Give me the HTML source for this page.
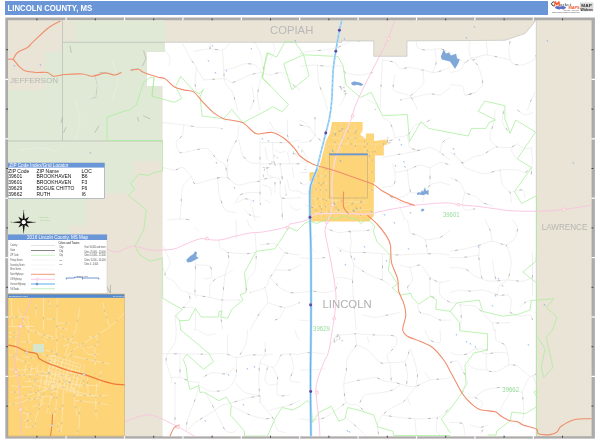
<!DOCTYPE html>
<html><head><meta charset="utf-8">
<style>
html,body{margin:0;padding:0;background:#fff;}
body{width:600px;height:440px;overflow:hidden;position:relative;font-family:"Liberation Sans",sans-serif;}
svg{position:absolute;left:0;top:0;will-change:transform;}
text{font-family:"Liberation Sans",sans-serif;}
.s{font-family:"Liberation Serif",serif;}
</style></head><body>
<svg width="600" height="440" viewBox="0 0 600 440">
<rect x="5" y="1" width="543" height="14" fill="#6a96d8"/>
<text x="7.5" y="11.1" font-size="8.3" font-weight="bold" fill="#fff" textLength="84.6" lengthAdjust="spacingAndGlyphs">LINCOLN COUNTY, MS</text>
<rect x="5.3" y="17.5" width="589.6" height="421.1" fill="#adaaaa"/>
<defs><clipPath id="mc"><rect x="8" y="20.3" width="583.6" height="415.9"/></clipPath></defs>
<g clip-path="url(#mc)">
<rect x="7" y="19" width="586" height="418" fill="#e9e4d6"/>
<path d="M62.5,20 L165,20 L165,52 L147,52 L147,86 L161,86 L161,161 L134,161 L134,193 L87,193 L87,225 L70,225 L70,236 L7,236 L7,110 L7,90 L45,90 L45,52 L62.5,52 Z" fill="#dfe9d5"/>
<rect x="62.5" y="20" width="14.5" height="21.8" fill="#e7e5d5"/>
<path d="M165,42.3 L341.5,42.3 L341.5,40.9 L373.8,40.9 L373.8,56.3 L407,56.3 L407,40.9 L470,40.7 L505,40.3 L512,38 L525,33.5 L531,27 L536.3,20 L536.3,437 L162.6,437 L162.6,86 L147,86 L147,52 L165,52 Z" fill="#fff"/>
<path d="M62.5,20 L62.5,141 M62.5,42.3 L165,42.3 M8,141 L162.6,141" fill="none" stroke="#b9bcb6" stroke-width="0.7"/>
<path d="M165,42.3 L341.5,42.3 L341.5,40.9 L373.8,40.9 L373.8,56.3 L407,56.3 L407,40.9 L505,40.3 L525,33.5 L536.3,20 M536.3,20 L536.3,437" fill="none" stroke="#c4c4c0" stroke-width="0.7"/>
<path d="M332,122 L362.6,122 L362.6,131 L360,134.5 L366,139 L366,133.5 L374,133.5 L374,141 L387.5,139.5 L387.5,144.5 L383.8,145 L383.8,155.5 L375,155.5 L375,182 L373.8,183 L373.8,216 L369,221.5 L311,221.5 L311,217 L310.2,190 L313.5,181 L309.4,181 L309.4,172.6 L317.6,171.5 L321,161 L326,141 L330,133 Z" fill="#fdd478" stroke="none" stroke-width="0" stroke-linejoin="round" stroke-linecap="round" />
<defs><clipPath id="cityc"><path d="M332,122 L362.6,122 L362.6,131 L360,134.5 L366,139 L366,133.5 L374,133.5 L374,141 L387.5,139.5 L387.5,144.5 L383.8,145 L383.8,155.5 L375,155.5 L375,182 L373.8,183 L373.8,216 L369,221.5 L311,221.5 L311,217 L310.2,190 L313.5,181 L309.4,181 L309.4,172.6 L317.6,171.5 L321,161 L326,141 L330,133 Z"/></clipPath></defs>
<g clip-path="url(#cityc)">
<path d="M341,122 L341,153" fill="none" stroke="#fae6b4" stroke-width="0.5" stroke-linejoin="round" stroke-linecap="round" />
<path d="M355,124 L355.5,153" fill="none" stroke="#fae6b4" stroke-width="0.5" stroke-linejoin="round" stroke-linecap="round" />
<path d="M364.6,134 L365,153" fill="none" stroke="#fae6b4" stroke-width="0.5" stroke-linejoin="round" stroke-linecap="round" />
<path d="M332,131 L362,131" fill="none" stroke="#fae6b4" stroke-width="0.5" stroke-linejoin="round" stroke-linecap="round" />
<path d="M333,138 L366,138" fill="none" stroke="#fae6b4" stroke-width="0.5" stroke-linejoin="round" stroke-linecap="round" />
<path d="M328,144 L383,144" fill="none" stroke="#fae6b4" stroke-width="0.5" stroke-linejoin="round" stroke-linecap="round" />
<path d="M348,122 L348,144" fill="none" stroke="#fae6b4" stroke-width="0.5" stroke-linejoin="round" stroke-linecap="round" />
<path d="M335,126 L335,150" fill="none" stroke="#fae6b4" stroke-width="0.5" stroke-linejoin="round" stroke-linecap="round" />
<path d="M375,144 L375.5,156" fill="none" stroke="#fae6b4" stroke-width="0.5" stroke-linejoin="round" stroke-linecap="round" />
<path d="M368,156 L375,150" fill="none" stroke="#fae6b4" stroke-width="0.5" stroke-linejoin="round" stroke-linecap="round" />
<path d="M312,176 L329,176" fill="none" stroke="#fae6b4" stroke-width="0.5" stroke-linejoin="round" stroke-linecap="round" />
<path d="M312,183 L329,183" fill="none" stroke="#fae6b4" stroke-width="0.5" stroke-linejoin="round" stroke-linecap="round" />
<path d="M314,190 L329.5,190" fill="none" stroke="#fae6b4" stroke-width="0.5" stroke-linejoin="round" stroke-linecap="round" />
<path d="M312,198 L329,200" fill="none" stroke="#fae6b4" stroke-width="0.5" stroke-linejoin="round" stroke-linecap="round" />
<path d="M312,206 L330,207" fill="none" stroke="#fae6b4" stroke-width="0.5" stroke-linejoin="round" stroke-linecap="round" />
<path d="M316,172 L316,220" fill="none" stroke="#fae6b4" stroke-width="0.5" stroke-linejoin="round" stroke-linecap="round" />
<path d="M321,165 L321.5,220" fill="none" stroke="#fae6b4" stroke-width="0.5" stroke-linejoin="round" stroke-linecap="round" />
<path d="M326,150 L326.5,215" fill="none" stroke="#fae6b4" stroke-width="0.5" stroke-linejoin="round" stroke-linecap="round" />
<path d="M329.5,200 L368,203" fill="none" stroke="#fae6b4" stroke-width="0.5" stroke-linejoin="round" stroke-linecap="round" />
<path d="M336,198 L336,221" fill="none" stroke="#fae6b4" stroke-width="0.5" stroke-linejoin="round" stroke-linecap="round" />
<path d="M352,198 L352,221" fill="none" stroke="#fae6b4" stroke-width="0.5" stroke-linejoin="round" stroke-linecap="round" />
<path d="M360,198 L361,221" fill="none" stroke="#fae6b4" stroke-width="0.5" stroke-linejoin="round" stroke-linecap="round" />
<path d="M368,160 L374,160" fill="none" stroke="#fae6b4" stroke-width="0.5" stroke-linejoin="round" stroke-linecap="round" />
<path d="M368,172 L375,172" fill="none" stroke="#fae6b4" stroke-width="0.5" stroke-linejoin="round" stroke-linecap="round" />
<path d="M368,190 L374,190" fill="none" stroke="#fae6b4" stroke-width="0.5" stroke-linejoin="round" stroke-linecap="round" />
<path d="M312,213 L372,209" fill="none" stroke="#fae6b4" stroke-width="0.5" stroke-linejoin="round" stroke-linecap="round" />
<path d="M345,205 L366,200" fill="none" stroke="#fae6b4" stroke-width="0.5" stroke-linejoin="round" stroke-linecap="round" />
<path d="M341.0,129.7 l0.0,2.2 M341.0,144.0 l0.0,2.2 M355.1,131.9 l0.0,2.2 M355.4,144.9 l0.0,2.2 M364.7,140.2 l0.0,2.2 M364.8,145.6 l0.0,2.2 M338.1,131.0 l2.2,0.0 M355.0,131.0 l2.2,0.0 M341.3,138.0 l2.2,0.0 M354.3,138.0 l2.2,0.0 M350.0,144.0 l2.2,0.0 M366.2,144.0 l2.2,0.0 M348.0,130.1 l0.0,2.2 M348.0,137.3 l0.0,2.2 M335.0,133.9 l0.0,2.2 M335.0,141.1 l0.0,2.2 M375.3,150.3 l0.1,2.2 M372.0,152.6 l1.7,-1.4 M317.2,176.0 l2.2,0.0 M324.7,176.0 l2.2,0.0 M317.7,183.0 l2.2,0.0 M322.4,183.0 l2.2,0.0 M319.5,190.0 l2.2,0.0 M325.1,190.0 l2.2,0.0 M316.4,198.5 l2.2,0.3 M322.3,199.2 l2.2,0.3 M318.7,206.4 l2.2,0.1 M324.5,206.7 l2.2,0.1 M316.0,188.5 l0.0,2.2 M316.0,209.2 l0.0,2.2 M321.2,183.9 l0.0,2.2 M321.4,208.1 l0.0,2.2 M326.1,168.1 l0.0,2.2 M326.4,199.4 l0.0,2.2 M340.6,200.9 l2.2,0.2 M359.8,202.4 l2.2,0.2 M336.0,206.6 l0.0,2.2 M336.0,212.2 l0.0,2.2 M352.0,203.2 l0.0,2.2 M352.0,212.8 l0.0,2.2 M360.4,207.0 l0.1,2.2 M360.7,213.8 l0.1,2.2 M371.2,160.0 l2.2,0.0 M371.2,172.0 l2.2,0.0 M371.0,190.0 l2.2,0.0 M328.6,211.9 l2.2,-0.1 M352.2,210.3 l2.2,-0.1 M351.7,203.4 l2.1,-0.5 M360.1,201.4 l2.1,-0.5" fill="none" stroke="#7a6e50" stroke-width="0.45" opacity="0.7"/>
<path d="M334,202.7 l1,1.8" stroke="#6aa0e0" stroke-width="0.8" fill="none"/>
<path d="M353.4,210 l1,1.8" stroke="#6aa0e0" stroke-width="0.8" fill="none"/>
<path d="M356,207.5 l1,1.8" stroke="#6aa0e0" stroke-width="0.8" fill="none"/>
<path d="M338,209 l1,1.8" stroke="#6aa0e0" stroke-width="0.8" fill="none"/>
<path d="M332,150 l1,1.8" stroke="#6aa0e0" stroke-width="0.8" fill="none"/>
<path d="M340,160 l1,1.8" stroke="#6aa0e0" stroke-width="0.8" fill="none"/>
<path d="M321,212 l1,1.8" stroke="#6aa0e0" stroke-width="0.8" fill="none"/>
</g>
<defs><clipPath id="cc"><path d="M165,42.3 L341.5,42.3 L341.5,40.9 L373.8,40.9 L373.8,56.3 L407,56.3 L407,40.9 L505,40.3 L525,33.5 L536.3,20 L536.3,437 L162.6,437 L162.6,86 L147,86 L147,52 L165,52 Z"/></clipPath></defs>
<g clip-path="url(#cc)">
<path d="M182.5,43.8 C183.1,44.9 186.4,50.5 187.5,52.5 C188.6,54.5 190.1,58.1 191.2,60.0 C192.3,61.9 195.7,64.7 196.2,67.5 C196.7,70.3 195.0,79.7 195.0,82.5 C195.0,85.3 196.0,89.1 196.2,90.0" fill="none" stroke="#e0e0e0" stroke-width="0.5" stroke-linejoin="round" stroke-linecap="round" />
<path d="M182.5,43.8 C183.1,44.9 186.4,50.5 187.5,52.5 C188.6,54.5 190.1,58.1 191.2,60.0 C192.3,61.9 195.7,64.7 196.2,67.5 C196.7,70.3 195.0,79.7 195.0,82.5 C195.0,85.3 196.0,89.1 196.2,90.0" fill="none" stroke="#555" stroke-width="0.5" stroke-linejoin="round" stroke-linecap="butt" stroke-dasharray="2.6 22" stroke-dashoffset="5" opacity="0.7"/>
<path d="M193.8,51.2 C195.8,50.9 206.4,48.9 210.0,48.8 C213.6,48.6 220.0,50.8 222.5,50.0 C225.0,49.2 229.1,43.4 230.0,42.5" fill="none" stroke="#e0e0e0" stroke-width="0.5" stroke-linejoin="round" stroke-linecap="round" />
<path d="M193.8,51.2 C195.8,50.9 206.4,48.9 210.0,48.8 C213.6,48.6 220.0,50.8 222.5,50.0 C225.0,49.2 229.1,43.4 230.0,42.5" fill="none" stroke="#555" stroke-width="0.5" stroke-linejoin="round" stroke-linecap="butt" stroke-dasharray="2.6 29" stroke-dashoffset="10" opacity="0.7"/>
<path d="M210.0,42.5 L210.0,48.8" fill="none" stroke="#e0e0e0" stroke-width="0.5" stroke-linejoin="round" stroke-linecap="round" />
<path d="M210.0,42.5 L210.0,48.8" fill="none" stroke="#555" stroke-width="0.5" stroke-linejoin="round" stroke-linecap="round" stroke-dasharray="2.6 17" stroke-dashoffset="15" opacity="0.7"/>
<path d="M222.5,50.0 C222.7,52.5 223.5,65.9 223.8,70.0 C224.1,74.1 223.9,79.7 225.0,82.5 C226.1,85.3 230.9,89.1 232.5,92.5 C234.1,95.9 236.9,107.8 237.5,110.0" fill="none" stroke="#e0e0e0" stroke-width="0.5" stroke-linejoin="round" stroke-linecap="round" />
<path d="M222.5,50.0 C222.7,52.5 223.5,65.9 223.8,70.0 C224.1,74.1 223.9,79.7 225.0,82.5 C226.1,85.3 230.9,89.1 232.5,92.5 C234.1,95.9 236.9,107.8 237.5,110.0" fill="none" stroke="#555" stroke-width="0.5" stroke-linejoin="round" stroke-linecap="butt" stroke-dasharray="2.6 24" stroke-dashoffset="3" opacity="0.7"/>
<path d="M223.8,70.0 C225.2,69.7 232.3,68.3 235.0,67.5 C237.7,66.7 242.5,64.1 245.0,63.8 C247.5,63.5 253.0,63.9 255.0,65.0 C257.0,66.1 260.6,70.3 261.2,72.5 C261.8,74.7 260.5,79.7 260.0,82.5 C259.5,85.3 257.5,91.6 257.5,95.0 C257.5,98.4 259.7,108.1 260.0,110.0" fill="none" stroke="#e0e0e0" stroke-width="0.5" stroke-linejoin="round" stroke-linecap="round" />
<path d="M223.8,70.0 C225.2,69.7 232.3,68.3 235.0,67.5 C237.7,66.7 242.5,64.1 245.0,63.8 C247.5,63.5 253.0,63.9 255.0,65.0 C257.0,66.1 260.6,70.3 261.2,72.5 C261.8,74.7 260.5,79.7 260.0,82.5 C259.5,85.3 257.5,91.6 257.5,95.0 C257.5,98.4 259.7,108.1 260.0,110.0" fill="none" stroke="#555" stroke-width="0.5" stroke-linejoin="round" stroke-linecap="butt" stroke-dasharray="2.6 31" stroke-dashoffset="8" opacity="0.7"/>
<path d="M203.8,80.0 C206.5,79.8 221.4,78.5 225.0,78.8 C228.6,79.1 229.4,83.0 232.5,82.5 C235.6,82.0 246.6,76.2 250.0,75.0 C253.4,73.8 258.8,72.8 260.0,72.5" fill="none" stroke="#e0e0e0" stroke-width="0.5" stroke-linejoin="round" stroke-linecap="round" />
<path d="M203.8,80.0 C206.5,79.8 221.4,78.5 225.0,78.8 C228.6,79.1 229.4,83.0 232.5,82.5 C235.6,82.0 246.6,76.2 250.0,75.0 C253.4,73.8 258.8,72.8 260.0,72.5" fill="none" stroke="#555" stroke-width="0.5" stroke-linejoin="round" stroke-linecap="butt" stroke-dasharray="2.6 19" stroke-dashoffset="13" opacity="0.7"/>
<path d="M253.8,41.2 C254.6,42.6 258.8,48.9 260.0,52.5 C261.2,56.1 263.3,67.8 263.8,70.0" fill="none" stroke="#e0e0e0" stroke-width="0.5" stroke-linejoin="round" stroke-linecap="round" />
<path d="M253.8,41.2 C254.6,42.6 258.8,48.9 260.0,52.5 C261.2,56.1 263.3,67.8 263.8,70.0" fill="none" stroke="#555" stroke-width="0.5" stroke-linejoin="round" stroke-linecap="butt" stroke-dasharray="2.6 26" stroke-dashoffset="1" opacity="0.7"/>
<path d="M272.5,42.5 C272.8,43.4 275.3,47.8 275.0,50.0 C274.7,52.2 270.6,58.8 270.0,60.0" fill="none" stroke="#e0e0e0" stroke-width="0.5" stroke-linejoin="round" stroke-linecap="round" />
<path d="M272.5,42.5 C272.8,43.4 275.3,47.8 275.0,50.0 C274.7,52.2 270.6,58.8 270.0,60.0" fill="none" stroke="#555" stroke-width="0.5" stroke-linejoin="round" stroke-linecap="butt" stroke-dasharray="2.6 33" stroke-dashoffset="6" opacity="0.7"/>
<path d="M252.5,87.5 C252.7,89.1 254.1,97.2 253.8,100.0 C253.5,102.8 250.5,108.8 250.0,110.0" fill="none" stroke="#e0e0e0" stroke-width="0.5" stroke-linejoin="round" stroke-linecap="round" />
<path d="M252.5,87.5 C252.7,89.1 254.1,97.2 253.8,100.0 C253.5,102.8 250.5,108.8 250.0,110.0" fill="none" stroke="#555" stroke-width="0.5" stroke-linejoin="round" stroke-linecap="butt" stroke-dasharray="2.6 21" stroke-dashoffset="11" opacity="0.7"/>
<path d="M282.5,75.0 C283.4,75.9 287.8,80.6 290.0,82.5 C292.2,84.4 298.8,89.1 300.0,90.0" fill="none" stroke="#e0e0e0" stroke-width="0.5" stroke-linejoin="round" stroke-linecap="round" />
<path d="M282.5,75.0 C283.4,75.9 287.8,80.6 290.0,82.5 C292.2,84.4 298.8,89.1 300.0,90.0" fill="none" stroke="#555" stroke-width="0.5" stroke-linejoin="round" stroke-linecap="butt" stroke-dasharray="2.6 28" stroke-dashoffset="16" opacity="0.7"/>
<path d="M261.2,72.5 C262.3,72.8 267.6,75.0 270.0,75.0 C272.4,75.0 277.5,72.5 280.0,72.5 C282.5,72.5 288.8,74.7 290.0,75.0" fill="none" stroke="#e0e0e0" stroke-width="0.5" stroke-linejoin="round" stroke-linecap="round" />
<path d="M261.2,72.5 C262.3,72.8 267.6,75.0 270.0,75.0 C272.4,75.0 277.5,72.5 280.0,72.5 C282.5,72.5 288.8,74.7 290.0,75.0" fill="none" stroke="#555" stroke-width="0.5" stroke-linejoin="round" stroke-linecap="butt" stroke-dasharray="2.6 16" stroke-dashoffset="4" opacity="0.7"/>
<path d="M196.2,67.5 L203.8,80.0" fill="none" stroke="#e0e0e0" stroke-width="0.5" stroke-linejoin="round" stroke-linecap="round" />
<path d="M196.2,67.5 L203.8,80.0" fill="none" stroke="#555" stroke-width="0.5" stroke-linejoin="round" stroke-linecap="round" stroke-dasharray="2.6 23" stroke-dashoffset="9" opacity="0.7"/>
<path d="M165.0,50.0 C165.6,50.9 169.5,55.6 170.0,57.5 C170.5,59.4 169.0,64.1 168.8,65.0" fill="none" stroke="#e0e0e0" stroke-width="0.5" stroke-linejoin="round" stroke-linecap="round" />
<path d="M165.0,50.0 C165.6,50.9 169.5,55.6 170.0,57.5 C170.5,59.4 169.0,64.1 168.8,65.0" fill="none" stroke="#555" stroke-width="0.5" stroke-linejoin="round" stroke-linecap="butt" stroke-dasharray="2.6 30" stroke-dashoffset="14" opacity="0.7"/>
<path d="M300.0,53.8 C301.2,53.5 306.9,51.7 310.0,51.2 C313.1,50.7 321.6,50.5 325.0,50.0 C328.4,49.5 334.1,48.6 337.5,47.5 C340.9,46.4 348.1,42.0 352.5,41.2 C356.9,40.4 370.0,41.2 372.5,41.2" fill="none" stroke="#e0e0e0" stroke-width="0.5" stroke-linejoin="round" stroke-linecap="round" />
<path d="M300.0,53.8 C301.2,53.5 306.9,51.7 310.0,51.2 C313.1,50.7 321.6,50.5 325.0,50.0 C328.4,49.5 334.1,48.6 337.5,47.5 C340.9,46.4 348.1,42.0 352.5,41.2 C356.9,40.4 370.0,41.2 372.5,41.2" fill="none" stroke="#555" stroke-width="0.5" stroke-linejoin="round" stroke-linecap="butt" stroke-dasharray="2.6 18" stroke-dashoffset="2" opacity="0.7"/>
<path d="M300.0,66.2 C301.9,66.0 311.9,65.0 315.0,65.0 C318.1,65.0 321.6,66.0 325.0,66.2 C328.4,66.4 340.0,65.4 342.5,66.2 C345.0,67.0 342.8,71.4 345.0,72.5 C347.2,73.6 356.6,75.0 360.0,75.0 C363.4,75.0 370.9,72.8 372.5,72.5" fill="none" stroke="#e0e0e0" stroke-width="0.5" stroke-linejoin="round" stroke-linecap="round" />
<path d="M300.0,66.2 C301.9,66.0 311.9,65.0 315.0,65.0 C318.1,65.0 321.6,66.0 325.0,66.2 C328.4,66.4 340.0,65.4 342.5,66.2 C345.0,67.0 342.8,71.4 345.0,72.5 C347.2,73.6 356.6,75.0 360.0,75.0 C363.4,75.0 370.9,72.8 372.5,72.5" fill="none" stroke="#555" stroke-width="0.5" stroke-linejoin="round" stroke-linecap="butt" stroke-dasharray="2.6 25" stroke-dashoffset="7" opacity="0.7"/>
<path d="M317.5,65.0 C317.7,67.2 317.9,78.1 318.8,82.5 C319.7,86.9 323.9,96.6 325.0,100.0 C326.1,103.4 327.2,108.8 327.5,110.0" fill="none" stroke="#e0e0e0" stroke-width="0.5" stroke-linejoin="round" stroke-linecap="round" />
<path d="M317.5,65.0 C317.7,67.2 317.9,78.1 318.8,82.5 C319.7,86.9 323.9,96.6 325.0,100.0 C326.1,103.4 327.2,108.8 327.5,110.0" fill="none" stroke="#555" stroke-width="0.5" stroke-linejoin="round" stroke-linecap="butt" stroke-dasharray="2.6 32" stroke-dashoffset="12" opacity="0.7"/>
<path d="M340.0,86.2 C340.6,87.3 345.0,92.7 345.0,95.0 C345.0,97.3 340.6,103.8 340.0,105.0" fill="none" stroke="#e0e0e0" stroke-width="0.5" stroke-linejoin="round" stroke-linecap="round" />
<path d="M340.0,86.2 C340.6,87.3 345.0,92.7 345.0,95.0 C345.0,97.3 340.6,103.8 340.0,105.0" fill="none" stroke="#555" stroke-width="0.5" stroke-linejoin="round" stroke-linecap="butt" stroke-dasharray="2.6 20" stroke-dashoffset="0" opacity="0.7"/>
<path d="M382.5,60.0 C382.3,62.8 381.5,76.2 381.2,82.5 C380.9,88.8 380.1,106.6 380.0,110.0" fill="none" stroke="#e0e0e0" stroke-width="0.5" stroke-linejoin="round" stroke-linecap="round" />
<path d="M382.5,60.0 C382.3,62.8 381.5,76.2 381.2,82.5 C380.9,88.8 380.1,106.6 380.0,110.0" fill="none" stroke="#555" stroke-width="0.5" stroke-linejoin="round" stroke-linecap="butt" stroke-dasharray="2.6 27" stroke-dashoffset="5" opacity="0.7"/>
<path d="M382.5,60.0 C384.1,60.3 392.8,61.4 395.0,62.5 C397.2,63.6 398.1,68.2 400.0,68.8 C401.9,69.4 407.2,67.3 410.0,67.5 C412.8,67.7 419.4,69.4 422.5,70.0 C425.6,70.6 431.6,72.8 435.0,72.5 C438.4,72.2 448.1,68.1 450.0,67.5" fill="none" stroke="#e0e0e0" stroke-width="0.5" stroke-linejoin="round" stroke-linecap="round" />
<path d="M382.5,60.0 C384.1,60.3 392.8,61.4 395.0,62.5 C397.2,63.6 398.1,68.2 400.0,68.8 C401.9,69.4 407.2,67.3 410.0,67.5 C412.8,67.7 419.4,69.4 422.5,70.0 C425.6,70.6 431.6,72.8 435.0,72.5 C438.4,72.2 448.1,68.1 450.0,67.5" fill="none" stroke="#555" stroke-width="0.5" stroke-linejoin="round" stroke-linecap="butt" stroke-dasharray="2.6 15" stroke-dashoffset="10" opacity="0.7"/>
<path d="M395.0,75.0 C394.9,76.9 391.9,87.3 393.8,90.0 C395.7,92.7 407.0,93.7 410.0,96.2 C413.0,98.7 416.6,108.3 417.5,110.0" fill="none" stroke="#e0e0e0" stroke-width="0.5" stroke-linejoin="round" stroke-linecap="round" />
<path d="M395.0,75.0 C394.9,76.9 391.9,87.3 393.8,90.0 C395.7,92.7 407.0,93.7 410.0,96.2 C413.0,98.7 416.6,108.3 417.5,110.0" fill="none" stroke="#555" stroke-width="0.5" stroke-linejoin="round" stroke-linecap="butt" stroke-dasharray="2.6 22" stroke-dashoffset="15" opacity="0.7"/>
<path d="M422.5,70.0 C422.7,71.6 424.4,80.0 423.8,82.5 C423.2,85.0 419.2,88.3 417.5,90.0 C415.8,91.7 410.9,95.4 410.0,96.2" fill="none" stroke="#e0e0e0" stroke-width="0.5" stroke-linejoin="round" stroke-linecap="round" />
<path d="M422.5,70.0 C422.7,71.6 424.4,80.0 423.8,82.5 C423.2,85.0 419.2,88.3 417.5,90.0 C415.8,91.7 410.9,95.4 410.0,96.2" fill="none" stroke="#555" stroke-width="0.5" stroke-linejoin="round" stroke-linecap="butt" stroke-dasharray="2.6 29" stroke-dashoffset="3" opacity="0.7"/>
<path d="M416.2,41.2 C416.4,42.0 416.4,46.4 417.5,47.5 C418.6,48.6 422.2,49.8 425.0,50.0 C427.8,50.2 436.9,48.5 440.0,48.8 C443.1,49.1 448.8,52.0 450.0,52.5" fill="none" stroke="#e0e0e0" stroke-width="0.5" stroke-linejoin="round" stroke-linecap="round" />
<path d="M416.2,41.2 C416.4,42.0 416.4,46.4 417.5,47.5 C418.6,48.6 422.2,49.8 425.0,50.0 C427.8,50.2 436.9,48.5 440.0,48.8 C443.1,49.1 448.8,52.0 450.0,52.5" fill="none" stroke="#555" stroke-width="0.5" stroke-linejoin="round" stroke-linecap="butt" stroke-dasharray="2.6 17" stroke-dashoffset="8" opacity="0.7"/>
<path d="M435.0,48.8 C435.1,50.5 436.5,59.5 436.2,62.5 C435.9,65.5 433.0,71.2 432.5,72.5" fill="none" stroke="#e0e0e0" stroke-width="0.5" stroke-linejoin="round" stroke-linecap="round" />
<path d="M435.0,48.8 C435.1,50.5 436.5,59.5 436.2,62.5 C435.9,65.5 433.0,71.2 432.5,72.5" fill="none" stroke="#555" stroke-width="0.5" stroke-linejoin="round" stroke-linecap="butt" stroke-dasharray="2.6 24" stroke-dashoffset="13" opacity="0.7"/>
<path d="M400.0,100.0 C401.6,99.7 408.8,98.3 412.5,97.5 C416.2,96.7 426.6,94.1 430.0,93.8 C433.4,93.5 437.5,95.8 440.0,95.0 C442.5,94.2 448.8,88.4 450.0,87.5" fill="none" stroke="#e0e0e0" stroke-width="0.5" stroke-linejoin="round" stroke-linecap="round" />
<path d="M400.0,100.0 C401.6,99.7 408.8,98.3 412.5,97.5 C416.2,96.7 426.6,94.1 430.0,93.8 C433.4,93.5 437.5,95.8 440.0,95.0 C442.5,94.2 448.8,88.4 450.0,87.5" fill="none" stroke="#555" stroke-width="0.5" stroke-linejoin="round" stroke-linecap="butt" stroke-dasharray="2.6 31" stroke-dashoffset="1" opacity="0.7"/>
<path d="M367.5,100.0 C368.8,100.6 376.6,103.8 377.5,105.0 C378.4,106.2 375.3,109.4 375.0,110.0" fill="none" stroke="#e0e0e0" stroke-width="0.5" stroke-linejoin="round" stroke-linecap="round" />
<path d="M367.5,100.0 C368.8,100.6 376.6,103.8 377.5,105.0 C378.4,106.2 375.3,109.4 375.0,110.0" fill="none" stroke="#555" stroke-width="0.5" stroke-linejoin="round" stroke-linecap="butt" stroke-dasharray="2.6 19" stroke-dashoffset="6" opacity="0.7"/>
<path d="M345.0,72.5 L343.8,87.5" fill="none" stroke="#e0e0e0" stroke-width="0.5" stroke-linejoin="round" stroke-linecap="round" />
<path d="M345.0,72.5 L343.8,87.5" fill="none" stroke="#555" stroke-width="0.5" stroke-linejoin="round" stroke-linecap="round" stroke-dasharray="2.6 26" stroke-dashoffset="11" opacity="0.7"/>
<path d="M450.0,52.5 C450.9,53.1 455.6,56.2 457.5,57.5 C459.4,58.8 463.4,62.3 465.0,62.5 C466.6,62.7 468.1,59.6 470.0,58.8 C471.9,58.0 478.8,56.5 480.0,56.2" fill="none" stroke="#e0e0e0" stroke-width="0.5" stroke-linejoin="round" stroke-linecap="round" />
<path d="M450.0,52.5 C450.9,53.1 455.6,56.2 457.5,57.5 C459.4,58.8 463.4,62.3 465.0,62.5 C466.6,62.7 468.1,59.6 470.0,58.8 C471.9,58.0 478.8,56.5 480.0,56.2" fill="none" stroke="#555" stroke-width="0.5" stroke-linejoin="round" stroke-linecap="butt" stroke-dasharray="2.6 33" stroke-dashoffset="16" opacity="0.7"/>
<path d="M470.0,41.2 C469.9,42.3 468.5,47.6 468.8,50.0 C469.1,52.4 471.1,59.2 472.5,60.0 C473.9,60.8 478.1,56.8 480.0,56.2 C481.9,55.6 483.8,54.5 487.5,55.0 C491.2,55.5 506.9,58.9 510.0,60.0 C513.1,61.1 510.9,63.2 512.5,63.8 C514.1,64.4 519.8,65.5 522.5,65.0 C525.2,64.5 532.1,61.2 533.8,60.0 C535.5,58.8 535.9,55.6 536.2,55.0" fill="none" stroke="#e0e0e0" stroke-width="0.5" stroke-linejoin="round" stroke-linecap="round" />
<path d="M470.0,41.2 C469.9,42.3 468.5,47.6 468.8,50.0 C469.1,52.4 471.1,59.2 472.5,60.0 C473.9,60.8 478.1,56.8 480.0,56.2 C481.9,55.6 483.8,54.5 487.5,55.0 C491.2,55.5 506.9,58.9 510.0,60.0 C513.1,61.1 510.9,63.2 512.5,63.8 C514.1,64.4 519.8,65.5 522.5,65.0 C525.2,64.5 532.1,61.2 533.8,60.0 C535.5,58.8 535.9,55.6 536.2,55.0" fill="none" stroke="#555" stroke-width="0.5" stroke-linejoin="round" stroke-linecap="butt" stroke-dasharray="2.6 21" stroke-dashoffset="4" opacity="0.7"/>
<path d="M486.2,41.2 L487.5,55.0" fill="none" stroke="#e0e0e0" stroke-width="0.5" stroke-linejoin="round" stroke-linecap="round" />
<path d="M486.2,41.2 L487.5,55.0" fill="none" stroke="#555" stroke-width="0.5" stroke-linejoin="round" stroke-linecap="round" stroke-dasharray="2.6 28" stroke-dashoffset="9" opacity="0.7"/>
<path d="M472.5,60.0 C473.1,60.6 476.4,63.1 477.5,65.0 C478.6,66.9 480.6,72.5 481.2,75.0 C481.8,77.5 483.3,82.8 482.5,85.0 C481.7,87.2 477.2,91.2 475.0,92.5 C472.8,93.8 466.2,94.7 465.0,95.0" fill="none" stroke="#e0e0e0" stroke-width="0.5" stroke-linejoin="round" stroke-linecap="round" />
<path d="M472.5,60.0 C473.1,60.6 476.4,63.1 477.5,65.0 C478.6,66.9 480.6,72.5 481.2,75.0 C481.8,77.5 483.3,82.8 482.5,85.0 C481.7,87.2 477.2,91.2 475.0,92.5 C472.8,93.8 466.2,94.7 465.0,95.0" fill="none" stroke="#555" stroke-width="0.5" stroke-linejoin="round" stroke-linecap="butt" stroke-dasharray="2.6 16" stroke-dashoffset="14" opacity="0.7"/>
<path d="M465.0,62.5 C464.4,63.4 461.9,68.8 460.0,70.0 C458.1,71.2 451.2,72.2 450.0,72.5" fill="none" stroke="#e0e0e0" stroke-width="0.5" stroke-linejoin="round" stroke-linecap="round" />
<path d="M465.0,62.5 C464.4,63.4 461.9,68.8 460.0,70.0 C458.1,71.2 451.2,72.2 450.0,72.5" fill="none" stroke="#555" stroke-width="0.5" stroke-linejoin="round" stroke-linecap="butt" stroke-dasharray="2.6 23" stroke-dashoffset="2" opacity="0.7"/>
<path d="M450.0,85.0 C451.6,85.2 460.6,85.0 462.5,86.2 C464.4,87.5 463.4,94.2 465.0,95.0 C466.6,95.8 473.8,92.8 475.0,92.5" fill="none" stroke="#e0e0e0" stroke-width="0.5" stroke-linejoin="round" stroke-linecap="round" />
<path d="M450.0,85.0 C451.6,85.2 460.6,85.0 462.5,86.2 C464.4,87.5 463.4,94.2 465.0,95.0 C466.6,95.8 473.8,92.8 475.0,92.5" fill="none" stroke="#555" stroke-width="0.5" stroke-linejoin="round" stroke-linecap="butt" stroke-dasharray="2.6 30" stroke-dashoffset="7" opacity="0.7"/>
<path d="M527.5,110.0 C528.0,108.8 530.3,102.2 531.2,100.0 C532.1,97.8 534.5,93.4 535.0,92.5" fill="none" stroke="#e0e0e0" stroke-width="0.5" stroke-linejoin="round" stroke-linecap="round" />
<path d="M527.5,110.0 C528.0,108.8 530.3,102.2 531.2,100.0 C532.1,97.8 534.5,93.4 535.0,92.5" fill="none" stroke="#555" stroke-width="0.5" stroke-linejoin="round" stroke-linecap="butt" stroke-dasharray="2.6 18" stroke-dashoffset="12" opacity="0.7"/>
<path d="M510.0,41.2 C509.9,42.3 508.8,47.6 508.8,50.0 C508.8,52.4 509.9,58.8 510.0,60.0" fill="none" stroke="#e0e0e0" stroke-width="0.5" stroke-linejoin="round" stroke-linecap="round" />
<path d="M510.0,41.2 C509.9,42.3 508.8,47.6 508.8,50.0 C508.8,52.4 509.9,58.8 510.0,60.0" fill="none" stroke="#555" stroke-width="0.5" stroke-linejoin="round" stroke-linecap="butt" stroke-dasharray="2.6 25" stroke-dashoffset="0" opacity="0.7"/>
<path d="M265.0,147.5 L267.5,160.0" fill="none" stroke="#e0e0e0" stroke-width="0.5" stroke-linejoin="round" stroke-linecap="round" />
<path d="M265.0,147.5 L267.5,160.0" fill="none" stroke="#555" stroke-width="0.5" stroke-linejoin="round" stroke-linecap="round" stroke-dasharray="2.6 32" stroke-dashoffset="5" opacity="0.7"/>
<path d="M275.0,150.0 C275.6,150.3 278.8,152.3 280.0,152.5 C281.2,152.7 284.4,151.4 285.0,151.2" fill="none" stroke="#e0e0e0" stroke-width="0.5" stroke-linejoin="round" stroke-linecap="round" />
<path d="M275.0,150.0 C275.6,150.3 278.8,152.3 280.0,152.5 C281.2,152.7 284.4,151.4 285.0,151.2" fill="none" stroke="#555" stroke-width="0.5" stroke-linejoin="round" stroke-linecap="butt" stroke-dasharray="2.6 20" stroke-dashoffset="10" opacity="0.7"/>
<path d="M287.5,152.5 L290.0,163.8" fill="none" stroke="#e0e0e0" stroke-width="0.5" stroke-linejoin="round" stroke-linecap="round" />
<path d="M287.5,152.5 L290.0,163.8" fill="none" stroke="#555" stroke-width="0.5" stroke-linejoin="round" stroke-linecap="round" stroke-dasharray="2.6 27" stroke-dashoffset="15" opacity="0.7"/>
<path d="M295.0,155.0 L300.0,153.8" fill="none" stroke="#e0e0e0" stroke-width="0.5" stroke-linejoin="round" stroke-linecap="round" />
<path d="M295.0,155.0 L300.0,153.8" fill="none" stroke="#555" stroke-width="0.5" stroke-linejoin="round" stroke-linecap="round" stroke-dasharray="2.6 15" stroke-dashoffset="3" opacity="0.7"/>
<path d="M267.5,167.5 C267.5,168.4 266.9,173.9 267.5,175.0 C268.1,176.1 271.9,176.0 272.5,176.2" fill="none" stroke="#e0e0e0" stroke-width="0.5" stroke-linejoin="round" stroke-linecap="round" />
<path d="M267.5,167.5 C267.5,168.4 266.9,173.9 267.5,175.0 C268.1,176.1 271.9,176.0 272.5,176.2" fill="none" stroke="#555" stroke-width="0.5" stroke-linejoin="round" stroke-linecap="butt" stroke-dasharray="2.6 22" stroke-dashoffset="8" opacity="0.7"/>
<path d="M262.5,185.0 C263.4,185.3 268.9,186.2 270.0,187.5 C271.1,188.8 271.1,194.1 271.2,195.0" fill="none" stroke="#e0e0e0" stroke-width="0.5" stroke-linejoin="round" stroke-linecap="round" />
<path d="M262.5,185.0 C263.4,185.3 268.9,186.2 270.0,187.5 C271.1,188.8 271.1,194.1 271.2,195.0" fill="none" stroke="#555" stroke-width="0.5" stroke-linejoin="round" stroke-linecap="butt" stroke-dasharray="2.6 29" stroke-dashoffset="13" opacity="0.7"/>
<path d="M275.0,182.5 L275.0,192.5" fill="none" stroke="#e0e0e0" stroke-width="0.5" stroke-linejoin="round" stroke-linecap="round" />
<path d="M275.0,182.5 L275.0,192.5" fill="none" stroke="#555" stroke-width="0.5" stroke-linejoin="round" stroke-linecap="round" stroke-dasharray="2.6 17" stroke-dashoffset="1" opacity="0.7"/>
<path d="M287.5,180.0 C287.8,181.2 288.4,188.6 290.0,190.0 C291.6,191.4 298.8,191.0 300.0,191.2" fill="none" stroke="#e0e0e0" stroke-width="0.5" stroke-linejoin="round" stroke-linecap="round" />
<path d="M287.5,180.0 C287.8,181.2 288.4,188.6 290.0,190.0 C291.6,191.4 298.8,191.0 300.0,191.2" fill="none" stroke="#555" stroke-width="0.5" stroke-linejoin="round" stroke-linecap="butt" stroke-dasharray="2.6 24" stroke-dashoffset="6" opacity="0.7"/>
<path d="M265.0,200.0 L270.0,202.5" fill="none" stroke="#e0e0e0" stroke-width="0.5" stroke-linejoin="round" stroke-linecap="round" />
<path d="M265.0,200.0 L270.0,202.5" fill="none" stroke="#555" stroke-width="0.5" stroke-linejoin="round" stroke-linecap="round" stroke-dasharray="2.6 31" stroke-dashoffset="11" opacity="0.7"/>
<path d="M245.0,210.0 C245.6,210.6 248.1,214.1 250.0,215.0 C251.9,215.9 258.8,217.2 260.0,217.5" fill="none" stroke="#e0e0e0" stroke-width="0.5" stroke-linejoin="round" stroke-linecap="round" />
<path d="M245.0,210.0 C245.6,210.6 248.1,214.1 250.0,215.0 C251.9,215.9 258.8,217.2 260.0,217.5" fill="none" stroke="#555" stroke-width="0.5" stroke-linejoin="round" stroke-linecap="butt" stroke-dasharray="2.6 19" stroke-dashoffset="16" opacity="0.7"/>
<path d="M290.0,205.0 C290.6,205.6 293.8,209.5 295.0,210.0 C296.2,210.5 299.4,209.0 300.0,208.8" fill="none" stroke="#e0e0e0" stroke-width="0.5" stroke-linejoin="round" stroke-linecap="round" />
<path d="M290.0,205.0 C290.6,205.6 293.8,209.5 295.0,210.0 C296.2,210.5 299.4,209.0 300.0,208.8" fill="none" stroke="#555" stroke-width="0.5" stroke-linejoin="round" stroke-linecap="butt" stroke-dasharray="2.6 26" stroke-dashoffset="4" opacity="0.7"/>
<path d="M292.5,167.5 L293.8,177.5" fill="none" stroke="#e0e0e0" stroke-width="0.5" stroke-linejoin="round" stroke-linecap="round" />
<path d="M292.5,167.5 L293.8,177.5" fill="none" stroke="#555" stroke-width="0.5" stroke-linejoin="round" stroke-linecap="round" stroke-dasharray="2.6 33" stroke-dashoffset="9" opacity="0.7"/>
<path d="M285.0,185.0 L286.2,195.0" fill="none" stroke="#e0e0e0" stroke-width="0.5" stroke-linejoin="round" stroke-linecap="round" />
<path d="M285.0,185.0 L286.2,195.0" fill="none" stroke="#555" stroke-width="0.5" stroke-linejoin="round" stroke-linecap="round" stroke-dasharray="2.6 21" stroke-dashoffset="14" opacity="0.7"/>
<path d="M162.5,122.5 C164.1,122.7 172.2,123.5 175.0,123.8 C177.8,124.1 181.9,124.5 185.0,125.0 C188.1,125.5 196.2,127.2 200.0,127.5 C203.8,127.8 212.2,127.3 215.0,127.5 C217.8,127.7 221.6,128.6 222.5,128.8" fill="none" stroke="#e0e0e0" stroke-width="0.5" stroke-linejoin="round" stroke-linecap="round" />
<path d="M162.5,122.5 C164.1,122.7 172.2,123.5 175.0,123.8 C177.8,124.1 181.9,124.5 185.0,125.0 C188.1,125.5 196.2,127.2 200.0,127.5 C203.8,127.8 212.2,127.3 215.0,127.5 C217.8,127.7 221.6,128.6 222.5,128.8" fill="none" stroke="#555" stroke-width="0.5" stroke-linejoin="round" stroke-linecap="butt" stroke-dasharray="2.6 28" stroke-dashoffset="2" opacity="0.7"/>
<path d="M183.8,125.0 C183.6,126.2 183.4,132.8 182.5,135.0 C181.6,137.2 176.5,140.3 176.2,142.5 C175.9,144.7 177.7,151.6 180.0,152.5 C182.3,153.4 191.6,150.5 195.0,150.0 C198.4,149.5 204.7,147.6 207.5,148.8 C210.3,150.1 215.3,158.0 217.5,160.0 C219.7,162.0 223.8,162.8 225.0,165.0 C226.2,167.2 227.2,175.9 227.5,177.5" fill="none" stroke="#e0e0e0" stroke-width="0.5" stroke-linejoin="round" stroke-linecap="round" />
<path d="M183.8,125.0 C183.6,126.2 183.4,132.8 182.5,135.0 C181.6,137.2 176.5,140.3 176.2,142.5 C175.9,144.7 177.7,151.6 180.0,152.5 C182.3,153.4 191.6,150.5 195.0,150.0 C198.4,149.5 204.7,147.6 207.5,148.8 C210.3,150.1 215.3,158.0 217.5,160.0 C219.7,162.0 223.8,162.8 225.0,165.0 C226.2,167.2 227.2,175.9 227.5,177.5" fill="none" stroke="#555" stroke-width="0.5" stroke-linejoin="round" stroke-linecap="butt" stroke-dasharray="2.6 16" stroke-dashoffset="7" opacity="0.7"/>
<path d="M162.5,167.5 C164.1,167.8 172.5,170.0 175.0,170.0 C177.5,170.0 180.5,166.7 182.5,167.5 C184.5,168.3 189.6,174.2 191.2,176.2 C192.8,178.2 192.7,183.3 195.0,183.8 C197.3,184.3 206.9,180.8 210.0,180.0 C213.1,179.2 217.8,177.8 220.0,177.5 C222.2,177.2 226.6,177.5 227.5,177.5" fill="none" stroke="#e0e0e0" stroke-width="0.5" stroke-linejoin="round" stroke-linecap="round" />
<path d="M162.5,167.5 C164.1,167.8 172.5,170.0 175.0,170.0 C177.5,170.0 180.5,166.7 182.5,167.5 C184.5,168.3 189.6,174.2 191.2,176.2 C192.8,178.2 192.7,183.3 195.0,183.8 C197.3,184.3 206.9,180.8 210.0,180.0 C213.1,179.2 217.8,177.8 220.0,177.5 C222.2,177.2 226.6,177.5 227.5,177.5" fill="none" stroke="#555" stroke-width="0.5" stroke-linejoin="round" stroke-linecap="butt" stroke-dasharray="2.6 23" stroke-dashoffset="12" opacity="0.7"/>
<path d="M227.5,177.5 C228.8,178.4 234.7,184.4 237.5,185.0 C240.3,185.6 247.2,183.0 250.0,182.5 C252.8,182.0 258.8,181.4 260.0,181.2" fill="none" stroke="#e0e0e0" stroke-width="0.5" stroke-linejoin="round" stroke-linecap="round" />
<path d="M227.5,177.5 C228.8,178.4 234.7,184.4 237.5,185.0 C240.3,185.6 247.2,183.0 250.0,182.5 C252.8,182.0 258.8,181.4 260.0,181.2" fill="none" stroke="#555" stroke-width="0.5" stroke-linejoin="round" stroke-linecap="butt" stroke-dasharray="2.6 30" stroke-dashoffset="0" opacity="0.7"/>
<path d="M238.8,125.0 C238.6,126.6 238.3,134.7 237.5,137.5 C236.7,140.3 233.8,144.7 232.5,147.5 C231.2,150.3 228.1,156.2 227.5,160.0 C226.9,163.8 227.5,175.3 227.5,177.5" fill="none" stroke="#e0e0e0" stroke-width="0.5" stroke-linejoin="round" stroke-linecap="round" />
<path d="M238.8,125.0 C238.6,126.6 238.3,134.7 237.5,137.5 C236.7,140.3 233.8,144.7 232.5,147.5 C231.2,150.3 228.1,156.2 227.5,160.0 C226.9,163.8 227.5,175.3 227.5,177.5" fill="none" stroke="#555" stroke-width="0.5" stroke-linejoin="round" stroke-linecap="butt" stroke-dasharray="2.6 18" stroke-dashoffset="5" opacity="0.7"/>
<path d="M238.8,140.0 C239.3,141.9 241.1,152.2 242.5,155.0 C243.9,157.8 247.8,161.4 250.0,162.5 C252.2,163.6 256.2,163.6 260.0,163.8 C263.8,164.0 275.0,163.8 280.0,163.8 C285.0,163.8 297.5,163.8 300.0,163.8" fill="none" stroke="#e0e0e0" stroke-width="0.5" stroke-linejoin="round" stroke-linecap="round" />
<path d="M238.8,140.0 C239.3,141.9 241.1,152.2 242.5,155.0 C243.9,157.8 247.8,161.4 250.0,162.5 C252.2,163.6 256.2,163.6 260.0,163.8 C263.8,164.0 275.0,163.8 280.0,163.8 C285.0,163.8 297.5,163.8 300.0,163.8" fill="none" stroke="#555" stroke-width="0.5" stroke-linejoin="round" stroke-linecap="butt" stroke-dasharray="2.6 25" stroke-dashoffset="10" opacity="0.7"/>
<path d="M260.0,137.5 C260.0,139.7 260.0,149.7 260.0,155.0 C260.0,160.3 260.0,173.8 260.0,180.0 C260.0,186.2 260.0,201.9 260.0,205.0" fill="none" stroke="#e0e0e0" stroke-width="0.5" stroke-linejoin="round" stroke-linecap="round" />
<path d="M260.0,137.5 C260.0,139.7 260.0,149.7 260.0,155.0 C260.0,160.3 260.0,173.8 260.0,180.0 C260.0,186.2 260.0,201.9 260.0,205.0" fill="none" stroke="#555" stroke-width="0.5" stroke-linejoin="round" stroke-linecap="butt" stroke-dasharray="2.6 32" stroke-dashoffset="15" opacity="0.7"/>
<path d="M260.0,142.5 C261.6,142.5 269.1,142.5 272.5,142.5 C275.9,142.5 284.1,142.8 287.5,142.5 C290.9,142.2 298.4,140.3 300.0,140.0" fill="none" stroke="#e0e0e0" stroke-width="0.5" stroke-linejoin="round" stroke-linecap="round" />
<path d="M260.0,142.5 C261.6,142.5 269.1,142.5 272.5,142.5 C275.9,142.5 284.1,142.8 287.5,142.5 C290.9,142.2 298.4,140.3 300.0,140.0" fill="none" stroke="#555" stroke-width="0.5" stroke-linejoin="round" stroke-linecap="butt" stroke-dasharray="2.6 20" stroke-dashoffset="3" opacity="0.7"/>
<path d="M272.5,142.5 L273.8,163.8" fill="none" stroke="#e0e0e0" stroke-width="0.5" stroke-linejoin="round" stroke-linecap="round" />
<path d="M272.5,142.5 L273.8,163.8" fill="none" stroke="#555" stroke-width="0.5" stroke-linejoin="round" stroke-linecap="round" stroke-dasharray="2.6 27" stroke-dashoffset="8" opacity="0.7"/>
<path d="M260.0,180.0 C261.6,179.7 270.0,177.5 272.5,177.5 C275.0,177.5 278.9,177.5 280.0,180.0 C281.1,182.5 278.7,195.3 281.2,197.5 C283.7,199.7 297.6,197.5 300.0,197.5" fill="none" stroke="#e0e0e0" stroke-width="0.5" stroke-linejoin="round" stroke-linecap="round" />
<path d="M260.0,180.0 C261.6,179.7 270.0,177.5 272.5,177.5 C275.0,177.5 278.9,177.5 280.0,180.0 C281.1,182.5 278.7,195.3 281.2,197.5 C283.7,199.7 297.6,197.5 300.0,197.5" fill="none" stroke="#555" stroke-width="0.5" stroke-linejoin="round" stroke-linecap="butt" stroke-dasharray="2.6 15" stroke-dashoffset="13" opacity="0.7"/>
<path d="M217.5,177.5 C217.7,179.4 218.5,190.0 218.8,192.5 C219.1,195.0 219.2,195.3 220.0,197.5 C220.8,199.7 223.1,208.1 225.0,210.0 C226.9,211.9 233.8,212.2 235.0,212.5" fill="none" stroke="#e0e0e0" stroke-width="0.5" stroke-linejoin="round" stroke-linecap="round" />
<path d="M217.5,177.5 C217.7,179.4 218.5,190.0 218.8,192.5 C219.1,195.0 219.2,195.3 220.0,197.5 C220.8,199.7 223.1,208.1 225.0,210.0 C226.9,211.9 233.8,212.2 235.0,212.5" fill="none" stroke="#555" stroke-width="0.5" stroke-linejoin="round" stroke-linecap="butt" stroke-dasharray="2.6 22" stroke-dashoffset="1" opacity="0.7"/>
<path d="M191.2,176.2 C190.1,177.6 183.8,183.9 182.5,187.5 C181.2,191.1 181.5,200.9 181.2,205.0 C180.9,209.1 180.2,218.1 180.0,220.0" fill="none" stroke="#e0e0e0" stroke-width="0.5" stroke-linejoin="round" stroke-linecap="round" />
<path d="M191.2,176.2 C190.1,177.6 183.8,183.9 182.5,187.5 C181.2,191.1 181.5,200.9 181.2,205.0 C180.9,209.1 180.2,218.1 180.0,220.0" fill="none" stroke="#555" stroke-width="0.5" stroke-linejoin="round" stroke-linecap="butt" stroke-dasharray="2.6 29" stroke-dashoffset="6" opacity="0.7"/>
<path d="M237.5,202.5 C238.4,202.0 243.1,199.0 245.0,198.8 C246.9,198.6 251.9,200.4 252.5,201.2 C253.1,202.0 250.3,204.5 250.0,205.0" fill="none" stroke="#e0e0e0" stroke-width="0.5" stroke-linejoin="round" stroke-linecap="round" />
<path d="M237.5,202.5 C238.4,202.0 243.1,199.0 245.0,198.8 C246.9,198.6 251.9,200.4 252.5,201.2 C253.1,202.0 250.3,204.5 250.0,205.0" fill="none" stroke="#555" stroke-width="0.5" stroke-linejoin="round" stroke-linecap="butt" stroke-dasharray="2.6 17" stroke-dashoffset="11" opacity="0.7"/>
<path d="M235.0,203.8 C235.6,202.7 238.1,196.4 240.0,195.0 C241.9,193.6 247.5,192.8 250.0,192.5 C252.5,192.2 258.8,192.5 260.0,192.5" fill="none" stroke="#e0e0e0" stroke-width="0.5" stroke-linejoin="round" stroke-linecap="round" />
<path d="M235.0,203.8 C235.6,202.7 238.1,196.4 240.0,195.0 C241.9,193.6 247.5,192.8 250.0,192.5 C252.5,192.2 258.8,192.5 260.0,192.5" fill="none" stroke="#555" stroke-width="0.5" stroke-linejoin="round" stroke-linecap="butt" stroke-dasharray="2.6 24" stroke-dashoffset="16" opacity="0.7"/>
<path d="M252.5,207.5 L255.0,220.0" fill="none" stroke="#e0e0e0" stroke-width="0.5" stroke-linejoin="round" stroke-linecap="round" />
<path d="M252.5,207.5 L255.0,220.0" fill="none" stroke="#555" stroke-width="0.5" stroke-linejoin="round" stroke-linecap="round" stroke-dasharray="2.6 31" stroke-dashoffset="4" opacity="0.7"/>
<path d="M280.0,163.8 L282.5,180.0" fill="none" stroke="#e0e0e0" stroke-width="0.5" stroke-linejoin="round" stroke-linecap="round" />
<path d="M280.0,163.8 L282.5,180.0" fill="none" stroke="#555" stroke-width="0.5" stroke-linejoin="round" stroke-linecap="round" stroke-dasharray="2.6 19" stroke-dashoffset="9" opacity="0.7"/>
<path d="M287.5,120.0 C287.5,121.9 287.2,132.2 287.5,135.0 C287.8,137.8 289.7,141.6 290.0,142.5" fill="none" stroke="#e0e0e0" stroke-width="0.5" stroke-linejoin="round" stroke-linecap="round" />
<path d="M287.5,120.0 C287.5,121.9 287.2,132.2 287.5,135.0 C287.8,137.8 289.7,141.6 290.0,142.5" fill="none" stroke="#555" stroke-width="0.5" stroke-linejoin="round" stroke-linecap="butt" stroke-dasharray="2.6 26" stroke-dashoffset="14" opacity="0.7"/>
<path d="M270.0,122.5 C270.6,123.4 273.1,128.4 275.0,130.0 C276.9,131.6 283.8,134.4 285.0,135.0" fill="none" stroke="#e0e0e0" stroke-width="0.5" stroke-linejoin="round" stroke-linecap="round" />
<path d="M270.0,122.5 C270.6,123.4 273.1,128.4 275.0,130.0 C276.9,131.6 283.8,134.4 285.0,135.0" fill="none" stroke="#555" stroke-width="0.5" stroke-linejoin="round" stroke-linecap="butt" stroke-dasharray="2.6 33" stroke-dashoffset="2" opacity="0.7"/>
<path d="M281.2,197.5 L282.5,220.0" fill="none" stroke="#e0e0e0" stroke-width="0.5" stroke-linejoin="round" stroke-linecap="round" />
<path d="M281.2,197.5 L282.5,220.0" fill="none" stroke="#555" stroke-width="0.5" stroke-linejoin="round" stroke-linecap="round" stroke-dasharray="2.6 21" stroke-dashoffset="7" opacity="0.7"/>
<path d="M167.5,220.0 C169.1,219.8 177.2,218.8 180.0,218.8 C182.8,218.8 188.8,219.8 190.0,220.0" fill="none" stroke="#e0e0e0" stroke-width="0.5" stroke-linejoin="round" stroke-linecap="round" />
<path d="M167.5,220.0 C169.1,219.8 177.2,218.8 180.0,218.8 C182.8,218.8 188.8,219.8 190.0,220.0" fill="none" stroke="#555" stroke-width="0.5" stroke-linejoin="round" stroke-linecap="butt" stroke-dasharray="2.6 28" stroke-dashoffset="12" opacity="0.7"/>
<path d="M300.0,125.0 L310.0,127.5" fill="none" stroke="#e0e0e0" stroke-width="0.5" stroke-linejoin="round" stroke-linecap="round" />
<path d="M300.0,125.0 L310.0,127.5" fill="none" stroke="#555" stroke-width="0.5" stroke-linejoin="round" stroke-linecap="round" stroke-dasharray="2.6 16" stroke-dashoffset="0" opacity="0.7"/>
<path d="M302.5,150.0 C303.1,151.2 307.2,157.5 307.5,160.0 C307.8,162.5 305.3,168.8 305.0,170.0" fill="none" stroke="#e0e0e0" stroke-width="0.5" stroke-linejoin="round" stroke-linecap="round" />
<path d="M302.5,150.0 C303.1,151.2 307.2,157.5 307.5,160.0 C307.8,162.5 305.3,168.8 305.0,170.0" fill="none" stroke="#555" stroke-width="0.5" stroke-linejoin="round" stroke-linecap="butt" stroke-dasharray="2.6 23" stroke-dashoffset="5" opacity="0.7"/>
<path d="M300.0,192.5 C300.9,192.7 306.2,194.7 307.5,193.8 C308.8,192.9 309.7,186.1 310.0,185.0" fill="none" stroke="#e0e0e0" stroke-width="0.5" stroke-linejoin="round" stroke-linecap="round" />
<path d="M300.0,192.5 C300.9,192.7 306.2,194.7 307.5,193.8 C308.8,192.9 309.7,186.1 310.0,185.0" fill="none" stroke="#555" stroke-width="0.5" stroke-linejoin="round" stroke-linecap="butt" stroke-dasharray="2.6 30" stroke-dashoffset="10" opacity="0.7"/>
<path d="M305.0,205.0 L312.5,207.5" fill="none" stroke="#e0e0e0" stroke-width="0.5" stroke-linejoin="round" stroke-linecap="round" />
<path d="M305.0,205.0 L312.5,207.5" fill="none" stroke="#555" stroke-width="0.5" stroke-linejoin="round" stroke-linecap="round" stroke-dasharray="2.6 18" stroke-dashoffset="15" opacity="0.7"/>
<path d="M300.0,160.0 L306.2,162.5" fill="none" stroke="#e0e0e0" stroke-width="0.5" stroke-linejoin="round" stroke-linecap="round" />
<path d="M300.0,160.0 L306.2,162.5" fill="none" stroke="#555" stroke-width="0.5" stroke-linejoin="round" stroke-linecap="round" stroke-dasharray="2.6 25" stroke-dashoffset="3" opacity="0.7"/>
<path d="M300.0,120.0 C300.9,120.6 305.6,123.1 307.5,125.0 C309.4,126.9 312.8,132.5 315.0,135.0 C317.2,137.5 322.8,142.8 325.0,145.0 C327.2,147.2 331.6,151.6 332.5,152.5" fill="none" stroke="#e0e0e0" stroke-width="0.5" stroke-linejoin="round" stroke-linecap="round" />
<path d="M300.0,120.0 C300.9,120.6 305.6,123.1 307.5,125.0 C309.4,126.9 312.8,132.5 315.0,135.0 C317.2,137.5 322.8,142.8 325.0,145.0 C327.2,147.2 331.6,151.6 332.5,152.5" fill="none" stroke="#555" stroke-width="0.5" stroke-linejoin="round" stroke-linecap="butt" stroke-dasharray="2.6 32" stroke-dashoffset="8" opacity="0.7"/>
<path d="M300.0,142.5 C301.2,142.3 308.1,142.1 310.0,141.2 C311.9,140.3 314.4,135.8 315.0,135.0" fill="none" stroke="#e0e0e0" stroke-width="0.5" stroke-linejoin="round" stroke-linecap="round" />
<path d="M300.0,142.5 C301.2,142.3 308.1,142.1 310.0,141.2 C311.9,140.3 314.4,135.8 315.0,135.0" fill="none" stroke="#555" stroke-width="0.5" stroke-linejoin="round" stroke-linecap="butt" stroke-dasharray="2.6 20" stroke-dashoffset="13" opacity="0.7"/>
<path d="M315.0,117.5 L315.0,135.0" fill="none" stroke="#e0e0e0" stroke-width="0.5" stroke-linejoin="round" stroke-linecap="round" />
<path d="M315.0,117.5 L315.0,135.0" fill="none" stroke="#555" stroke-width="0.5" stroke-linejoin="round" stroke-linecap="round" stroke-dasharray="2.6 27" stroke-dashoffset="1" opacity="0.7"/>
<path d="M382.5,117.5 C383.4,118.1 388.4,120.0 390.0,122.5 C391.6,125.0 394.7,135.3 395.0,137.5 C395.3,139.7 393.8,139.5 392.5,140.0 C391.2,140.5 385.9,141.0 385.0,141.2" fill="none" stroke="#e0e0e0" stroke-width="0.5" stroke-linejoin="round" stroke-linecap="round" />
<path d="M382.5,117.5 C383.4,118.1 388.4,120.0 390.0,122.5 C391.6,125.0 394.7,135.3 395.0,137.5 C395.3,139.7 393.8,139.5 392.5,140.0 C391.2,140.5 385.9,141.0 385.0,141.2" fill="none" stroke="#555" stroke-width="0.5" stroke-linejoin="round" stroke-linecap="butt" stroke-dasharray="2.6 15" stroke-dashoffset="6" opacity="0.7"/>
<path d="M395.0,137.5 C396.6,137.2 405.0,136.6 407.5,135.0 C410.0,133.4 412.8,126.6 415.0,125.0 C417.2,123.4 423.1,123.1 425.0,122.5 C426.9,121.9 429.4,120.3 430.0,120.0" fill="none" stroke="#e0e0e0" stroke-width="0.5" stroke-linejoin="round" stroke-linecap="round" />
<path d="M395.0,137.5 C396.6,137.2 405.0,136.6 407.5,135.0 C410.0,133.4 412.8,126.6 415.0,125.0 C417.2,123.4 423.1,123.1 425.0,122.5 C426.9,121.9 429.4,120.3 430.0,120.0" fill="none" stroke="#555" stroke-width="0.5" stroke-linejoin="round" stroke-linecap="butt" stroke-dasharray="2.6 22" stroke-dashoffset="11" opacity="0.7"/>
<path d="M407.5,135.0 C407.8,136.6 408.4,145.6 410.0,147.5 C411.6,149.4 417.5,150.0 420.0,150.0 C422.5,150.0 427.5,147.2 430.0,147.5 C432.5,147.8 437.5,150.9 440.0,152.5 C442.5,154.1 448.8,159.1 450.0,160.0" fill="none" stroke="#e0e0e0" stroke-width="0.5" stroke-linejoin="round" stroke-linecap="round" />
<path d="M407.5,135.0 C407.8,136.6 408.4,145.6 410.0,147.5 C411.6,149.4 417.5,150.0 420.0,150.0 C422.5,150.0 427.5,147.2 430.0,147.5 C432.5,147.8 437.5,150.9 440.0,152.5 C442.5,154.1 448.8,159.1 450.0,160.0" fill="none" stroke="#555" stroke-width="0.5" stroke-linejoin="round" stroke-linecap="butt" stroke-dasharray="2.6 29" stroke-dashoffset="16" opacity="0.7"/>
<path d="M382.5,157.5 C384.1,157.2 391.6,155.6 395.0,155.0 C398.4,154.4 406.9,153.1 410.0,152.5 C413.1,151.9 418.8,150.3 420.0,150.0" fill="none" stroke="#e0e0e0" stroke-width="0.5" stroke-linejoin="round" stroke-linecap="round" />
<path d="M382.5,157.5 C384.1,157.2 391.6,155.6 395.0,155.0 C398.4,154.4 406.9,153.1 410.0,152.5 C413.1,151.9 418.8,150.3 420.0,150.0" fill="none" stroke="#555" stroke-width="0.5" stroke-linejoin="round" stroke-linecap="butt" stroke-dasharray="2.6 17" stroke-dashoffset="4" opacity="0.7"/>
<path d="M392.5,163.8 C392.8,164.9 394.8,169.8 395.0,172.5 C395.2,175.2 395.4,183.1 393.8,185.0 C392.2,186.9 383.9,187.2 382.5,187.5" fill="none" stroke="#e0e0e0" stroke-width="0.5" stroke-linejoin="round" stroke-linecap="round" />
<path d="M392.5,163.8 C392.8,164.9 394.8,169.8 395.0,172.5 C395.2,175.2 395.4,183.1 393.8,185.0 C392.2,186.9 383.9,187.2 382.5,187.5" fill="none" stroke="#555" stroke-width="0.5" stroke-linejoin="round" stroke-linecap="butt" stroke-dasharray="2.6 24" stroke-dashoffset="9" opacity="0.7"/>
<path d="M395.0,172.5 C396.6,172.2 404.4,170.9 407.5,170.0 C410.6,169.1 417.2,165.3 420.0,165.0 C422.8,164.7 427.5,167.8 430.0,167.5 C432.5,167.2 437.5,162.8 440.0,162.5 C442.5,162.2 448.8,164.7 450.0,165.0" fill="none" stroke="#e0e0e0" stroke-width="0.5" stroke-linejoin="round" stroke-linecap="round" />
<path d="M395.0,172.5 C396.6,172.2 404.4,170.9 407.5,170.0 C410.6,169.1 417.2,165.3 420.0,165.0 C422.8,164.7 427.5,167.8 430.0,167.5 C432.5,167.2 437.5,162.8 440.0,162.5 C442.5,162.2 448.8,164.7 450.0,165.0" fill="none" stroke="#555" stroke-width="0.5" stroke-linejoin="round" stroke-linecap="butt" stroke-dasharray="2.6 31" stroke-dashoffset="14" opacity="0.7"/>
<path d="M407.5,170.0 C407.7,171.9 408.5,182.2 408.8,185.0 C409.1,187.8 411.1,190.9 410.0,192.5 C408.9,194.1 402.5,197.0 400.0,197.5 C397.5,198.0 391.2,196.4 390.0,196.2" fill="none" stroke="#e0e0e0" stroke-width="0.5" stroke-linejoin="round" stroke-linecap="round" />
<path d="M407.5,170.0 C407.7,171.9 408.5,182.2 408.8,185.0 C409.1,187.8 411.1,190.9 410.0,192.5 C408.9,194.1 402.5,197.0 400.0,197.5 C397.5,198.0 391.2,196.4 390.0,196.2" fill="none" stroke="#555" stroke-width="0.5" stroke-linejoin="round" stroke-linecap="butt" stroke-dasharray="2.6 19" stroke-dashoffset="2" opacity="0.7"/>
<path d="M410.0,192.5 C411.9,192.5 422.5,193.4 425.0,192.5 C427.5,191.6 428.1,186.2 430.0,185.0 C431.9,183.8 437.5,182.5 440.0,182.5 C442.5,182.5 448.8,184.7 450.0,185.0" fill="none" stroke="#e0e0e0" stroke-width="0.5" stroke-linejoin="round" stroke-linecap="round" />
<path d="M410.0,192.5 C411.9,192.5 422.5,193.4 425.0,192.5 C427.5,191.6 428.1,186.2 430.0,185.0 C431.9,183.8 437.5,182.5 440.0,182.5 C442.5,182.5 448.8,184.7 450.0,185.0" fill="none" stroke="#555" stroke-width="0.5" stroke-linejoin="round" stroke-linecap="butt" stroke-dasharray="2.6 26" stroke-dashoffset="7" opacity="0.7"/>
<path d="M422.5,202.5 L425.0,192.5" fill="none" stroke="#e0e0e0" stroke-width="0.5" stroke-linejoin="round" stroke-linecap="round" />
<path d="M422.5,202.5 L425.0,192.5" fill="none" stroke="#555" stroke-width="0.5" stroke-linejoin="round" stroke-linecap="round" stroke-dasharray="2.6 33" stroke-dashoffset="12" opacity="0.7"/>
<path d="M300.0,182.5 C300.6,182.8 303.8,185.2 305.0,185.0 C306.2,184.8 309.4,181.7 310.0,181.2" fill="none" stroke="#e0e0e0" stroke-width="0.5" stroke-linejoin="round" stroke-linecap="round" />
<path d="M300.0,182.5 C300.6,182.8 303.8,185.2 305.0,185.0 C306.2,184.8 309.4,181.7 310.0,181.2" fill="none" stroke="#555" stroke-width="0.5" stroke-linejoin="round" stroke-linecap="butt" stroke-dasharray="2.6 21" stroke-dashoffset="0" opacity="0.7"/>
<path d="M300.0,172.5 L307.5,172.5" fill="none" stroke="#e0e0e0" stroke-width="0.5" stroke-linejoin="round" stroke-linecap="round" />
<path d="M300.0,172.5 L307.5,172.5" fill="none" stroke="#555" stroke-width="0.5" stroke-linejoin="round" stroke-linecap="round" stroke-dasharray="2.6 28" stroke-dashoffset="5" opacity="0.7"/>
<path d="M430.0,167.5 L430.0,185.0" fill="none" stroke="#e0e0e0" stroke-width="0.5" stroke-linejoin="round" stroke-linecap="round" />
<path d="M430.0,167.5 L430.0,185.0" fill="none" stroke="#555" stroke-width="0.5" stroke-linejoin="round" stroke-linecap="round" stroke-dasharray="2.6 16" stroke-dashoffset="10" opacity="0.7"/>
<path d="M440.0,152.5 C440.3,151.2 441.2,144.4 442.5,142.5 C443.8,140.6 449.1,138.1 450.0,137.5" fill="none" stroke="#e0e0e0" stroke-width="0.5" stroke-linejoin="round" stroke-linecap="round" />
<path d="M440.0,152.5 C440.3,151.2 441.2,144.4 442.5,142.5 C443.8,140.6 449.1,138.1 450.0,137.5" fill="none" stroke="#555" stroke-width="0.5" stroke-linejoin="round" stroke-linecap="butt" stroke-dasharray="2.6 23" stroke-dashoffset="15" opacity="0.7"/>
<path d="M400.0,207.5 L405.0,220.0" fill="none" stroke="#e0e0e0" stroke-width="0.5" stroke-linejoin="round" stroke-linecap="round" />
<path d="M400.0,207.5 L405.0,220.0" fill="none" stroke="#555" stroke-width="0.5" stroke-linejoin="round" stroke-linecap="round" stroke-dasharray="2.6 30" stroke-dashoffset="3" opacity="0.7"/>
<path d="M380.0,190.0 C381.2,190.8 387.5,194.6 390.0,196.2 C392.5,197.8 397.2,201.4 400.0,202.5 C402.8,203.6 410.9,204.7 412.5,205.0" fill="none" stroke="#e0e0e0" stroke-width="0.5" stroke-linejoin="round" stroke-linecap="round" />
<path d="M380.0,190.0 C381.2,190.8 387.5,194.6 390.0,196.2 C392.5,197.8 397.2,201.4 400.0,202.5 C402.8,203.6 410.9,204.7 412.5,205.0" fill="none" stroke="#555" stroke-width="0.5" stroke-linejoin="round" stroke-linecap="butt" stroke-dasharray="2.6 18" stroke-dashoffset="8" opacity="0.7"/>
<path d="M450.0,152.5 C450.9,153.1 455.9,156.2 457.5,157.5 C459.1,158.8 460.3,162.7 462.5,162.5 C464.7,162.3 472.5,157.1 475.0,156.2 C477.5,155.3 480.0,156.1 482.5,155.0 C485.0,153.9 491.6,148.4 495.0,147.5 C498.4,146.6 507.2,148.0 510.0,147.5 C512.8,147.0 516.6,144.3 517.5,143.8" fill="none" stroke="#e0e0e0" stroke-width="0.5" stroke-linejoin="round" stroke-linecap="round" />
<path d="M450.0,152.5 C450.9,153.1 455.9,156.2 457.5,157.5 C459.1,158.8 460.3,162.7 462.5,162.5 C464.7,162.3 472.5,157.1 475.0,156.2 C477.5,155.3 480.0,156.1 482.5,155.0 C485.0,153.9 491.6,148.4 495.0,147.5 C498.4,146.6 507.2,148.0 510.0,147.5 C512.8,147.0 516.6,144.3 517.5,143.8" fill="none" stroke="#555" stroke-width="0.5" stroke-linejoin="round" stroke-linecap="butt" stroke-dasharray="2.6 25" stroke-dashoffset="13" opacity="0.7"/>
<path d="M462.5,162.5 C462.8,163.1 463.4,166.4 465.0,167.5 C466.6,168.6 472.5,170.4 475.0,171.2 C477.5,172.0 481.9,174.0 485.0,173.8 C488.1,173.7 495.9,170.5 500.0,170.0 C504.1,169.5 514.4,169.7 517.5,170.0 C520.6,170.3 523.3,172.8 525.0,172.5 C526.7,172.2 530.4,168.1 531.2,167.5" fill="none" stroke="#e0e0e0" stroke-width="0.5" stroke-linejoin="round" stroke-linecap="round" />
<path d="M462.5,162.5 C462.8,163.1 463.4,166.4 465.0,167.5 C466.6,168.6 472.5,170.4 475.0,171.2 C477.5,172.0 481.9,174.0 485.0,173.8 C488.1,173.7 495.9,170.5 500.0,170.0 C504.1,169.5 514.4,169.7 517.5,170.0 C520.6,170.3 523.3,172.8 525.0,172.5 C526.7,172.2 530.4,168.1 531.2,167.5" fill="none" stroke="#555" stroke-width="0.5" stroke-linejoin="round" stroke-linecap="butt" stroke-dasharray="2.6 32" stroke-dashoffset="1" opacity="0.7"/>
<path d="M495.0,110.0 C494.9,111.6 494.4,119.4 493.8,122.5 C493.2,125.6 490.3,132.7 490.0,135.0 C489.7,137.3 490.3,139.6 491.2,141.2 C492.1,142.8 496.7,146.7 497.5,147.5" fill="none" stroke="#e0e0e0" stroke-width="0.5" stroke-linejoin="round" stroke-linecap="round" />
<path d="M495.0,110.0 C494.9,111.6 494.4,119.4 493.8,122.5 C493.2,125.6 490.3,132.7 490.0,135.0 C489.7,137.3 490.3,139.6 491.2,141.2 C492.1,142.8 496.7,146.7 497.5,147.5" fill="none" stroke="#555" stroke-width="0.5" stroke-linejoin="round" stroke-linecap="butt" stroke-dasharray="2.6 20" stroke-dashoffset="6" opacity="0.7"/>
<path d="M510.0,147.5 C510.3,148.1 511.7,151.1 512.5,152.5 C513.3,153.9 515.7,158.0 516.2,158.8" fill="none" stroke="#e0e0e0" stroke-width="0.5" stroke-linejoin="round" stroke-linecap="round" />
<path d="M510.0,147.5 C510.3,148.1 511.7,151.1 512.5,152.5 C513.3,153.9 515.7,158.0 516.2,158.8" fill="none" stroke="#555" stroke-width="0.5" stroke-linejoin="round" stroke-linecap="butt" stroke-dasharray="2.6 27" stroke-dashoffset="11" opacity="0.7"/>
<path d="M503.8,110.0 C503.6,111.6 501.7,119.5 502.5,122.5 C503.3,125.5 509.1,132.4 510.0,133.8" fill="none" stroke="#e0e0e0" stroke-width="0.5" stroke-linejoin="round" stroke-linecap="round" />
<path d="M503.8,110.0 C503.6,111.6 501.7,119.5 502.5,122.5 C503.3,125.5 509.1,132.4 510.0,133.8" fill="none" stroke="#555" stroke-width="0.5" stroke-linejoin="round" stroke-linecap="butt" stroke-dasharray="2.6 15" stroke-dashoffset="16" opacity="0.7"/>
<path d="M517.5,143.8 C518.4,144.4 523.1,148.3 525.0,148.8 C526.9,149.3 531.6,147.7 532.5,147.5" fill="none" stroke="#e0e0e0" stroke-width="0.5" stroke-linejoin="round" stroke-linecap="round" />
<path d="M517.5,143.8 C518.4,144.4 523.1,148.3 525.0,148.8 C526.9,149.3 531.6,147.7 532.5,147.5" fill="none" stroke="#555" stroke-width="0.5" stroke-linejoin="round" stroke-linecap="butt" stroke-dasharray="2.6 22" stroke-dashoffset="4" opacity="0.7"/>
<path d="M531.2,148.8 C531.4,150.2 532.5,156.7 532.5,160.0 C532.5,163.3 531.4,173.1 531.2,175.0" fill="none" stroke="#e0e0e0" stroke-width="0.5" stroke-linejoin="round" stroke-linecap="round" />
<path d="M531.2,148.8 C531.4,150.2 532.5,156.7 532.5,160.0 C532.5,163.3 531.4,173.1 531.2,175.0" fill="none" stroke="#555" stroke-width="0.5" stroke-linejoin="round" stroke-linecap="butt" stroke-dasharray="2.6 29" stroke-dashoffset="9" opacity="0.7"/>
<path d="M450.0,177.5 C451.2,178.1 458.1,180.6 460.0,182.5 C461.9,184.4 463.1,190.8 465.0,192.5 C466.9,194.2 472.8,194.9 475.0,196.2 C477.2,197.4 480.3,201.2 482.5,202.5 C484.7,203.8 491.2,205.7 492.5,206.2" fill="none" stroke="#e0e0e0" stroke-width="0.5" stroke-linejoin="round" stroke-linecap="round" />
<path d="M450.0,177.5 C451.2,178.1 458.1,180.6 460.0,182.5 C461.9,184.4 463.1,190.8 465.0,192.5 C466.9,194.2 472.8,194.9 475.0,196.2 C477.2,197.4 480.3,201.2 482.5,202.5 C484.7,203.8 491.2,205.7 492.5,206.2" fill="none" stroke="#555" stroke-width="0.5" stroke-linejoin="round" stroke-linecap="butt" stroke-dasharray="2.6 17" stroke-dashoffset="14" opacity="0.7"/>
<path d="M500.0,170.0 C500.3,171.9 501.2,182.2 502.5,185.0 C503.8,187.8 508.9,190.3 510.0,192.5 C511.1,194.7 511.1,201.2 511.2,202.5" fill="none" stroke="#e0e0e0" stroke-width="0.5" stroke-linejoin="round" stroke-linecap="round" />
<path d="M500.0,170.0 C500.3,171.9 501.2,182.2 502.5,185.0 C503.8,187.8 508.9,190.3 510.0,192.5 C511.1,194.7 511.1,201.2 511.2,202.5" fill="none" stroke="#555" stroke-width="0.5" stroke-linejoin="round" stroke-linecap="butt" stroke-dasharray="2.6 24" stroke-dashoffset="2" opacity="0.7"/>
<path d="M465.0,192.5 C464.7,193.8 462.5,200.3 462.5,202.5 C462.5,204.7 463.4,209.2 465.0,210.0 C466.6,210.8 473.8,209.0 475.0,208.8" fill="none" stroke="#e0e0e0" stroke-width="0.5" stroke-linejoin="round" stroke-linecap="round" />
<path d="M465.0,192.5 C464.7,193.8 462.5,200.3 462.5,202.5 C462.5,204.7 463.4,209.2 465.0,210.0 C466.6,210.8 473.8,209.0 475.0,208.8" fill="none" stroke="#555" stroke-width="0.5" stroke-linejoin="round" stroke-linecap="butt" stroke-dasharray="2.6 31" stroke-dashoffset="7" opacity="0.7"/>
<path d="M510.0,192.5 C511.6,192.2 520.6,189.4 522.5,190.0 C524.4,190.6 524.7,196.6 525.0,197.5" fill="none" stroke="#e0e0e0" stroke-width="0.5" stroke-linejoin="round" stroke-linecap="round" />
<path d="M510.0,192.5 C511.6,192.2 520.6,189.4 522.5,190.0 C524.4,190.6 524.7,196.6 525.0,197.5" fill="none" stroke="#555" stroke-width="0.5" stroke-linejoin="round" stroke-linecap="butt" stroke-dasharray="2.6 19" stroke-dashoffset="12" opacity="0.7"/>
<path d="M517.5,110.0 C518.4,110.6 523.1,114.7 525.0,115.0 C526.9,115.3 531.6,112.8 532.5,112.5" fill="none" stroke="#e0e0e0" stroke-width="0.5" stroke-linejoin="round" stroke-linecap="round" />
<path d="M517.5,110.0 C518.4,110.6 523.1,114.7 525.0,115.0 C526.9,115.3 531.6,112.8 532.5,112.5" fill="none" stroke="#555" stroke-width="0.5" stroke-linejoin="round" stroke-linecap="butt" stroke-dasharray="2.6 26" stroke-dashoffset="0" opacity="0.7"/>
<path d="M162.5,245.0 C163.4,247.2 169.7,258.8 170.0,262.5 C170.3,266.2 164.4,272.5 165.0,275.0 C165.6,277.5 173.1,280.6 175.0,282.5 C176.9,284.4 178.4,288.8 180.0,290.0 C181.6,291.2 186.2,291.2 187.5,292.5 C188.8,293.8 190.6,298.1 190.0,300.0 C189.4,301.9 183.4,306.6 182.5,307.5" fill="none" stroke="#e0e0e0" stroke-width="0.5" stroke-linejoin="round" stroke-linecap="round" />
<path d="M162.5,245.0 C163.4,247.2 169.7,258.8 170.0,262.5 C170.3,266.2 164.4,272.5 165.0,275.0 C165.6,277.5 173.1,280.6 175.0,282.5 C176.9,284.4 178.4,288.8 180.0,290.0 C181.6,291.2 186.2,291.2 187.5,292.5 C188.8,293.8 190.6,298.1 190.0,300.0 C189.4,301.9 183.4,306.6 182.5,307.5" fill="none" stroke="#555" stroke-width="0.5" stroke-linejoin="round" stroke-linecap="butt" stroke-dasharray="2.6 33" stroke-dashoffset="5" opacity="0.7"/>
<path d="M195.0,252.5 C195.1,254.7 195.5,265.0 195.5,270.0 C195.5,275.0 194.9,289.1 195.0,292.5 C195.1,295.9 196.0,296.9 196.2,297.5" fill="none" stroke="#e0e0e0" stroke-width="0.5" stroke-linejoin="round" stroke-linecap="round" />
<path d="M195.0,252.5 C195.1,254.7 195.5,265.0 195.5,270.0 C195.5,275.0 194.9,289.1 195.0,292.5 C195.1,295.9 196.0,296.9 196.2,297.5" fill="none" stroke="#555" stroke-width="0.5" stroke-linejoin="round" stroke-linecap="butt" stroke-dasharray="2.6 21" stroke-dashoffset="10" opacity="0.7"/>
<path d="M195.5,265.0 C197.3,265.1 208.0,264.6 210.0,266.2 C212.0,267.8 212.0,275.9 211.2,277.5 C210.4,279.1 204.7,278.6 203.8,278.8" fill="none" stroke="#e0e0e0" stroke-width="0.5" stroke-linejoin="round" stroke-linecap="round" />
<path d="M195.5,265.0 C197.3,265.1 208.0,264.6 210.0,266.2 C212.0,267.8 212.0,275.9 211.2,277.5 C210.4,279.1 204.7,278.6 203.8,278.8" fill="none" stroke="#555" stroke-width="0.5" stroke-linejoin="round" stroke-linecap="butt" stroke-dasharray="2.6 28" stroke-dashoffset="15" opacity="0.7"/>
<path d="M187.5,292.5 C188.6,292.8 193.4,294.4 196.2,295.0 C199.0,295.6 206.7,296.9 210.0,297.5 C213.3,298.1 218.8,299.7 222.5,300.0 C226.2,300.3 237.8,300.0 240.0,300.0" fill="none" stroke="#e0e0e0" stroke-width="0.5" stroke-linejoin="round" stroke-linecap="round" />
<path d="M187.5,292.5 C188.6,292.8 193.4,294.4 196.2,295.0 C199.0,295.6 206.7,296.9 210.0,297.5 C213.3,298.1 218.8,299.7 222.5,300.0 C226.2,300.3 237.8,300.0 240.0,300.0" fill="none" stroke="#555" stroke-width="0.5" stroke-linejoin="round" stroke-linecap="butt" stroke-dasharray="2.6 16" stroke-dashoffset="3" opacity="0.7"/>
<path d="M210.0,297.5 C210.0,295.9 209.1,287.5 210.0,285.0 C210.9,282.5 215.6,278.8 217.5,277.5 C219.4,276.2 223.1,275.9 225.0,275.0 C226.9,274.1 231.6,270.6 232.5,270.0" fill="none" stroke="#e0e0e0" stroke-width="0.5" stroke-linejoin="round" stroke-linecap="round" />
<path d="M210.0,297.5 C210.0,295.9 209.1,287.5 210.0,285.0 C210.9,282.5 215.6,278.8 217.5,277.5 C219.4,276.2 223.1,275.9 225.0,275.0 C226.9,274.1 231.6,270.6 232.5,270.0" fill="none" stroke="#555" stroke-width="0.5" stroke-linejoin="round" stroke-linecap="butt" stroke-dasharray="2.6 23" stroke-dashoffset="8" opacity="0.7"/>
<path d="M218.8,240.0 C219.0,240.9 218.9,245.9 220.0,247.5 C221.1,249.1 226.4,250.6 227.5,252.5 C228.6,254.4 229.1,259.7 228.8,262.5 C228.5,265.3 225.8,270.3 225.0,275.0 C224.2,279.7 223.0,294.7 222.5,300.0 C222.0,305.3 221.2,313.8 221.2,317.5 C221.2,321.2 222.3,328.4 222.5,330.0" fill="none" stroke="#e0e0e0" stroke-width="0.5" stroke-linejoin="round" stroke-linecap="round" />
<path d="M218.8,240.0 C219.0,240.9 218.9,245.9 220.0,247.5 C221.1,249.1 226.4,250.6 227.5,252.5 C228.6,254.4 229.1,259.7 228.8,262.5 C228.5,265.3 225.8,270.3 225.0,275.0 C224.2,279.7 223.0,294.7 222.5,300.0 C222.0,305.3 221.2,313.8 221.2,317.5 C221.2,321.2 222.3,328.4 222.5,330.0" fill="none" stroke="#555" stroke-width="0.5" stroke-linejoin="round" stroke-linecap="butt" stroke-dasharray="2.6 30" stroke-dashoffset="13" opacity="0.7"/>
<path d="M227.5,252.5 C229.7,252.7 241.6,253.8 245.0,253.8 C248.4,253.8 253.8,252.7 255.0,252.5" fill="none" stroke="#e0e0e0" stroke-width="0.5" stroke-linejoin="round" stroke-linecap="round" />
<path d="M227.5,252.5 C229.7,252.7 241.6,253.8 245.0,253.8 C248.4,253.8 253.8,252.7 255.0,252.5" fill="none" stroke="#555" stroke-width="0.5" stroke-linejoin="round" stroke-linecap="butt" stroke-dasharray="2.6 18" stroke-dashoffset="1" opacity="0.7"/>
<path d="M236.2,220.0 L236.2,238.8" fill="none" stroke="#e0e0e0" stroke-width="0.5" stroke-linejoin="round" stroke-linecap="round" />
<path d="M236.2,220.0 L236.2,238.8" fill="none" stroke="#555" stroke-width="0.5" stroke-linejoin="round" stroke-linecap="round" stroke-dasharray="2.6 25" stroke-dashoffset="6" opacity="0.7"/>
<path d="M255.0,232.5 C255.2,235.0 256.2,247.8 256.2,252.5 C256.2,257.2 256.1,266.6 255.0,270.0 C253.9,273.4 248.6,277.2 247.5,280.0 C246.4,282.8 246.4,290.9 246.2,292.5" fill="none" stroke="#e0e0e0" stroke-width="0.5" stroke-linejoin="round" stroke-linecap="round" />
<path d="M255.0,232.5 C255.2,235.0 256.2,247.8 256.2,252.5 C256.2,257.2 256.1,266.6 255.0,270.0 C253.9,273.4 248.6,277.2 247.5,280.0 C246.4,282.8 246.4,290.9 246.2,292.5" fill="none" stroke="#555" stroke-width="0.5" stroke-linejoin="round" stroke-linecap="butt" stroke-dasharray="2.6 32" stroke-dashoffset="11" opacity="0.7"/>
<path d="M260.0,245.0 C261.9,244.8 271.9,242.9 275.0,243.8 C278.1,244.7 281.9,251.1 285.0,252.5 C288.1,253.9 298.1,254.7 300.0,255.0" fill="none" stroke="#e0e0e0" stroke-width="0.5" stroke-linejoin="round" stroke-linecap="round" />
<path d="M260.0,245.0 C261.9,244.8 271.9,242.9 275.0,243.8 C278.1,244.7 281.9,251.1 285.0,252.5 C288.1,253.9 298.1,254.7 300.0,255.0" fill="none" stroke="#555" stroke-width="0.5" stroke-linejoin="round" stroke-linecap="butt" stroke-dasharray="2.6 20" stroke-dashoffset="16" opacity="0.7"/>
<path d="M285.0,252.5 C283.8,254.7 276.9,266.9 275.0,270.0 C273.1,273.1 271.2,275.3 270.0,277.5 C268.8,279.7 267.5,285.6 265.0,287.5 C262.5,289.4 251.9,291.9 250.0,292.5" fill="none" stroke="#e0e0e0" stroke-width="0.5" stroke-linejoin="round" stroke-linecap="round" />
<path d="M285.0,252.5 C283.8,254.7 276.9,266.9 275.0,270.0 C273.1,273.1 271.2,275.3 270.0,277.5 C268.8,279.7 267.5,285.6 265.0,287.5 C262.5,289.4 251.9,291.9 250.0,292.5" fill="none" stroke="#555" stroke-width="0.5" stroke-linejoin="round" stroke-linecap="butt" stroke-dasharray="2.6 27" stroke-dashoffset="4" opacity="0.7"/>
<path d="M270.0,277.5 C271.2,278.8 277.5,285.6 280.0,287.5 C282.5,289.4 287.5,291.9 290.0,292.5 C292.5,293.1 298.8,292.5 300.0,292.5" fill="none" stroke="#e0e0e0" stroke-width="0.5" stroke-linejoin="round" stroke-linecap="round" />
<path d="M270.0,277.5 C271.2,278.8 277.5,285.6 280.0,287.5 C282.5,289.4 287.5,291.9 290.0,292.5 C292.5,293.1 298.8,292.5 300.0,292.5" fill="none" stroke="#555" stroke-width="0.5" stroke-linejoin="round" stroke-linecap="butt" stroke-dasharray="2.6 15" stroke-dashoffset="9" opacity="0.7"/>
<path d="M300.0,265.0 C298.8,265.6 293.1,269.4 290.0,270.0 C286.9,270.6 276.9,270.0 275.0,270.0" fill="none" stroke="#e0e0e0" stroke-width="0.5" stroke-linejoin="round" stroke-linecap="round" />
<path d="M300.0,265.0 C298.8,265.6 293.1,269.4 290.0,270.0 C286.9,270.6 276.9,270.0 275.0,270.0" fill="none" stroke="#555" stroke-width="0.5" stroke-linejoin="round" stroke-linecap="butt" stroke-dasharray="2.6 22" stroke-dashoffset="14" opacity="0.7"/>
<path d="M265.0,287.5 C265.3,289.4 268.1,299.4 267.5,302.5 C266.9,305.6 262.2,309.1 260.0,312.5 C257.8,315.9 251.2,327.8 250.0,330.0" fill="none" stroke="#e0e0e0" stroke-width="0.5" stroke-linejoin="round" stroke-linecap="round" />
<path d="M265.0,287.5 C265.3,289.4 268.1,299.4 267.5,302.5 C266.9,305.6 262.2,309.1 260.0,312.5 C257.8,315.9 251.2,327.8 250.0,330.0" fill="none" stroke="#555" stroke-width="0.5" stroke-linejoin="round" stroke-linecap="butt" stroke-dasharray="2.6 29" stroke-dashoffset="2" opacity="0.7"/>
<path d="M267.5,302.5 C269.7,303.1 280.9,307.5 285.0,307.5 C289.1,307.5 298.1,303.1 300.0,302.5" fill="none" stroke="#e0e0e0" stroke-width="0.5" stroke-linejoin="round" stroke-linecap="round" />
<path d="M267.5,302.5 C269.7,303.1 280.9,307.5 285.0,307.5 C289.1,307.5 298.1,303.1 300.0,302.5" fill="none" stroke="#555" stroke-width="0.5" stroke-linejoin="round" stroke-linecap="butt" stroke-dasharray="2.6 17" stroke-dashoffset="7" opacity="0.7"/>
<path d="M285.0,307.5 C284.4,308.8 281.2,315.9 280.0,317.5 C278.8,319.1 275.6,319.7 275.0,320.0" fill="none" stroke="#e0e0e0" stroke-width="0.5" stroke-linejoin="round" stroke-linecap="round" />
<path d="M285.0,307.5 C284.4,308.8 281.2,315.9 280.0,317.5 C278.8,319.1 275.6,319.7 275.0,320.0" fill="none" stroke="#555" stroke-width="0.5" stroke-linejoin="round" stroke-linecap="butt" stroke-dasharray="2.6 24" stroke-dashoffset="12" opacity="0.7"/>
<path d="M182.5,307.5 C184.1,307.7 193.4,306.0 195.0,308.8 C196.6,311.6 195.0,327.4 195.0,330.0" fill="none" stroke="#e0e0e0" stroke-width="0.5" stroke-linejoin="round" stroke-linecap="round" />
<path d="M182.5,307.5 C184.1,307.7 193.4,306.0 195.0,308.8 C196.6,311.6 195.0,327.4 195.0,330.0" fill="none" stroke="#555" stroke-width="0.5" stroke-linejoin="round" stroke-linecap="butt" stroke-dasharray="2.6 31" stroke-dashoffset="0" opacity="0.7"/>
<path d="M175.0,315.0 L176.2,330.0" fill="none" stroke="#e0e0e0" stroke-width="0.5" stroke-linejoin="round" stroke-linecap="round" />
<path d="M175.0,315.0 L176.2,330.0" fill="none" stroke="#555" stroke-width="0.5" stroke-linejoin="round" stroke-linecap="round" stroke-dasharray="2.6 19" stroke-dashoffset="5" opacity="0.7"/>
<path d="M162.5,265.0 L165.0,275.0" fill="none" stroke="#e0e0e0" stroke-width="0.5" stroke-linejoin="round" stroke-linecap="round" />
<path d="M162.5,265.0 L165.0,275.0" fill="none" stroke="#555" stroke-width="0.5" stroke-linejoin="round" stroke-linecap="round" stroke-dasharray="2.6 26" stroke-dashoffset="10" opacity="0.7"/>
<path d="M195.0,227.5 L198.8,231.2" fill="none" stroke="#e0e0e0" stroke-width="0.5" stroke-linejoin="round" stroke-linecap="round" />
<path d="M195.0,227.5 L198.8,231.2" fill="none" stroke="#555" stroke-width="0.5" stroke-linejoin="round" stroke-linecap="round" stroke-dasharray="2.6 33" stroke-dashoffset="15" opacity="0.7"/>
<path d="M247.5,220.0 C247.7,220.6 248.2,223.9 248.8,225.0 C249.4,226.1 252.0,228.3 252.5,228.8" fill="none" stroke="#e0e0e0" stroke-width="0.5" stroke-linejoin="round" stroke-linecap="round" />
<path d="M247.5,220.0 C247.7,220.6 248.2,223.9 248.8,225.0 C249.4,226.1 252.0,228.3 252.5,228.8" fill="none" stroke="#555" stroke-width="0.5" stroke-linejoin="round" stroke-linecap="butt" stroke-dasharray="2.6 21" stroke-dashoffset="3" opacity="0.7"/>
<path d="M300.0,257.5 C301.6,257.7 309.4,258.8 312.5,258.8 C315.6,258.8 323.4,257.7 325.0,257.5" fill="none" stroke="#e0e0e0" stroke-width="0.5" stroke-linejoin="round" stroke-linecap="round" />
<path d="M300.0,257.5 C301.6,257.7 309.4,258.8 312.5,258.8 C315.6,258.8 323.4,257.7 325.0,257.5" fill="none" stroke="#555" stroke-width="0.5" stroke-linejoin="round" stroke-linecap="butt" stroke-dasharray="2.6 28" stroke-dashoffset="8" opacity="0.7"/>
<path d="M325.0,227.5 C326.6,228.1 334.4,232.0 337.5,232.5 C340.6,233.0 345.9,231.5 350.0,231.2 C354.1,230.9 367.2,230.8 370.0,230.0 C372.8,229.2 372.2,225.6 372.5,225.0" fill="none" stroke="#e0e0e0" stroke-width="0.5" stroke-linejoin="round" stroke-linecap="round" />
<path d="M325.0,227.5 C326.6,228.1 334.4,232.0 337.5,232.5 C340.6,233.0 345.9,231.5 350.0,231.2 C354.1,230.9 367.2,230.8 370.0,230.0 C372.8,229.2 372.2,225.6 372.5,225.0" fill="none" stroke="#555" stroke-width="0.5" stroke-linejoin="round" stroke-linecap="butt" stroke-dasharray="2.6 16" stroke-dashoffset="13" opacity="0.7"/>
<path d="M350.0,231.2 C350.1,232.6 351.2,239.8 351.2,242.5 C351.2,245.2 349.7,249.7 350.0,252.5 C350.3,255.3 353.5,261.6 353.8,265.0 C354.1,268.4 352.5,275.3 352.5,280.0 C352.5,284.7 353.3,296.2 353.8,302.5 C354.3,308.8 355.9,326.6 356.2,330.0" fill="none" stroke="#e0e0e0" stroke-width="0.5" stroke-linejoin="round" stroke-linecap="round" />
<path d="M350.0,231.2 C350.1,232.6 351.2,239.8 351.2,242.5 C351.2,245.2 349.7,249.7 350.0,252.5 C350.3,255.3 353.5,261.6 353.8,265.0 C354.1,268.4 352.5,275.3 352.5,280.0 C352.5,284.7 353.3,296.2 353.8,302.5 C354.3,308.8 355.9,326.6 356.2,330.0" fill="none" stroke="#555" stroke-width="0.5" stroke-linejoin="round" stroke-linecap="butt" stroke-dasharray="2.6 23" stroke-dashoffset="1" opacity="0.7"/>
<path d="M337.5,247.5 C339.1,248.1 346.6,251.9 350.0,252.5 C353.4,253.1 360.9,252.3 365.0,252.5 C369.1,252.7 378.1,253.5 382.5,253.8 C386.9,254.1 395.6,255.0 400.0,255.0 C404.4,255.0 412.5,254.0 417.5,253.8 C422.5,253.7 435.9,253.7 440.0,253.8 C444.1,254.0 448.8,254.8 450.0,255.0" fill="none" stroke="#e0e0e0" stroke-width="0.5" stroke-linejoin="round" stroke-linecap="round" />
<path d="M337.5,247.5 C339.1,248.1 346.6,251.9 350.0,252.5 C353.4,253.1 360.9,252.3 365.0,252.5 C369.1,252.7 378.1,253.5 382.5,253.8 C386.9,254.1 395.6,255.0 400.0,255.0 C404.4,255.0 412.5,254.0 417.5,253.8 C422.5,253.7 435.9,253.7 440.0,253.8 C444.1,254.0 448.8,254.8 450.0,255.0" fill="none" stroke="#555" stroke-width="0.5" stroke-linejoin="round" stroke-linecap="butt" stroke-dasharray="2.6 30" stroke-dashoffset="6" opacity="0.7"/>
<path d="M353.8,265.0 C355.2,265.9 362.4,270.9 365.0,272.5 C367.6,274.1 372.8,276.6 375.0,277.5 C377.2,278.4 380.6,279.1 382.5,280.0 C384.4,280.9 389.1,284.4 390.0,285.0" fill="none" stroke="#e0e0e0" stroke-width="0.5" stroke-linejoin="round" stroke-linecap="round" />
<path d="M353.8,265.0 C355.2,265.9 362.4,270.9 365.0,272.5 C367.6,274.1 372.8,276.6 375.0,277.5 C377.2,278.4 380.6,279.1 382.5,280.0 C384.4,280.9 389.1,284.4 390.0,285.0" fill="none" stroke="#555" stroke-width="0.5" stroke-linejoin="round" stroke-linecap="butt" stroke-dasharray="2.6 18" stroke-dashoffset="11" opacity="0.7"/>
<path d="M382.5,253.8 C382.5,255.8 382.5,266.7 382.5,270.0 C382.5,273.3 382.5,278.8 382.5,280.0" fill="none" stroke="#e0e0e0" stroke-width="0.5" stroke-linejoin="round" stroke-linecap="round" />
<path d="M382.5,253.8 C382.5,255.8 382.5,266.7 382.5,270.0 C382.5,273.3 382.5,278.8 382.5,280.0" fill="none" stroke="#555" stroke-width="0.5" stroke-linejoin="round" stroke-linecap="butt" stroke-dasharray="2.6 25" stroke-dashoffset="16" opacity="0.7"/>
<path d="M333.8,278.8 C334.7,278.6 338.7,277.4 341.2,277.5 C343.7,277.6 352.2,279.7 353.8,280.0" fill="none" stroke="#e0e0e0" stroke-width="0.5" stroke-linejoin="round" stroke-linecap="round" />
<path d="M333.8,278.8 C334.7,278.6 338.7,277.4 341.2,277.5 C343.7,277.6 352.2,279.7 353.8,280.0" fill="none" stroke="#555" stroke-width="0.5" stroke-linejoin="round" stroke-linecap="butt" stroke-dasharray="2.6 32" stroke-dashoffset="4" opacity="0.7"/>
<path d="M300.0,292.5 C301.6,292.3 309.4,291.2 312.5,291.2 C315.6,291.2 322.2,292.6 325.0,292.5 C327.8,292.4 333.4,291.2 335.0,290.0 C336.6,288.8 337.2,283.4 337.5,282.5" fill="none" stroke="#e0e0e0" stroke-width="0.5" stroke-linejoin="round" stroke-linecap="round" />
<path d="M300.0,292.5 C301.6,292.3 309.4,291.2 312.5,291.2 C315.6,291.2 322.2,292.6 325.0,292.5 C327.8,292.4 333.4,291.2 335.0,290.0 C336.6,288.8 337.2,283.4 337.5,282.5" fill="none" stroke="#555" stroke-width="0.5" stroke-linejoin="round" stroke-linecap="butt" stroke-dasharray="2.6 20" stroke-dashoffset="9" opacity="0.7"/>
<path d="M407.5,220.0 C407.8,221.6 408.8,230.6 410.0,232.5 C411.2,234.4 415.6,234.1 417.5,235.0 C419.4,235.9 423.8,237.8 425.0,240.0 C426.2,242.2 427.2,250.9 427.5,252.5" fill="none" stroke="#e0e0e0" stroke-width="0.5" stroke-linejoin="round" stroke-linecap="round" />
<path d="M407.5,220.0 C407.8,221.6 408.8,230.6 410.0,232.5 C411.2,234.4 415.6,234.1 417.5,235.0 C419.4,235.9 423.8,237.8 425.0,240.0 C426.2,242.2 427.2,250.9 427.5,252.5" fill="none" stroke="#555" stroke-width="0.5" stroke-linejoin="round" stroke-linecap="butt" stroke-dasharray="2.6 27" stroke-dashoffset="14" opacity="0.7"/>
<path d="M425.0,240.0 C426.9,239.7 436.9,238.8 440.0,237.5 C443.1,236.2 448.8,230.9 450.0,230.0" fill="none" stroke="#e0e0e0" stroke-width="0.5" stroke-linejoin="round" stroke-linecap="round" />
<path d="M425.0,240.0 C426.9,239.7 436.9,238.8 440.0,237.5 C443.1,236.2 448.8,230.9 450.0,230.0" fill="none" stroke="#555" stroke-width="0.5" stroke-linejoin="round" stroke-linecap="butt" stroke-dasharray="2.6 15" stroke-dashoffset="2" opacity="0.7"/>
<path d="M400.0,265.0 C401.2,265.3 407.5,267.5 410.0,267.5 C412.5,267.5 418.1,264.7 420.0,265.0 C421.9,265.3 423.8,268.4 425.0,270.0 C426.2,271.6 428.1,275.9 430.0,277.5 C431.9,279.1 437.5,282.2 440.0,282.5 C442.5,282.8 448.8,280.3 450.0,280.0" fill="none" stroke="#e0e0e0" stroke-width="0.5" stroke-linejoin="round" stroke-linecap="round" />
<path d="M400.0,265.0 C401.2,265.3 407.5,267.5 410.0,267.5 C412.5,267.5 418.1,264.7 420.0,265.0 C421.9,265.3 423.8,268.4 425.0,270.0 C426.2,271.6 428.1,275.9 430.0,277.5 C431.9,279.1 437.5,282.2 440.0,282.5 C442.5,282.8 448.8,280.3 450.0,280.0" fill="none" stroke="#555" stroke-width="0.5" stroke-linejoin="round" stroke-linecap="butt" stroke-dasharray="2.6 22" stroke-dashoffset="7" opacity="0.7"/>
<path d="M410.0,267.5 C410.3,269.1 412.8,277.5 412.5,280.0 C412.2,282.5 407.8,285.8 407.5,287.5 C407.2,289.2 409.7,293.0 410.0,293.8" fill="none" stroke="#e0e0e0" stroke-width="0.5" stroke-linejoin="round" stroke-linecap="round" />
<path d="M410.0,267.5 C410.3,269.1 412.8,277.5 412.5,280.0 C412.2,282.5 407.8,285.8 407.5,287.5 C407.2,289.2 409.7,293.0 410.0,293.8" fill="none" stroke="#555" stroke-width="0.5" stroke-linejoin="round" stroke-linecap="butt" stroke-dasharray="2.6 29" stroke-dashoffset="12" opacity="0.7"/>
<path d="M430.0,277.5 C430.0,279.7 429.4,292.5 430.0,295.0 C430.6,297.5 434.4,297.2 435.0,297.5" fill="none" stroke="#e0e0e0" stroke-width="0.5" stroke-linejoin="round" stroke-linecap="round" />
<path d="M430.0,277.5 C430.0,279.7 429.4,292.5 430.0,295.0 C430.6,297.5 434.4,297.2 435.0,297.5" fill="none" stroke="#555" stroke-width="0.5" stroke-linejoin="round" stroke-linecap="butt" stroke-dasharray="2.6 17" stroke-dashoffset="0" opacity="0.7"/>
<path d="M440.0,282.5 C440.0,284.1 438.8,292.5 440.0,295.0 C441.2,297.5 448.8,301.6 450.0,302.5" fill="none" stroke="#e0e0e0" stroke-width="0.5" stroke-linejoin="round" stroke-linecap="round" />
<path d="M440.0,282.5 C440.0,284.1 438.8,292.5 440.0,295.0 C441.2,297.5 448.8,301.6 450.0,302.5" fill="none" stroke="#555" stroke-width="0.5" stroke-linejoin="round" stroke-linecap="butt" stroke-dasharray="2.6 24" stroke-dashoffset="5" opacity="0.7"/>
<path d="M362.5,315.0 C364.1,315.3 371.9,317.5 375.0,317.5 C378.1,317.5 384.4,315.6 387.5,315.0 C390.6,314.4 398.4,312.8 400.0,312.5" fill="none" stroke="#e0e0e0" stroke-width="0.5" stroke-linejoin="round" stroke-linecap="round" />
<path d="M362.5,315.0 C364.1,315.3 371.9,317.5 375.0,317.5 C378.1,317.5 384.4,315.6 387.5,315.0 C390.6,314.4 398.4,312.8 400.0,312.5" fill="none" stroke="#555" stroke-width="0.5" stroke-linejoin="round" stroke-linecap="butt" stroke-dasharray="2.6 31" stroke-dashoffset="10" opacity="0.7"/>
<path d="M417.5,305.0 C417.8,305.9 418.4,311.2 420.0,312.5 C421.6,313.8 427.5,314.1 430.0,315.0 C432.5,315.9 437.5,319.4 440.0,320.0 C442.5,320.6 448.8,320.0 450.0,320.0" fill="none" stroke="#e0e0e0" stroke-width="0.5" stroke-linejoin="round" stroke-linecap="round" />
<path d="M417.5,305.0 C417.8,305.9 418.4,311.2 420.0,312.5 C421.6,313.8 427.5,314.1 430.0,315.0 C432.5,315.9 437.5,319.4 440.0,320.0 C442.5,320.6 448.8,320.0 450.0,320.0" fill="none" stroke="#555" stroke-width="0.5" stroke-linejoin="round" stroke-linecap="butt" stroke-dasharray="2.6 19" stroke-dashoffset="15" opacity="0.7"/>
<path d="M300.0,320.0 L310.0,321.2" fill="none" stroke="#e0e0e0" stroke-width="0.5" stroke-linejoin="round" stroke-linecap="round" />
<path d="M300.0,320.0 L310.0,321.2" fill="none" stroke="#555" stroke-width="0.5" stroke-linejoin="round" stroke-linecap="round" stroke-dasharray="2.6 26" stroke-dashoffset="3" opacity="0.7"/>
<path d="M315.0,235.0 C314.4,236.2 310.0,242.8 310.0,245.0 C310.0,247.2 314.4,251.6 315.0,252.5" fill="none" stroke="#e0e0e0" stroke-width="0.5" stroke-linejoin="round" stroke-linecap="round" />
<path d="M315.0,235.0 C314.4,236.2 310.0,242.8 310.0,245.0 C310.0,247.2 314.4,251.6 315.0,252.5" fill="none" stroke="#555" stroke-width="0.5" stroke-linejoin="round" stroke-linecap="butt" stroke-dasharray="2.6 33" stroke-dashoffset="8" opacity="0.7"/>
<path d="M512.5,220.0 C513.1,220.9 517.2,225.3 517.5,227.5 C517.8,229.7 516.4,235.3 515.0,237.5 C513.6,239.7 509.0,244.5 506.2,245.0 C503.4,245.5 495.8,241.2 492.5,241.2 C489.2,241.2 483.4,244.1 480.0,245.0 C476.6,245.9 468.8,248.0 465.0,248.8 C461.2,249.6 451.9,250.9 450.0,251.2" fill="none" stroke="#e0e0e0" stroke-width="0.5" stroke-linejoin="round" stroke-linecap="round" />
<path d="M512.5,220.0 C513.1,220.9 517.2,225.3 517.5,227.5 C517.8,229.7 516.4,235.3 515.0,237.5 C513.6,239.7 509.0,244.5 506.2,245.0 C503.4,245.5 495.8,241.2 492.5,241.2 C489.2,241.2 483.4,244.1 480.0,245.0 C476.6,245.9 468.8,248.0 465.0,248.8 C461.2,249.6 451.9,250.9 450.0,251.2" fill="none" stroke="#555" stroke-width="0.5" stroke-linejoin="round" stroke-linecap="butt" stroke-dasharray="2.6 21" stroke-dashoffset="13" opacity="0.7"/>
<path d="M506.2,245.0 C506.7,246.2 509.4,252.5 510.0,255.0 C510.6,257.5 511.5,261.9 511.2,265.0 C510.9,268.1 508.9,277.5 507.5,280.0 C506.1,282.5 501.2,283.1 500.0,285.0 C498.8,286.9 496.6,293.8 497.5,295.0 C498.4,296.2 505.8,294.4 507.5,295.0 C509.2,295.6 510.9,297.8 511.2,300.0 C511.5,302.2 510.1,310.9 510.0,312.5" fill="none" stroke="#e0e0e0" stroke-width="0.5" stroke-linejoin="round" stroke-linecap="round" />
<path d="M506.2,245.0 C506.7,246.2 509.4,252.5 510.0,255.0 C510.6,257.5 511.5,261.9 511.2,265.0 C510.9,268.1 508.9,277.5 507.5,280.0 C506.1,282.5 501.2,283.1 500.0,285.0 C498.8,286.9 496.6,293.8 497.5,295.0 C498.4,296.2 505.8,294.4 507.5,295.0 C509.2,295.6 510.9,297.8 511.2,300.0 C511.5,302.2 510.1,310.9 510.0,312.5" fill="none" stroke="#555" stroke-width="0.5" stroke-linejoin="round" stroke-linecap="butt" stroke-dasharray="2.6 28" stroke-dashoffset="1" opacity="0.7"/>
<path d="M480.0,245.0 C479.9,246.2 478.8,252.2 478.8,255.0 C478.8,257.8 479.5,264.5 480.0,267.5 C480.5,270.5 480.9,277.1 482.5,278.8 C484.1,280.5 489.4,281.1 492.5,281.2 C495.6,281.3 503.8,280.0 507.5,280.0 C511.2,280.0 519.4,281.5 522.5,281.2 C525.6,280.9 531.2,278.0 532.5,277.5" fill="none" stroke="#e0e0e0" stroke-width="0.5" stroke-linejoin="round" stroke-linecap="round" />
<path d="M480.0,245.0 C479.9,246.2 478.8,252.2 478.8,255.0 C478.8,257.8 479.5,264.5 480.0,267.5 C480.5,270.5 480.9,277.1 482.5,278.8 C484.1,280.5 489.4,281.1 492.5,281.2 C495.6,281.3 503.8,280.0 507.5,280.0 C511.2,280.0 519.4,281.5 522.5,281.2 C525.6,280.9 531.2,278.0 532.5,277.5" fill="none" stroke="#555" stroke-width="0.5" stroke-linejoin="round" stroke-linecap="butt" stroke-dasharray="2.6 16" stroke-dashoffset="6" opacity="0.7"/>
<path d="M450.0,257.5 C451.6,257.5 458.9,257.8 462.5,257.5 C466.1,257.2 476.8,255.3 478.8,255.0" fill="none" stroke="#e0e0e0" stroke-width="0.5" stroke-linejoin="round" stroke-linecap="round" />
<path d="M450.0,257.5 C451.6,257.5 458.9,257.8 462.5,257.5 C466.1,257.2 476.8,255.3 478.8,255.0" fill="none" stroke="#555" stroke-width="0.5" stroke-linejoin="round" stroke-linecap="butt" stroke-dasharray="2.6 23" stroke-dashoffset="11" opacity="0.7"/>
<path d="M450.0,267.5 C451.9,267.7 461.9,267.7 465.0,268.8 C468.1,269.9 472.8,274.9 475.0,276.2 C477.2,277.4 481.6,278.5 482.5,278.8" fill="none" stroke="#e0e0e0" stroke-width="0.5" stroke-linejoin="round" stroke-linecap="round" />
<path d="M450.0,267.5 C451.9,267.7 461.9,267.7 465.0,268.8 C468.1,269.9 472.8,274.9 475.0,276.2 C477.2,277.4 481.6,278.5 482.5,278.8" fill="none" stroke="#555" stroke-width="0.5" stroke-linejoin="round" stroke-linecap="butt" stroke-dasharray="2.6 30" stroke-dashoffset="16" opacity="0.7"/>
<path d="M492.5,260.0 C492.7,261.2 493.3,267.4 493.8,270.0 C494.3,272.6 495.9,279.8 496.2,281.2" fill="none" stroke="#e0e0e0" stroke-width="0.5" stroke-linejoin="round" stroke-linecap="round" />
<path d="M492.5,260.0 C492.7,261.2 493.3,267.4 493.8,270.0 C494.3,272.6 495.9,279.8 496.2,281.2" fill="none" stroke="#555" stroke-width="0.5" stroke-linejoin="round" stroke-linecap="butt" stroke-dasharray="2.6 18" stroke-dashoffset="4" opacity="0.7"/>
<path d="M450.0,292.5 C451.2,292.2 457.5,290.2 460.0,290.0 C462.5,289.8 467.2,291.2 470.0,291.2 C472.8,291.2 479.9,289.8 482.5,290.0 C485.1,290.2 489.3,291.9 491.2,292.5 C493.1,293.1 496.7,294.7 497.5,295.0" fill="none" stroke="#e0e0e0" stroke-width="0.5" stroke-linejoin="round" stroke-linecap="round" />
<path d="M450.0,292.5 C451.2,292.2 457.5,290.2 460.0,290.0 C462.5,289.8 467.2,291.2 470.0,291.2 C472.8,291.2 479.9,289.8 482.5,290.0 C485.1,290.2 489.3,291.9 491.2,292.5 C493.1,293.1 496.7,294.7 497.5,295.0" fill="none" stroke="#555" stroke-width="0.5" stroke-linejoin="round" stroke-linecap="butt" stroke-dasharray="2.6 25" stroke-dashoffset="9" opacity="0.7"/>
<path d="M450.0,302.5 C451.2,302.8 458.6,302.8 460.0,305.0 C461.4,307.2 461.2,316.9 461.2,320.0 C461.2,323.1 460.1,328.8 460.0,330.0" fill="none" stroke="#e0e0e0" stroke-width="0.5" stroke-linejoin="round" stroke-linecap="round" />
<path d="M450.0,302.5 C451.2,302.8 458.6,302.8 460.0,305.0 C461.4,307.2 461.2,316.9 461.2,320.0 C461.2,323.1 460.1,328.8 460.0,330.0" fill="none" stroke="#555" stroke-width="0.5" stroke-linejoin="round" stroke-linecap="butt" stroke-dasharray="2.6 32" stroke-dashoffset="14" opacity="0.7"/>
<path d="M460.0,305.0 C461.9,305.1 472.2,305.3 475.0,306.2 C477.8,307.1 480.3,310.5 482.5,312.5 C484.7,314.5 489.1,321.2 492.5,322.5 C495.9,323.8 507.8,322.5 510.0,322.5" fill="none" stroke="#e0e0e0" stroke-width="0.5" stroke-linejoin="round" stroke-linecap="round" />
<path d="M460.0,305.0 C461.9,305.1 472.2,305.3 475.0,306.2 C477.8,307.1 480.3,310.5 482.5,312.5 C484.7,314.5 489.1,321.2 492.5,322.5 C495.9,323.8 507.8,322.5 510.0,322.5" fill="none" stroke="#555" stroke-width="0.5" stroke-linejoin="round" stroke-linecap="butt" stroke-dasharray="2.6 20" stroke-dashoffset="2" opacity="0.7"/>
<path d="M532.5,252.5 C532.5,255.6 532.5,272.2 532.5,277.5 C532.5,282.8 532.5,292.8 532.5,295.0" fill="none" stroke="#e0e0e0" stroke-width="0.5" stroke-linejoin="round" stroke-linecap="round" />
<path d="M532.5,252.5 C532.5,255.6 532.5,272.2 532.5,277.5 C532.5,282.8 532.5,292.8 532.5,295.0" fill="none" stroke="#555" stroke-width="0.5" stroke-linejoin="round" stroke-linecap="butt" stroke-dasharray="2.6 27" stroke-dashoffset="7" opacity="0.7"/>
<path d="M520.0,307.5 C520.6,306.9 523.4,303.4 525.0,302.5 C526.6,301.6 531.6,300.3 532.5,300.0" fill="none" stroke="#e0e0e0" stroke-width="0.5" stroke-linejoin="round" stroke-linecap="round" />
<path d="M520.0,307.5 C520.6,306.9 523.4,303.4 525.0,302.5 C526.6,301.6 531.6,300.3 532.5,300.0" fill="none" stroke="#555" stroke-width="0.5" stroke-linejoin="round" stroke-linecap="butt" stroke-dasharray="2.6 15" stroke-dashoffset="12" opacity="0.7"/>
<path d="M510.0,312.5 C511.2,313.0 517.5,315.9 520.0,316.2 C522.5,316.5 528.4,314.5 530.0,315.0 C531.6,315.5 532.2,319.4 532.5,320.0" fill="none" stroke="#e0e0e0" stroke-width="0.5" stroke-linejoin="round" stroke-linecap="round" />
<path d="M510.0,312.5 C511.2,313.0 517.5,315.9 520.0,316.2 C522.5,316.5 528.4,314.5 530.0,315.0 C531.6,315.5 532.2,319.4 532.5,320.0" fill="none" stroke="#555" stroke-width="0.5" stroke-linejoin="round" stroke-linecap="butt" stroke-dasharray="2.6 22" stroke-dashoffset="0" opacity="0.7"/>
<path d="M492.5,322.5 L493.8,330.0" fill="none" stroke="#e0e0e0" stroke-width="0.5" stroke-linejoin="round" stroke-linecap="round" />
<path d="M492.5,322.5 L493.8,330.0" fill="none" stroke="#555" stroke-width="0.5" stroke-linejoin="round" stroke-linecap="round" stroke-dasharray="2.6 29" stroke-dashoffset="5" opacity="0.7"/>
<path d="M485.0,220.0 C485.6,221.2 489.1,227.3 490.0,230.0 C490.9,232.7 492.2,239.8 492.5,241.2" fill="none" stroke="#e0e0e0" stroke-width="0.5" stroke-linejoin="round" stroke-linecap="round" />
<path d="M485.0,220.0 C485.6,221.2 489.1,227.3 490.0,230.0 C490.9,232.7 492.2,239.8 492.5,241.2" fill="none" stroke="#555" stroke-width="0.5" stroke-linejoin="round" stroke-linecap="butt" stroke-dasharray="2.6 17" stroke-dashoffset="10" opacity="0.7"/>
<path d="M162.5,353.8 C164.7,353.8 175.3,353.8 180.0,353.8 C184.7,353.9 194.4,354.2 200.0,354.2 C205.6,354.2 220.5,353.4 225.0,353.8 C229.5,354.2 233.1,357.4 236.2,357.5 C239.3,357.6 246.4,355.3 250.0,355.0 C253.6,354.7 262.2,355.1 265.0,355.0 C267.8,354.9 271.6,353.9 272.5,353.8" fill="none" stroke="#e0e0e0" stroke-width="0.5" stroke-linejoin="round" stroke-linecap="round" />
<path d="M162.5,353.8 C164.7,353.8 175.3,353.8 180.0,353.8 C184.7,353.9 194.4,354.2 200.0,354.2 C205.6,354.2 220.5,353.4 225.0,353.8 C229.5,354.2 233.1,357.4 236.2,357.5 C239.3,357.6 246.4,355.3 250.0,355.0 C253.6,354.7 262.2,355.1 265.0,355.0 C267.8,354.9 271.6,353.9 272.5,353.8" fill="none" stroke="#555" stroke-width="0.5" stroke-linejoin="round" stroke-linecap="butt" stroke-dasharray="2.6 24" stroke-dashoffset="15" opacity="0.7"/>
<path d="M176.2,330.0 C176.0,331.6 176.1,339.5 175.0,342.5 C173.9,345.5 168.6,351.3 167.5,353.8 C166.4,356.3 165.7,359.5 166.2,362.5 C166.7,365.5 170.6,375.0 171.2,377.5 C171.8,380.0 171.2,381.9 171.2,382.5" fill="none" stroke="#e0e0e0" stroke-width="0.5" stroke-linejoin="round" stroke-linecap="round" />
<path d="M176.2,330.0 C176.0,331.6 176.1,339.5 175.0,342.5 C173.9,345.5 168.6,351.3 167.5,353.8 C166.4,356.3 165.7,359.5 166.2,362.5 C166.7,365.5 170.6,375.0 171.2,377.5 C171.8,380.0 171.2,381.9 171.2,382.5" fill="none" stroke="#555" stroke-width="0.5" stroke-linejoin="round" stroke-linecap="butt" stroke-dasharray="2.6 31" stroke-dashoffset="3" opacity="0.7"/>
<path d="M171.2,377.5 C172.3,377.5 177.7,377.0 180.0,377.5 C182.3,378.0 187.7,380.6 190.0,381.2 C192.3,381.8 197.7,382.3 198.8,382.5" fill="none" stroke="#e0e0e0" stroke-width="0.5" stroke-linejoin="round" stroke-linecap="round" />
<path d="M171.2,377.5 C172.3,377.5 177.7,377.0 180.0,377.5 C182.3,378.0 187.7,380.6 190.0,381.2 C192.3,381.8 197.7,382.3 198.8,382.5" fill="none" stroke="#555" stroke-width="0.5" stroke-linejoin="round" stroke-linecap="butt" stroke-dasharray="2.6 19" stroke-dashoffset="8" opacity="0.7"/>
<path d="M180.0,353.8 L180.0,377.5" fill="none" stroke="#e0e0e0" stroke-width="0.5" stroke-linejoin="round" stroke-linecap="round" />
<path d="M180.0,353.8 L180.0,377.5" fill="none" stroke="#555" stroke-width="0.5" stroke-linejoin="round" stroke-linecap="round" stroke-dasharray="2.6 26" stroke-dashoffset="13" opacity="0.7"/>
<path d="M175.0,382.5 C175.0,385.3 175.0,399.5 175.0,405.0 C175.0,410.5 175.0,423.6 175.0,426.2" fill="none" stroke="#e0e0e0" stroke-width="0.5" stroke-linejoin="round" stroke-linecap="round" />
<path d="M175.0,382.5 C175.0,385.3 175.0,399.5 175.0,405.0 C175.0,410.5 175.0,423.6 175.0,426.2" fill="none" stroke="#555" stroke-width="0.5" stroke-linejoin="round" stroke-linecap="butt" stroke-dasharray="2.6 33" stroke-dashoffset="1" opacity="0.7"/>
<path d="M198.8,382.5 C198.6,383.8 198.9,387.8 197.5,392.5 C196.1,397.2 188.9,415.3 187.5,420.0 C186.1,424.7 186.4,428.8 186.2,430.0" fill="none" stroke="#e0e0e0" stroke-width="0.5" stroke-linejoin="round" stroke-linecap="round" />
<path d="M198.8,382.5 C198.6,383.8 198.9,387.8 197.5,392.5 C196.1,397.2 188.9,415.3 187.5,420.0 C186.1,424.7 186.4,428.8 186.2,430.0" fill="none" stroke="#555" stroke-width="0.5" stroke-linejoin="round" stroke-linecap="butt" stroke-dasharray="2.6 21" stroke-dashoffset="6" opacity="0.7"/>
<path d="M198.8,385.5 C200.2,386.2 206.7,390.6 210.0,391.2 C213.3,391.8 222.2,390.9 225.0,390.0 C227.8,389.1 231.1,385.7 232.5,383.8 C233.9,381.9 235.7,378.3 236.2,375.0 C236.7,371.7 236.2,359.7 236.2,357.5" fill="none" stroke="#e0e0e0" stroke-width="0.5" stroke-linejoin="round" stroke-linecap="round" />
<path d="M198.8,385.5 C200.2,386.2 206.7,390.6 210.0,391.2 C213.3,391.8 222.2,390.9 225.0,390.0 C227.8,389.1 231.1,385.7 232.5,383.8 C233.9,381.9 235.7,378.3 236.2,375.0 C236.7,371.7 236.2,359.7 236.2,357.5" fill="none" stroke="#555" stroke-width="0.5" stroke-linejoin="round" stroke-linecap="butt" stroke-dasharray="2.6 28" stroke-dashoffset="11" opacity="0.7"/>
<path d="M202.5,377.5 C203.8,376.9 209.7,373.0 212.5,372.5 C215.3,372.0 222.2,374.4 225.0,373.8 C227.8,373.2 233.8,368.3 235.0,367.5" fill="none" stroke="#e0e0e0" stroke-width="0.5" stroke-linejoin="round" stroke-linecap="round" />
<path d="M202.5,377.5 C203.8,376.9 209.7,373.0 212.5,372.5 C215.3,372.0 222.2,374.4 225.0,373.8 C227.8,373.2 233.8,368.3 235.0,367.5" fill="none" stroke="#555" stroke-width="0.5" stroke-linejoin="round" stroke-linecap="butt" stroke-dasharray="2.6 16" stroke-dashoffset="16" opacity="0.7"/>
<path d="M227.5,335.0 L227.5,353.8" fill="none" stroke="#e0e0e0" stroke-width="0.5" stroke-linejoin="round" stroke-linecap="round" />
<path d="M227.5,335.0 L227.5,353.8" fill="none" stroke="#555" stroke-width="0.5" stroke-linejoin="round" stroke-linecap="round" stroke-dasharray="2.6 23" stroke-dashoffset="4" opacity="0.7"/>
<path d="M247.5,330.0 C247.3,331.6 247.1,339.4 246.2,342.5 C245.3,345.6 240.8,353.4 240.0,355.0" fill="none" stroke="#e0e0e0" stroke-width="0.5" stroke-linejoin="round" stroke-linecap="round" />
<path d="M247.5,330.0 C247.3,331.6 247.1,339.4 246.2,342.5 C245.3,345.6 240.8,353.4 240.0,355.0" fill="none" stroke="#555" stroke-width="0.5" stroke-linejoin="round" stroke-linecap="butt" stroke-dasharray="2.6 30" stroke-dashoffset="9" opacity="0.7"/>
<path d="M265.0,342.5 C265.0,344.1 265.6,352.5 265.0,355.0 C264.4,357.5 260.8,359.4 260.0,362.5 C259.2,365.6 258.8,375.0 258.8,380.0 C258.8,385.0 259.9,399.7 260.0,402.5" fill="none" stroke="#e0e0e0" stroke-width="0.5" stroke-linejoin="round" stroke-linecap="round" />
<path d="M265.0,342.5 C265.0,344.1 265.6,352.5 265.0,355.0 C264.4,357.5 260.8,359.4 260.0,362.5 C259.2,365.6 258.8,375.0 258.8,380.0 C258.8,385.0 259.9,399.7 260.0,402.5" fill="none" stroke="#555" stroke-width="0.5" stroke-linejoin="round" stroke-linecap="butt" stroke-dasharray="2.6 18" stroke-dashoffset="14" opacity="0.7"/>
<path d="M236.2,383.8 C237.3,384.9 242.0,390.9 245.0,392.5 C248.0,394.1 258.1,394.9 260.0,396.2 C261.9,397.4 260.0,401.7 260.0,402.5" fill="none" stroke="#e0e0e0" stroke-width="0.5" stroke-linejoin="round" stroke-linecap="round" />
<path d="M236.2,383.8 C237.3,384.9 242.0,390.9 245.0,392.5 C248.0,394.1 258.1,394.9 260.0,396.2 C261.9,397.4 260.0,401.7 260.0,402.5" fill="none" stroke="#555" stroke-width="0.5" stroke-linejoin="round" stroke-linecap="butt" stroke-dasharray="2.6 25" stroke-dashoffset="2" opacity="0.7"/>
<path d="M260.0,362.5 C261.6,363.1 270.3,367.5 272.5,367.5 C274.7,367.5 276.4,364.1 277.5,362.5 C278.6,360.9 279.6,356.1 281.2,355.0 C282.8,353.9 287.6,353.8 290.0,353.8 C292.4,353.8 298.8,354.9 300.0,355.0" fill="none" stroke="#e0e0e0" stroke-width="0.5" stroke-linejoin="round" stroke-linecap="round" />
<path d="M260.0,362.5 C261.6,363.1 270.3,367.5 272.5,367.5 C274.7,367.5 276.4,364.1 277.5,362.5 C278.6,360.9 279.6,356.1 281.2,355.0 C282.8,353.9 287.6,353.8 290.0,353.8 C292.4,353.8 298.8,354.9 300.0,355.0" fill="none" stroke="#555" stroke-width="0.5" stroke-linejoin="round" stroke-linecap="butt" stroke-dasharray="2.6 32" stroke-dashoffset="7" opacity="0.7"/>
<path d="M272.5,367.5 C273.1,368.8 276.9,374.1 277.5,377.5 C278.1,380.9 275.9,392.8 277.5,395.0 C279.1,397.2 288.4,395.0 290.0,395.0" fill="none" stroke="#e0e0e0" stroke-width="0.5" stroke-linejoin="round" stroke-linecap="round" />
<path d="M272.5,367.5 C273.1,368.8 276.9,374.1 277.5,377.5 C278.1,380.9 275.9,392.8 277.5,395.0 C279.1,397.2 288.4,395.0 290.0,395.0" fill="none" stroke="#555" stroke-width="0.5" stroke-linejoin="round" stroke-linecap="butt" stroke-dasharray="2.6 20" stroke-dashoffset="12" opacity="0.7"/>
<path d="M267.5,367.5 C267.2,369.1 264.7,377.8 265.0,380.0 C265.3,382.2 268.4,384.5 270.0,385.0 C271.6,385.5 276.6,383.9 277.5,383.8" fill="none" stroke="#e0e0e0" stroke-width="0.5" stroke-linejoin="round" stroke-linecap="round" />
<path d="M267.5,367.5 C267.2,369.1 264.7,377.8 265.0,380.0 C265.3,382.2 268.4,384.5 270.0,385.0 C271.6,385.5 276.6,383.9 277.5,383.8" fill="none" stroke="#555" stroke-width="0.5" stroke-linejoin="round" stroke-linecap="butt" stroke-dasharray="2.6 27" stroke-dashoffset="0" opacity="0.7"/>
<path d="M222.5,405.0 C223.8,404.7 229.1,403.4 232.5,402.5 C235.9,401.6 246.6,398.3 250.0,397.5 C253.4,396.7 258.8,396.4 260.0,396.2" fill="none" stroke="#e0e0e0" stroke-width="0.5" stroke-linejoin="round" stroke-linecap="round" />
<path d="M222.5,405.0 C223.8,404.7 229.1,403.4 232.5,402.5 C235.9,401.6 246.6,398.3 250.0,397.5 C253.4,396.7 258.8,396.4 260.0,396.2" fill="none" stroke="#555" stroke-width="0.5" stroke-linejoin="round" stroke-linecap="butt" stroke-dasharray="2.6 15" stroke-dashoffset="5" opacity="0.7"/>
<path d="M205.0,392.5 C206.2,394.7 212.5,405.3 215.0,410.0 C217.5,414.7 222.8,427.2 225.0,430.0 C227.2,432.8 231.1,432.5 232.5,432.5 C233.9,432.5 235.7,430.3 236.2,430.0" fill="none" stroke="#e0e0e0" stroke-width="0.5" stroke-linejoin="round" stroke-linecap="round" />
<path d="M205.0,392.5 C206.2,394.7 212.5,405.3 215.0,410.0 C217.5,414.7 222.8,427.2 225.0,430.0 C227.2,432.8 231.1,432.5 232.5,432.5 C233.9,432.5 235.7,430.3 236.2,430.0" fill="none" stroke="#555" stroke-width="0.5" stroke-linejoin="round" stroke-linecap="butt" stroke-dasharray="2.6 22" stroke-dashoffset="10" opacity="0.7"/>
<path d="M187.5,430.0 C188.4,429.1 192.5,424.4 195.0,422.5 C197.5,420.6 204.1,417.2 207.5,415.0 C210.9,412.8 220.6,406.2 222.5,405.0" fill="none" stroke="#e0e0e0" stroke-width="0.5" stroke-linejoin="round" stroke-linecap="round" />
<path d="M187.5,430.0 C188.4,429.1 192.5,424.4 195.0,422.5 C197.5,420.6 204.1,417.2 207.5,415.0 C210.9,412.8 220.6,406.2 222.5,405.0" fill="none" stroke="#555" stroke-width="0.5" stroke-linejoin="round" stroke-linecap="butt" stroke-dasharray="2.6 29" stroke-dashoffset="15" opacity="0.7"/>
<path d="M232.5,406.2 C234.7,407.3 245.9,413.4 250.0,415.0 C254.1,416.6 262.2,418.5 265.0,418.8 C267.8,419.1 271.6,417.7 272.5,417.5" fill="none" stroke="#e0e0e0" stroke-width="0.5" stroke-linejoin="round" stroke-linecap="round" />
<path d="M232.5,406.2 C234.7,407.3 245.9,413.4 250.0,415.0 C254.1,416.6 262.2,418.5 265.0,418.8 C267.8,419.1 271.6,417.7 272.5,417.5" fill="none" stroke="#555" stroke-width="0.5" stroke-linejoin="round" stroke-linecap="butt" stroke-dasharray="2.6 17" stroke-dashoffset="3" opacity="0.7"/>
<path d="M260.0,402.5 C261.6,404.4 270.3,414.1 272.5,417.5 C274.7,420.9 275.9,428.1 277.5,430.0 C279.1,431.9 284.1,432.2 285.0,432.5" fill="none" stroke="#e0e0e0" stroke-width="0.5" stroke-linejoin="round" stroke-linecap="round" />
<path d="M260.0,402.5 C261.6,404.4 270.3,414.1 272.5,417.5 C274.7,420.9 275.9,428.1 277.5,430.0 C279.1,431.9 284.1,432.2 285.0,432.5" fill="none" stroke="#555" stroke-width="0.5" stroke-linejoin="round" stroke-linecap="butt" stroke-dasharray="2.6 24" stroke-dashoffset="8" opacity="0.7"/>
<path d="M270.0,410.0 C271.2,409.7 277.5,408.1 280.0,407.5 C282.5,406.9 287.5,405.9 290.0,405.0 C292.5,404.1 298.8,400.6 300.0,400.0" fill="none" stroke="#e0e0e0" stroke-width="0.5" stroke-linejoin="round" stroke-linecap="round" />
<path d="M270.0,410.0 C271.2,409.7 277.5,408.1 280.0,407.5 C282.5,406.9 287.5,405.9 290.0,405.0 C292.5,404.1 298.8,400.6 300.0,400.0" fill="none" stroke="#555" stroke-width="0.5" stroke-linejoin="round" stroke-linecap="butt" stroke-dasharray="2.6 31" stroke-dashoffset="13" opacity="0.7"/>
<path d="M290.0,353.8 C290.5,355.5 293.8,364.2 293.8,367.5 C293.8,370.8 289.2,378.1 290.0,380.0 C290.8,381.9 298.8,382.2 300.0,382.5" fill="none" stroke="#e0e0e0" stroke-width="0.5" stroke-linejoin="round" stroke-linecap="round" />
<path d="M290.0,353.8 C290.5,355.5 293.8,364.2 293.8,367.5 C293.8,370.8 289.2,378.1 290.0,380.0 C290.8,381.9 298.8,382.2 300.0,382.5" fill="none" stroke="#555" stroke-width="0.5" stroke-linejoin="round" stroke-linecap="butt" stroke-dasharray="2.6 19" stroke-dashoffset="1" opacity="0.7"/>
<path d="M295.0,330.0 C295.3,330.9 296.9,336.2 297.5,337.5 C298.1,338.8 299.7,339.7 300.0,340.0" fill="none" stroke="#e0e0e0" stroke-width="0.5" stroke-linejoin="round" stroke-linecap="round" />
<path d="M295.0,330.0 C295.3,330.9 296.9,336.2 297.5,337.5 C298.1,338.8 299.7,339.7 300.0,340.0" fill="none" stroke="#555" stroke-width="0.5" stroke-linejoin="round" stroke-linecap="butt" stroke-dasharray="2.6 26" stroke-dashoffset="6" opacity="0.7"/>
<path d="M197.5,330.0 C198.8,330.6 205.3,334.5 207.5,335.0 C209.7,335.5 214.1,333.9 215.0,333.8" fill="none" stroke="#e0e0e0" stroke-width="0.5" stroke-linejoin="round" stroke-linecap="round" />
<path d="M197.5,330.0 C198.8,330.6 205.3,334.5 207.5,335.0 C209.7,335.5 214.1,333.9 215.0,333.8" fill="none" stroke="#555" stroke-width="0.5" stroke-linejoin="round" stroke-linecap="butt" stroke-dasharray="2.6 33" stroke-dashoffset="11" opacity="0.7"/>
<path d="M300.0,353.8 C301.2,353.6 306.9,352.5 310.0,352.5 C313.1,352.5 323.1,353.6 325.0,353.8" fill="none" stroke="#e0e0e0" stroke-width="0.5" stroke-linejoin="round" stroke-linecap="round" />
<path d="M300.0,353.8 C301.2,353.6 306.9,352.5 310.0,352.5 C313.1,352.5 323.1,353.6 325.0,353.8" fill="none" stroke="#555" stroke-width="0.5" stroke-linejoin="round" stroke-linecap="butt" stroke-dasharray="2.6 21" stroke-dashoffset="16" opacity="0.7"/>
<path d="M300.0,370.0 C301.6,370.0 309.4,370.1 312.5,370.0 C315.6,369.9 323.4,368.9 325.0,368.8" fill="none" stroke="#e0e0e0" stroke-width="0.5" stroke-linejoin="round" stroke-linecap="round" />
<path d="M300.0,370.0 C301.6,370.0 309.4,370.1 312.5,370.0 C315.6,369.9 323.4,368.9 325.0,368.8" fill="none" stroke="#555" stroke-width="0.5" stroke-linejoin="round" stroke-linecap="butt" stroke-dasharray="2.6 28" stroke-dashoffset="4" opacity="0.7"/>
<path d="M330.0,345.0 C330.9,343.9 335.9,337.4 337.5,336.2 C339.1,334.9 340.3,335.3 342.5,335.0 C344.7,334.7 350.9,333.8 355.0,333.8 C359.1,333.8 370.0,334.7 375.0,335.0 C380.0,335.3 392.4,334.9 395.0,336.2 C397.6,337.4 397.1,342.6 396.2,345.0 C395.3,347.4 388.4,352.8 387.5,355.0 C386.6,357.2 388.6,361.6 388.8,362.5" fill="none" stroke="#e0e0e0" stroke-width="0.5" stroke-linejoin="round" stroke-linecap="round" />
<path d="M330.0,345.0 C330.9,343.9 335.9,337.4 337.5,336.2 C339.1,334.9 340.3,335.3 342.5,335.0 C344.7,334.7 350.9,333.8 355.0,333.8 C359.1,333.8 370.0,334.7 375.0,335.0 C380.0,335.3 392.4,334.9 395.0,336.2 C397.6,337.4 397.1,342.6 396.2,345.0 C395.3,347.4 388.4,352.8 387.5,355.0 C386.6,357.2 388.6,361.6 388.8,362.5" fill="none" stroke="#555" stroke-width="0.5" stroke-linejoin="round" stroke-linecap="butt" stroke-dasharray="2.6 16" stroke-dashoffset="9" opacity="0.7"/>
<path d="M355.0,333.8 C355.1,335.2 357.1,342.0 356.2,345.0 C355.3,348.0 348.8,354.1 347.5,357.5 C346.2,360.9 346.7,369.2 346.2,372.5 C345.7,375.8 343.8,380.1 343.8,383.8 C343.8,387.6 344.5,399.9 346.2,402.5 C347.9,405.1 355.1,403.8 357.5,405.0 C359.9,406.2 364.1,411.6 365.0,412.5" fill="none" stroke="#e0e0e0" stroke-width="0.5" stroke-linejoin="round" stroke-linecap="round" />
<path d="M355.0,333.8 C355.1,335.2 357.1,342.0 356.2,345.0 C355.3,348.0 348.8,354.1 347.5,357.5 C346.2,360.9 346.7,369.2 346.2,372.5 C345.7,375.8 343.8,380.1 343.8,383.8 C343.8,387.6 344.5,399.9 346.2,402.5 C347.9,405.1 355.1,403.8 357.5,405.0 C359.9,406.2 364.1,411.6 365.0,412.5" fill="none" stroke="#555" stroke-width="0.5" stroke-linejoin="round" stroke-linecap="butt" stroke-dasharray="2.6 23" stroke-dashoffset="14" opacity="0.7"/>
<path d="M356.2,345.0 C357.6,345.6 364.5,347.8 367.5,350.0 C370.5,352.2 377.3,360.9 380.0,362.5 C382.7,364.1 385.7,362.7 388.8,362.5 C391.9,362.3 402.4,362.9 405.0,361.2 C407.6,359.5 409.1,349.6 410.0,348.8 C410.9,348.0 411.9,353.3 412.5,355.0 C413.1,356.7 414.4,360.0 415.0,362.5 C415.6,365.0 417.4,372.0 417.5,375.0 C417.6,378.0 416.4,384.8 416.2,386.2" fill="none" stroke="#e0e0e0" stroke-width="0.5" stroke-linejoin="round" stroke-linecap="round" />
<path d="M356.2,345.0 C357.6,345.6 364.5,347.8 367.5,350.0 C370.5,352.2 377.3,360.9 380.0,362.5 C382.7,364.1 385.7,362.7 388.8,362.5 C391.9,362.3 402.4,362.9 405.0,361.2 C407.6,359.5 409.1,349.6 410.0,348.8 C410.9,348.0 411.9,353.3 412.5,355.0 C413.1,356.7 414.4,360.0 415.0,362.5 C415.6,365.0 417.4,372.0 417.5,375.0 C417.6,378.0 416.4,384.8 416.2,386.2" fill="none" stroke="#555" stroke-width="0.5" stroke-linejoin="round" stroke-linecap="butt" stroke-dasharray="2.6 30" stroke-dashoffset="2" opacity="0.7"/>
<path d="M343.8,383.8 C345.8,383.3 356.1,380.8 360.0,380.0 C363.9,379.2 371.9,377.4 375.0,377.5 C378.1,377.6 382.5,380.6 385.0,381.2 C387.5,381.8 392.2,381.9 395.0,382.5 C397.8,383.1 404.9,385.7 407.5,386.2 C410.1,386.7 413.4,387.0 416.2,386.2 C419.0,385.4 426.4,380.9 430.0,380.0 C433.6,379.1 442.5,379.1 445.0,378.8 C447.5,378.5 449.4,377.7 450.0,377.5" fill="none" stroke="#e0e0e0" stroke-width="0.5" stroke-linejoin="round" stroke-linecap="round" />
<path d="M343.8,383.8 C345.8,383.3 356.1,380.8 360.0,380.0 C363.9,379.2 371.9,377.4 375.0,377.5 C378.1,377.6 382.5,380.6 385.0,381.2 C387.5,381.8 392.2,381.9 395.0,382.5 C397.8,383.1 404.9,385.7 407.5,386.2 C410.1,386.7 413.4,387.0 416.2,386.2 C419.0,385.4 426.4,380.9 430.0,380.0 C433.6,379.1 442.5,379.1 445.0,378.8 C447.5,378.5 449.4,377.7 450.0,377.5" fill="none" stroke="#555" stroke-width="0.5" stroke-linejoin="round" stroke-linecap="butt" stroke-dasharray="2.6 18" stroke-dashoffset="7" opacity="0.7"/>
<path d="M390.0,362.5 L391.2,380.0" fill="none" stroke="#e0e0e0" stroke-width="0.5" stroke-linejoin="round" stroke-linecap="round" />
<path d="M390.0,362.5 L391.2,380.0" fill="none" stroke="#555" stroke-width="0.5" stroke-linejoin="round" stroke-linecap="round" stroke-dasharray="2.6 25" stroke-dashoffset="12" opacity="0.7"/>
<path d="M360.0,402.5 C360.6,401.6 362.2,396.2 365.0,395.0 C367.8,393.8 379.1,393.1 382.5,392.5 C385.9,391.9 390.3,390.9 392.5,390.0 C394.7,389.1 399.1,385.6 400.0,385.0" fill="none" stroke="#e0e0e0" stroke-width="0.5" stroke-linejoin="round" stroke-linecap="round" />
<path d="M360.0,402.5 C360.6,401.6 362.2,396.2 365.0,395.0 C367.8,393.8 379.1,393.1 382.5,392.5 C385.9,391.9 390.3,390.9 392.5,390.0 C394.7,389.1 399.1,385.6 400.0,385.0" fill="none" stroke="#555" stroke-width="0.5" stroke-linejoin="round" stroke-linecap="butt" stroke-dasharray="2.6 32" stroke-dashoffset="0" opacity="0.7"/>
<path d="M416.2,386.2 C415.1,387.6 409.2,395.5 407.5,397.5 C405.8,399.5 404.4,401.2 402.5,402.5 C400.6,403.8 395.0,405.9 392.5,407.5 C390.0,409.1 384.4,412.8 382.5,415.0 C380.6,417.2 378.0,422.5 377.5,425.0 C377.0,427.5 378.6,433.8 378.8,435.0" fill="none" stroke="#e0e0e0" stroke-width="0.5" stroke-linejoin="round" stroke-linecap="round" />
<path d="M416.2,386.2 C415.1,387.6 409.2,395.5 407.5,397.5 C405.8,399.5 404.4,401.2 402.5,402.5 C400.6,403.8 395.0,405.9 392.5,407.5 C390.0,409.1 384.4,412.8 382.5,415.0 C380.6,417.2 378.0,422.5 377.5,425.0 C377.0,427.5 378.6,433.8 378.8,435.0" fill="none" stroke="#555" stroke-width="0.5" stroke-linejoin="round" stroke-linecap="butt" stroke-dasharray="2.6 20" stroke-dashoffset="5" opacity="0.7"/>
<path d="M407.5,397.5 L410.0,405.0" fill="none" stroke="#e0e0e0" stroke-width="0.5" stroke-linejoin="round" stroke-linecap="round" />
<path d="M407.5,397.5 L410.0,405.0" fill="none" stroke="#555" stroke-width="0.5" stroke-linejoin="round" stroke-linecap="round" stroke-dasharray="2.6 27" stroke-dashoffset="10" opacity="0.7"/>
<path d="M405.0,361.2 C405.3,362.9 407.4,371.9 407.5,375.0 C407.6,378.1 406.4,384.8 406.2,386.2" fill="none" stroke="#e0e0e0" stroke-width="0.5" stroke-linejoin="round" stroke-linecap="round" />
<path d="M405.0,361.2 C405.3,362.9 407.4,371.9 407.5,375.0 C407.6,378.1 406.4,384.8 406.2,386.2" fill="none" stroke="#555" stroke-width="0.5" stroke-linejoin="round" stroke-linecap="butt" stroke-dasharray="2.6 15" stroke-dashoffset="15" opacity="0.7"/>
<path d="M300.0,418.8 C301.2,418.9 306.9,420.2 310.0,420.0 C313.1,419.8 320.5,419.7 325.0,417.5 C329.5,415.3 343.6,404.4 346.2,402.5" fill="none" stroke="#e0e0e0" stroke-width="0.5" stroke-linejoin="round" stroke-linecap="round" />
<path d="M300.0,418.8 C301.2,418.9 306.9,420.2 310.0,420.0 C313.1,419.8 320.5,419.7 325.0,417.5 C329.5,415.3 343.6,404.4 346.2,402.5" fill="none" stroke="#555" stroke-width="0.5" stroke-linejoin="round" stroke-linecap="butt" stroke-dasharray="2.6 22" stroke-dashoffset="3" opacity="0.7"/>
<path d="M425.0,372.5 L430.0,380.0" fill="none" stroke="#e0e0e0" stroke-width="0.5" stroke-linejoin="round" stroke-linecap="round" />
<path d="M425.0,372.5 L430.0,380.0" fill="none" stroke="#555" stroke-width="0.5" stroke-linejoin="round" stroke-linecap="round" stroke-dasharray="2.6 29" stroke-dashoffset="8" opacity="0.7"/>
<path d="M382.5,415.0 C384.7,415.3 395.3,417.0 400.0,417.5 C404.7,418.0 415.3,418.8 420.0,418.8 C424.7,418.8 434.4,418.3 437.5,417.5 C440.6,416.7 443.4,413.8 445.0,412.5 C446.6,411.2 449.4,408.1 450.0,407.5" fill="none" stroke="#e0e0e0" stroke-width="0.5" stroke-linejoin="round" stroke-linecap="round" />
<path d="M382.5,415.0 C384.7,415.3 395.3,417.0 400.0,417.5 C404.7,418.0 415.3,418.8 420.0,418.8 C424.7,418.8 434.4,418.3 437.5,417.5 C440.6,416.7 443.4,413.8 445.0,412.5 C446.6,411.2 449.4,408.1 450.0,407.5" fill="none" stroke="#555" stroke-width="0.5" stroke-linejoin="round" stroke-linecap="butt" stroke-dasharray="2.6 17" stroke-dashoffset="13" opacity="0.7"/>
<path d="M437.5,417.5 C437.3,419.1 435.9,427.8 436.2,430.0 C436.5,432.2 439.5,434.4 440.0,435.0" fill="none" stroke="#e0e0e0" stroke-width="0.5" stroke-linejoin="round" stroke-linecap="round" />
<path d="M437.5,417.5 C437.3,419.1 435.9,427.8 436.2,430.0 C436.5,432.2 439.5,434.4 440.0,435.0" fill="none" stroke="#555" stroke-width="0.5" stroke-linejoin="round" stroke-linecap="butt" stroke-dasharray="2.6 24" stroke-dashoffset="1" opacity="0.7"/>
<path d="M415.0,418.8 L416.2,435.0" fill="none" stroke="#e0e0e0" stroke-width="0.5" stroke-linejoin="round" stroke-linecap="round" />
<path d="M415.0,418.8 L416.2,435.0" fill="none" stroke="#555" stroke-width="0.5" stroke-linejoin="round" stroke-linecap="round" stroke-dasharray="2.6 31" stroke-dashoffset="6" opacity="0.7"/>
<path d="M346.2,417.5 C347.9,419.1 357.6,427.8 360.0,430.0 C362.4,432.2 364.4,434.4 365.0,435.0" fill="none" stroke="#e0e0e0" stroke-width="0.5" stroke-linejoin="round" stroke-linecap="round" />
<path d="M346.2,417.5 C347.9,419.1 357.6,427.8 360.0,430.0 C362.4,432.2 364.4,434.4 365.0,435.0" fill="none" stroke="#555" stroke-width="0.5" stroke-linejoin="round" stroke-linecap="butt" stroke-dasharray="2.6 19" stroke-dashoffset="11" opacity="0.7"/>
<path d="M425.0,330.0 C425.6,331.2 428.1,338.4 430.0,340.0 C431.9,341.6 438.8,343.8 440.0,342.5 C441.2,341.2 440.0,331.6 440.0,330.0" fill="none" stroke="#e0e0e0" stroke-width="0.5" stroke-linejoin="round" stroke-linecap="round" />
<path d="M425.0,330.0 C425.6,331.2 428.1,338.4 430.0,340.0 C431.9,341.6 438.8,343.8 440.0,342.5 C441.2,341.2 440.0,331.6 440.0,330.0" fill="none" stroke="#555" stroke-width="0.5" stroke-linejoin="round" stroke-linecap="butt" stroke-dasharray="2.6 26" stroke-dashoffset="16" opacity="0.7"/>
<path d="M367.5,337.5 L368.8,342.5" fill="none" stroke="#e0e0e0" stroke-width="0.5" stroke-linejoin="round" stroke-linecap="round" />
<path d="M367.5,337.5 L368.8,342.5" fill="none" stroke="#555" stroke-width="0.5" stroke-linejoin="round" stroke-linecap="round" stroke-dasharray="2.6 33" stroke-dashoffset="4" opacity="0.7"/>
<path d="M450.0,352.5 C450.9,352.8 455.3,354.8 457.5,355.0 C459.7,355.2 465.3,354.6 467.5,353.8 C469.7,353.0 472.5,349.3 475.0,348.8 C477.5,348.3 485.9,349.9 487.5,350.0" fill="none" stroke="#e0e0e0" stroke-width="0.5" stroke-linejoin="round" stroke-linecap="round" />
<path d="M450.0,352.5 C450.9,352.8 455.3,354.8 457.5,355.0 C459.7,355.2 465.3,354.6 467.5,353.8 C469.7,353.0 472.5,349.3 475.0,348.8 C477.5,348.3 485.9,349.9 487.5,350.0" fill="none" stroke="#555" stroke-width="0.5" stroke-linejoin="round" stroke-linecap="butt" stroke-dasharray="2.6 21" stroke-dashoffset="9" opacity="0.7"/>
<path d="M475.0,348.8 C476.4,349.4 483.6,353.3 486.2,353.8 C488.8,354.3 493.5,352.5 496.2,352.5 C498.9,352.5 505.9,352.2 507.5,353.8 C509.1,355.4 508.6,363.6 508.8,365.0" fill="none" stroke="#e0e0e0" stroke-width="0.5" stroke-linejoin="round" stroke-linecap="round" />
<path d="M475.0,348.8 C476.4,349.4 483.6,353.3 486.2,353.8 C488.8,354.3 493.5,352.5 496.2,352.5 C498.9,352.5 505.9,352.2 507.5,353.8 C509.1,355.4 508.6,363.6 508.8,365.0" fill="none" stroke="#555" stroke-width="0.5" stroke-linejoin="round" stroke-linecap="butt" stroke-dasharray="2.6 28" stroke-dashoffset="14" opacity="0.7"/>
<path d="M495.0,330.0 C495.1,331.2 494.9,338.1 496.2,340.0 C497.4,341.9 503.6,343.3 505.0,345.0 C506.4,346.7 507.2,352.7 507.5,353.8" fill="none" stroke="#e0e0e0" stroke-width="0.5" stroke-linejoin="round" stroke-linecap="round" />
<path d="M495.0,330.0 C495.1,331.2 494.9,338.1 496.2,340.0 C497.4,341.9 503.6,343.3 505.0,345.0 C506.4,346.7 507.2,352.7 507.5,353.8" fill="none" stroke="#555" stroke-width="0.5" stroke-linejoin="round" stroke-linecap="butt" stroke-dasharray="2.6 16" stroke-dashoffset="2" opacity="0.7"/>
<path d="M486.2,353.8 C486.3,355.8 485.6,367.8 487.0,370.0 C488.4,372.2 494.8,371.8 497.5,371.2 C500.2,370.6 506.3,365.6 508.8,365.0 C511.3,364.4 514.9,364.8 517.5,366.2 C520.1,367.6 527.7,375.2 530.0,376.2 C532.3,377.1 535.4,374.1 536.2,373.8" fill="none" stroke="#e0e0e0" stroke-width="0.5" stroke-linejoin="round" stroke-linecap="round" />
<path d="M486.2,353.8 C486.3,355.8 485.6,367.8 487.0,370.0 C488.4,372.2 494.8,371.8 497.5,371.2 C500.2,370.6 506.3,365.6 508.8,365.0 C511.3,364.4 514.9,364.8 517.5,366.2 C520.1,367.6 527.7,375.2 530.0,376.2 C532.3,377.1 535.4,374.1 536.2,373.8" fill="none" stroke="#555" stroke-width="0.5" stroke-linejoin="round" stroke-linecap="butt" stroke-dasharray="2.6 23" stroke-dashoffset="7" opacity="0.7"/>
<path d="M467.5,365.0 C468.4,365.5 472.6,368.2 475.0,368.8 C477.4,369.4 485.5,369.9 487.0,370.0" fill="none" stroke="#e0e0e0" stroke-width="0.5" stroke-linejoin="round" stroke-linecap="round" />
<path d="M467.5,365.0 C468.4,365.5 472.6,368.2 475.0,368.8 C477.4,369.4 485.5,369.9 487.0,370.0" fill="none" stroke="#555" stroke-width="0.5" stroke-linejoin="round" stroke-linecap="butt" stroke-dasharray="2.6 30" stroke-dashoffset="12" opacity="0.7"/>
<path d="M450.0,362.5 C450.9,362.3 455.9,360.3 457.5,361.2 C459.1,362.1 461.2,367.3 462.5,370.0 C463.8,372.7 467.5,379.7 467.5,382.5 C467.5,385.3 463.1,391.2 462.5,392.5" fill="none" stroke="#e0e0e0" stroke-width="0.5" stroke-linejoin="round" stroke-linecap="round" />
<path d="M450.0,362.5 C450.9,362.3 455.9,360.3 457.5,361.2 C459.1,362.1 461.2,367.3 462.5,370.0 C463.8,372.7 467.5,379.7 467.5,382.5 C467.5,385.3 463.1,391.2 462.5,392.5" fill="none" stroke="#555" stroke-width="0.5" stroke-linejoin="round" stroke-linecap="butt" stroke-dasharray="2.6 18" stroke-dashoffset="0" opacity="0.7"/>
<path d="M530.0,376.2 C529.4,377.3 525.9,383.0 525.0,385.0 C524.1,387.0 522.6,389.4 522.5,392.5 C522.4,395.6 523.8,406.2 523.8,410.0 C523.8,413.8 522.7,420.9 522.5,422.5" fill="none" stroke="#e0e0e0" stroke-width="0.5" stroke-linejoin="round" stroke-linecap="round" />
<path d="M530.0,376.2 C529.4,377.3 525.9,383.0 525.0,385.0 C524.1,387.0 522.6,389.4 522.5,392.5 C522.4,395.6 523.8,406.2 523.8,410.0 C523.8,413.8 522.7,420.9 522.5,422.5" fill="none" stroke="#555" stroke-width="0.5" stroke-linejoin="round" stroke-linecap="butt" stroke-dasharray="2.6 25" stroke-dashoffset="5" opacity="0.7"/>
<path d="M475.0,397.5 C476.2,396.6 481.6,391.2 485.0,390.0 C488.4,388.8 497.8,387.2 502.5,387.5 C507.2,387.8 520.0,391.9 522.5,392.5" fill="none" stroke="#e0e0e0" stroke-width="0.5" stroke-linejoin="round" stroke-linecap="round" />
<path d="M475.0,397.5 C476.2,396.6 481.6,391.2 485.0,390.0 C488.4,388.8 497.8,387.2 502.5,387.5 C507.2,387.8 520.0,391.9 522.5,392.5" fill="none" stroke="#555" stroke-width="0.5" stroke-linejoin="round" stroke-linecap="butt" stroke-dasharray="2.6 32" stroke-dashoffset="10" opacity="0.7"/>
<path d="M467.5,397.5 C468.4,397.5 473.1,396.9 475.0,397.5 C476.9,398.1 481.7,401.2 482.5,402.5 C483.3,403.8 481.4,406.9 481.2,407.5" fill="none" stroke="#e0e0e0" stroke-width="0.5" stroke-linejoin="round" stroke-linecap="round" />
<path d="M467.5,397.5 C468.4,397.5 473.1,396.9 475.0,397.5 C476.9,398.1 481.7,401.2 482.5,402.5 C483.3,403.8 481.4,406.9 481.2,407.5" fill="none" stroke="#555" stroke-width="0.5" stroke-linejoin="round" stroke-linecap="butt" stroke-dasharray="2.6 20" stroke-dashoffset="15" opacity="0.7"/>
<path d="M510.0,392.5 C509.1,394.1 503.8,402.8 502.5,405.0 C501.2,407.2 500.3,409.4 500.0,410.0" fill="none" stroke="#e0e0e0" stroke-width="0.5" stroke-linejoin="round" stroke-linecap="round" />
<path d="M510.0,392.5 C509.1,394.1 503.8,402.8 502.5,405.0 C501.2,407.2 500.3,409.4 500.0,410.0" fill="none" stroke="#555" stroke-width="0.5" stroke-linejoin="round" stroke-linecap="butt" stroke-dasharray="2.6 27" stroke-dashoffset="3" opacity="0.7"/>
<path d="M450.0,422.5 C451.6,422.7 460.6,422.2 462.5,423.8 C464.4,425.4 464.7,433.6 465.0,435.0" fill="none" stroke="#e0e0e0" stroke-width="0.5" stroke-linejoin="round" stroke-linecap="round" />
<path d="M450.0,422.5 C451.6,422.7 460.6,422.2 462.5,423.8 C464.4,425.4 464.7,433.6 465.0,435.0" fill="none" stroke="#555" stroke-width="0.5" stroke-linejoin="round" stroke-linecap="butt" stroke-dasharray="2.6 15" stroke-dashoffset="8" opacity="0.7"/>
<path d="M470.0,425.0 C471.2,425.3 477.8,427.5 480.0,427.5 C482.2,427.5 486.6,425.3 487.5,425.0" fill="none" stroke="#e0e0e0" stroke-width="0.5" stroke-linejoin="round" stroke-linecap="round" />
<path d="M470.0,425.0 C471.2,425.3 477.8,427.5 480.0,427.5 C482.2,427.5 486.6,425.3 487.5,425.0" fill="none" stroke="#555" stroke-width="0.5" stroke-linejoin="round" stroke-linecap="butt" stroke-dasharray="2.6 22" stroke-dashoffset="13" opacity="0.7"/>
<path d="M482.5,430.0 L481.2,433.8" fill="none" stroke="#e0e0e0" stroke-width="0.5" stroke-linejoin="round" stroke-linecap="round" />
<path d="M482.5,430.0 L481.2,433.8" fill="none" stroke="#555" stroke-width="0.5" stroke-linejoin="round" stroke-linecap="round" stroke-dasharray="2.6 29" stroke-dashoffset="1" opacity="0.7"/>
<path d="M532.5,375.0 L536.2,383.8" fill="none" stroke="#e0e0e0" stroke-width="0.5" stroke-linejoin="round" stroke-linecap="round" />
<path d="M532.5,375.0 L536.2,383.8" fill="none" stroke="#555" stroke-width="0.5" stroke-linejoin="round" stroke-linecap="round" stroke-dasharray="2.6 17" stroke-dashoffset="6" opacity="0.7"/>
</g>
<path d="M440.8,56.5 L443.8,49.3 L445.9,53.4 L449,52.4 L451,55.4 L454.1,54.4 L456.1,53.4 L457.1,58.5 L459.8,59.5 L458.2,63.6 L455.1,68.7 L453,65.7 L450,61.6 L445.9,60.6 L441.8,59.5 Z" fill="#7fa8d8" stroke="none" stroke-width="0" stroke-linejoin="round" stroke-linecap="round" />
<path d="M351,83 L354,81.2 L357,82 L360,82.6 L363.5,84.5 L361,86 L357.5,84.8 L354.5,85.6 L352,85 Z" fill="#7fa8d8" stroke="none" stroke-width="0" stroke-linejoin="round" stroke-linecap="round" />
<path d="M416.7,193.5 L419,192 L420.5,193 L422,190 L423,192 L425,187 L426,191 L428.6,190 L428.6,195 L426,194 L423,195.2 L420,194.5 L417.5,195 Z" fill="#7fa8d8" stroke="none" stroke-width="0" stroke-linejoin="round" stroke-linecap="round" />
<path d="M186.2,260 L190,256.2 L193.75,253.75 L195,251.2 L197,252.5 L196.2,256.2 L198.75,258 L195,260 L191.2,262 L187.5,262.5 Z" fill="#7fa8d8" stroke="none" stroke-width="0" stroke-linejoin="round" stroke-linecap="round" />
<path d="M421,209.5 L423,208.5 L424.5,209.5 L423,211.5 L421.5,211.5 Z" fill="#7fa8d8" stroke="none" stroke-width="0" stroke-linejoin="round" stroke-linecap="round" />
<path d="M399,139 l0.8,1.6" stroke="#6aa0e0" stroke-width="0.7" fill="none"/>
<path d="M401,144 l0.8,1.6" stroke="#6aa0e0" stroke-width="0.7" fill="none"/>
<path d="M403.5,161 l0.8,1.6" stroke="#6aa0e0" stroke-width="0.7" fill="none"/>
<path d="M404.5,166 l0.8,1.6" stroke="#6aa0e0" stroke-width="0.7" fill="none"/>
<path d="M453,148 l0.8,1.6" stroke="#6aa0e0" stroke-width="0.7" fill="none"/>
<path d="M454,153 l0.8,1.6" stroke="#6aa0e0" stroke-width="0.7" fill="none"/>
<path d="M367,150 l0.8,1.6" stroke="#6aa0e0" stroke-width="0.7" fill="none"/>
<path d="M369,155 l0.8,1.6" stroke="#6aa0e0" stroke-width="0.7" fill="none"/>
<path d="M342,128 l0.8,1.6" stroke="#6aa0e0" stroke-width="0.7" fill="none"/>
<path d="M335,133 l0.8,1.6" stroke="#6aa0e0" stroke-width="0.7" fill="none"/>
<path d="M371,211 l0.8,1.6" stroke="#6aa0e0" stroke-width="0.7" fill="none"/>
<path d="M384,214 l0.8,1.6" stroke="#6aa0e0" stroke-width="0.7" fill="none"/>
<path d="M364,246 l0.8,1.6" stroke="#6aa0e0" stroke-width="0.7" fill="none"/>
<path d="M340,250 l0.8,1.6" stroke="#6aa0e0" stroke-width="0.7" fill="none"/>
<path d="M345,264 l0.8,1.6" stroke="#6aa0e0" stroke-width="0.7" fill="none"/>
<path d="M354,258 l0.8,1.6" stroke="#6aa0e0" stroke-width="0.7" fill="none"/>
<path d="M408,248 l0.8,1.6" stroke="#6aa0e0" stroke-width="0.7" fill="none"/>
<path d="M386,260 l0.8,1.6" stroke="#6aa0e0" stroke-width="0.7" fill="none"/>
<path d="M426,245 l0.8,1.6" stroke="#6aa0e0" stroke-width="0.7" fill="none"/>
<path d="M478,246 l0.8,1.6" stroke="#6aa0e0" stroke-width="0.7" fill="none"/>
<path d="M410,212 l0.8,1.6" stroke="#6aa0e0" stroke-width="0.7" fill="none"/>
<path d="M394,222 l0.8,1.6" stroke="#6aa0e0" stroke-width="0.7" fill="none"/>
<path d="M208,60 l0.8,1.6" stroke="#6aa0e0" stroke-width="0.7" fill="none"/>
<path d="M215,72 l0.8,1.6" stroke="#6aa0e0" stroke-width="0.7" fill="none"/>
<path d="M212,45 l0.8,1.6" stroke="#6aa0e0" stroke-width="0.7" fill="none"/>
<path d="M226,70 l0.8,1.6" stroke="#6aa0e0" stroke-width="0.7" fill="none"/>
<path d="M262,138 l0.8,1.6" stroke="#6aa0e0" stroke-width="0.7" fill="none"/>
<path d="M268,140 l0.8,1.6" stroke="#6aa0e0" stroke-width="0.7" fill="none"/>
<path d="M234,187 l0.8,1.6" stroke="#6aa0e0" stroke-width="0.7" fill="none"/>
<path d="M253,200 l0.8,1.6" stroke="#6aa0e0" stroke-width="0.7" fill="none"/>
<path d="M260,203 l0.8,1.6" stroke="#6aa0e0" stroke-width="0.7" fill="none"/>
<path d="M295,40 l0.8,1.6" stroke="#6aa0e0" stroke-width="0.7" fill="none"/>
<path d="M251,48 l0.8,1.6" stroke="#6aa0e0" stroke-width="0.7" fill="none"/>
<path d="M344,38 l0.8,1.6" stroke="#6aa0e0" stroke-width="0.7" fill="none"/>
<path d="M395,165 l0.8,1.6" stroke="#6aa0e0" stroke-width="0.7" fill="none"/>
<path d="M498,278 l0.8,1.6" stroke="#6aa0e0" stroke-width="0.7" fill="none"/>
<path d="M502,285 l0.8,1.6" stroke="#6aa0e0" stroke-width="0.7" fill="none"/>
<path d="M495,295 l0.8,1.6" stroke="#6aa0e0" stroke-width="0.7" fill="none"/>
<path d="M492,305 l0.8,1.6" stroke="#6aa0e0" stroke-width="0.7" fill="none"/>
<path d="M470,343 l0.8,1.6" stroke="#6aa0e0" stroke-width="0.7" fill="none"/>
<path d="M475,346 l0.8,1.6" stroke="#6aa0e0" stroke-width="0.7" fill="none"/>
<path d="M528,344 l0.8,1.6" stroke="#6aa0e0" stroke-width="0.7" fill="none"/>
<path d="M216,162 l0.8,1.6" stroke="#6aa0e0" stroke-width="0.7" fill="none"/>
<path d="M247,368 l0.8,1.6" stroke="#6aa0e0" stroke-width="0.7" fill="none"/>
<path d="M254,366 l0.8,1.6" stroke="#6aa0e0" stroke-width="0.7" fill="none"/>
<path d="M228,374 l0.8,1.6" stroke="#6aa0e0" stroke-width="0.7" fill="none"/>
<path d="M205,420 l0.8,1.6" stroke="#6aa0e0" stroke-width="0.7" fill="none"/>
<path d="M243,404 l0.8,1.6" stroke="#6aa0e0" stroke-width="0.7" fill="none"/>
<path d="M347,430 l0.8,1.6" stroke="#6aa0e0" stroke-width="0.7" fill="none"/>
<path d="M349,431 l0.8,1.6" stroke="#6aa0e0" stroke-width="0.7" fill="none"/>
<path d="M466,341 l0.8,1.6" stroke="#6aa0e0" stroke-width="0.7" fill="none"/>
<path d="M544,304 l0.8,1.6" stroke="#6aa0e0" stroke-width="0.7" fill="none"/>
<path d="M573,162 l0.8,1.6" stroke="#6aa0e0" stroke-width="0.7" fill="none"/>
<path d="M547,40 l0.8,1.6" stroke="#6aa0e0" stroke-width="0.7" fill="none"/>
<path d="M474,26 l0.8,1.6" stroke="#6aa0e0" stroke-width="0.7" fill="none"/>
<path d="M466,37 l0.8,1.6" stroke="#6aa0e0" stroke-width="0.7" fill="none"/>
<path d="M90,152 l0.8,1.6" stroke="#6aa0e0" stroke-width="0.7" fill="none"/>
<path d="M40,64 l0.8,1.6" stroke="#6aa0e0" stroke-width="0.7" fill="none"/>
<path d="M14,65 l0.8,1.6" stroke="#6aa0e0" stroke-width="0.7" fill="none"/>
<path d="M456,334 l0.8,1.6" stroke="#6aa0e0" stroke-width="0.7" fill="none"/>
<path d="M334.9,340.4 l-0.3,2.5 M337.1,339.1 l-0.5,1.6 M339.9,337.5 l-0.6,2.4 M339.1,336.1 l0.5,1.6 M334.2,338.3 l-0.1,1.9 M337.0,334.7 l2.4,-0.0 M335.6,336.1 l2.4,-0.3 M334.1,340.4 l0.2,1.9 M341.0,340.5 l2.2,0.3" fill="none" stroke="#777" stroke-width="0.45" opacity="0.75"/>
<path d="M345.2,93.2 l1.7,0.4 M343.7,91.2 l2.7,0.1 M342.6,87.6 l2.3,0.3 M345.5,93.2 l-0.1,2.0 M338.7,86.7 l2.1,-0.1 M344.8,90.2 l-0.3,1.5 M340.8,87.4 l0.6,2.8" fill="none" stroke="#777" stroke-width="0.45" opacity="0.75"/>
<path d="M294.5,150.4 l2.7,0.2 M292.8,145.3 l-0.3,2.0 M301.8,149.7 l-0.0,2.8 M293.6,151.3 l0.0,3.0 M298.6,145.8 l0.1,2.1 M292.5,153.5 l2.9,0.5" fill="none" stroke="#777" stroke-width="0.45" opacity="0.75"/>
<path d="M273.5,156.2 l1.8,-0.5 M275.1,164.0 l0.3,1.9 M276.4,157.9 l1.7,-0.3 M280.1,163.2 l0.4,1.9 M274.2,161.2 l0.4,3.3 M272.0,161.0 l0.0,1.9" fill="none" stroke="#777" stroke-width="0.45" opacity="0.75"/>
<path d="M263.2,174.3 l0.5,3.0 M266.1,167.5 l3.4,0.2 M265.8,168.3 l2.0,0.1 M262.7,167.3 l2.1,0.5 M264.6,168.7 l-0.4,2.7" fill="none" stroke="#777" stroke-width="0.45" opacity="0.75"/>
<path d="M388.8,143.1 l2.0,-0.6 M387.6,139.7 l-0.2,3.0 M383.8,142.9 l-0.1,2.6 M387.7,137.1 l0.4,2.0 M388.9,141.8 l-0.2,1.7" fill="none" stroke="#777" stroke-width="0.45" opacity="0.75"/>
<path d="M70,46 L71.2,52.5" fill="none" stroke="#8a8f86" stroke-width="0.5" stroke-linejoin="round" stroke-linecap="round" opacity="0.8"/>
<path d="M95,75 L97.5,85 L96,97.5 L91,98.8" fill="none" stroke="#8a8f86" stroke-width="0.5" stroke-linejoin="round" stroke-linecap="round" opacity="0.8"/>
<path d="M143.7,51 L146,58.7 L142.5,66" fill="none" stroke="#8a8f86" stroke-width="0.5" stroke-linejoin="round" stroke-linecap="round" opacity="0.8"/>
<path d="M62.5,117.5 L61,122.5" fill="none" stroke="#8a8f86" stroke-width="0.5" stroke-linejoin="round" stroke-linecap="round" opacity="0.8"/>
<path d="M66,127.5 L63.7,132.5" fill="none" stroke="#8a8f86" stroke-width="0.5" stroke-linejoin="round" stroke-linecap="round" opacity="0.8"/>
<path d="M98.7,126 L95,132.5" fill="none" stroke="#8a8f86" stroke-width="0.5" stroke-linejoin="round" stroke-linecap="round" opacity="0.8"/>
<path d="M137.5,117.5 L138.7,121" fill="none" stroke="#8a8f86" stroke-width="0.5" stroke-linejoin="round" stroke-linecap="round" opacity="0.8"/>
<path d="M143.7,116 L150,118.7" fill="none" stroke="#8a8f86" stroke-width="0.5" stroke-linejoin="round" stroke-linecap="round" opacity="0.8"/>
<path d="M100,72.5 L107.5,73" fill="none" stroke="#8a8f86" stroke-width="0.5" stroke-linejoin="round" stroke-linecap="round" opacity="0.8"/>
<path d="M131,69.5 L138,69" fill="none" stroke="#8a8f86" stroke-width="0.5" stroke-linejoin="round" stroke-linecap="round" opacity="0.8"/>
<path d="M95,75 C95.4,76.7 97.3,81.2 97.5,85 C97.7,88.8 97.1,95.2 96,97.5 C94.9,99.8 91.8,98.6 91,98.8" fill="none" stroke="#eef3e8" stroke-width="0.5" stroke-linejoin="round" stroke-linecap="round" />
<path d="M112,60 C113.0,63.3 118.0,73.3 118,80 C118.0,86.7 113.0,96.7 112,100" fill="none" stroke="#eef3e8" stroke-width="0.5" stroke-linejoin="round" stroke-linecap="round" />
<path d="M20,150 C23.3,149.7 33.7,147.7 40,148 C46.3,148.3 55.0,151.3 58,152" fill="none" stroke="#eef3e8" stroke-width="0.5" stroke-linejoin="round" stroke-linecap="round" />
<path d="M75,100 C75.8,103.3 79.8,113.7 80,120 C80.2,126.3 76.7,135.0 76,138" fill="none" stroke="#eef3e8" stroke-width="0.5" stroke-linejoin="round" stroke-linecap="round" />
<path d="M152,96.2 L154.1,77.8 L150,77.5 L143.75,82 L136.25,105 L130,110 L125,111 L107,117 L107,140.5 L162.5,140.5 L162.5,171 L154,172.5 L148.3,175.4 L138.7,174 L130.5,183.6 L134.6,189.3 L128.5,195.4 L146.25,210 L143.75,230 L135,246.25 L140,255 L150,261.25 L162.5,258 L162.7,298.2 L182.3,309.4 L175.6,315.6 L179.7,320.7 L180.7,329.9 L209.3,353.8 L213.4,361.6 L203.6,369.3 L186.8,354.4 L183.3,359.5 L186.4,367.7 L187.5,380 L190,389.5 L198.75,385.5 L200,392.5 L203.75,392 L218.75,400.75 L226.25,397 L231.25,405 L230.5,415 L244.5,431.25 L244.5,436 L267.5,436 L275,418.75 L282,407.5 L292.5,410 L300,406.25 L307.5,400.5 L311.25,405 L312.5,422.5 L318.75,412.5 L331.25,406.25 L338.75,421.25 L345,418.75 L347.5,407.5 L360,410.5 L373.75,415 L378,427 L393,431.25 L393.75,435.5 L450,435.5" fill="none" stroke="#a8ee9b" stroke-width="0.75" stroke-linejoin="round" stroke-linecap="round" />
<path d="M154.1,77.8 L152,96.2 L174.5,102.4 L181.7,98.3 L175.6,86.6 L180.7,76.4 L194,91.1 L199.1,93.6 L203.6,89.5 L200.1,96.2 L202.1,116.1 L223.6,118.7 L231.8,109.5 L243,122.8 L270,108.5 L272.5,106.6 L282.3,111.7 L288.4,104.5 L262.7,77.9 L264.7,64.7 L268,53 L276.6,57.1 L285.2,41.5 L295,42.2 L303.6,54.8 L283.7,63.6 L291.9,89.8 L308.9,75.9 L303.6,54.8 L337.9,56.5 L343,65.7 L346.1,85.1 L360.4,97.4 L371.2,92.3 L382.5,115.8 L407.3,114.5 L409.5,141.5 L421,121.7 L428.6,128.4 L468,136 L471.5,128.4 L485.9,128.4 L489.4,122.4 L495.4,120 L478.2,111.2 L484.7,101 L504.9,105.7 L504.9,118.8 L510.2,133.2 L515.7,120 L535.5,132 L517.3,158.9 L531.6,167.7 L514.5,191.6 L521.6,203.6 L536.5,195.7 L536.5,252.5 L536,261.3 L522.8,272 L536.5,282.8" fill="none" stroke="#a8ee9b" stroke-width="0.75" stroke-linejoin="round" stroke-linecap="round" />
<path d="M270,53.3 L266.6,53.3 L262.1,77.8 L270,86" fill="none" stroke="#a8ee9b" stroke-width="0.75" stroke-linejoin="round" stroke-linecap="round" />
<path d="M179.7,320.7 L188.9,320.3 L195.4,308.4 L201.1,317 L218.5,317 L219.1,311.5 L222,310.9 L220.6,317 L227.7,318.2 L231.8,309.4 L243,299.8 L240,294.5 L245.1,293.1 L246.25,290 L244.5,272.5 L256.25,251.25 L275,248.75 L288.75,227.5 L297,231 L305,223 L310,221 L316.6,223.6 L331,217.4 L336,219 L346,215.4 L349.3,218 L357.5,219 L360.5,223.6 L366.7,219 L372.8,223.6 L374.9,226.2 L373.4,231.3 L377,241.6 L385.3,250 L390.4,255.1 L388.4,270.4 L397.6,283.7 L392.1,287.8 L400.7,295 L410.9,293.4 L411.9,297 L418.7,304.2 L430.9,296 L436.5,300.1 L435.8,309.3 L450.2,311.3 L456.9,302.8 L479.4,300.1 L482.5,311.3 L502.5,316.25 L517.5,314.5 L530,310 L531.25,300.5 L537.5,300 L553.75,298.75 L546.25,307.5 L557,317 L552.5,330 L546.25,337.5 L553,367.5 L543.75,377.5 L541.25,367.5 L545,348.75 L537.5,337" fill="none" stroke="#a8ee9b" stroke-width="0.75" stroke-linejoin="round" stroke-linecap="round" />
<path d="M450.2,311.3 L459.6,322.6 L459.6,330.8 L487.5,333.75 L487.5,350 L474,353 L465,365 L466,384 L461,394 L450,409.5 L441.25,418.75 L450,432.5" fill="none" stroke="#a8ee9b" stroke-width="0.75" stroke-linejoin="round" stroke-linecap="round" />
<path d="M537,406.6 L525.3,413.7 L511.8,412 L510.2,420.9 L496.7,431 L496,435 L488,435" fill="none" stroke="#a8ee9b" stroke-width="0.75" stroke-linejoin="round" stroke-linecap="round" />
<path d="M537.5,390 L533.75,392 L537.5,397.5" fill="none" stroke="#a8ee9b" stroke-width="0.75" stroke-linejoin="round" stroke-linecap="round" />
<path d="M536.5,282.8 L536.5,436" fill="none" stroke="#a8ee9b" stroke-width="0.75" stroke-linejoin="round" stroke-linecap="round" />
<path d="M290,224 C292.3,223.5 300.6,222.1 304,221 C307.4,219.9 308.3,218.6 310.4,217.4 C312.5,216.2 311.5,214.7 316.6,214 C321.7,213.3 332.5,213.4 341,213.4 C349.5,213.4 361.2,214.3 367.7,214 C374.2,213.7 375.3,212.4 380,211.5 C384.7,210.6 390.3,209.4 396,208.4 C401.7,207.4 406.1,206.2 414.3,205.3 C422.5,204.4 438.0,203.0 445.3,202.9 C452.6,202.8 452.8,204.0 458.4,204.6 C464.0,205.2 472.5,205.8 478.7,206.5 C484.9,207.2 489.8,208.1 495.4,208.8 C500.9,209.5 504.6,210.4 512,210.8 C519.4,211.2 531.4,211.4 540,211.2 C548.6,211.0 555.1,210.5 563.8,209.5 C572.5,208.5 587.3,205.8 592,205" fill="none" stroke="#fac2e1" stroke-width="0.9" stroke-linejoin="round" stroke-linecap="round" />
<path d="M106,248.75 C107.9,249.3 113.1,252.4 117.5,252 C121.9,251.6 127.1,246.6 132.5,246.25 C137.9,245.9 145.0,249.4 150,250 C155.0,250.6 158.3,250.2 162.5,250 C166.7,249.8 171.2,249.7 175,248.75 C178.8,247.8 180.8,246.2 185,244.5 C189.2,242.8 196.2,239.6 200,238.75 C203.8,237.9 204.2,239.3 207.5,239.5 C210.8,239.7 215.4,240.5 220,240 C224.6,239.5 230.0,237.4 235,236.25 C240.0,235.1 245.4,233.7 250,233 C254.6,232.3 256.7,232.9 262.5,232 C268.3,231.1 280.4,228.8 285,227.5 C289.6,226.2 289.2,224.6 290,224" fill="none" stroke="#fac2e1" stroke-width="0.9" stroke-linejoin="round" stroke-linecap="round" />
<path d="M395.0,20.0 C393.8,23.3 390.4,33.3 387.5,40.0 C384.6,46.7 382.1,50.8 377.5,60.0 C372.9,69.2 363.9,86.7 360.0,95.0 C356.1,103.3 354.8,107.5 353.8,110.0" fill="none" stroke="#fac2e1" stroke-width="0.9" stroke-linejoin="round" stroke-linecap="round" />
<path d="M353.8,110.0 C353.2,112.1 352.1,117.1 350.0,122.5 C347.9,127.9 343.7,136.2 341.2,142.5 C338.7,148.8 336.5,153.3 335.0,160.0 C333.5,166.7 332.4,175.0 332.0,182.5 C331.6,190.0 332.4,201.2 332.5,205.0" fill="none" stroke="#fac2e1" stroke-width="0.9" stroke-linejoin="round" stroke-linecap="round" />
<path d="M333,204.8 C332.5,206.5 331.0,211.9 330,215 C329.0,218.1 327.6,220.9 326.8,223.6 C326.0,226.3 324.9,227.4 325,231 C325.1,234.6 326.5,239.8 327.5,245 C328.5,250.2 330.0,256.6 331,262 C332.0,267.4 332.9,272.0 333.75,277.5 C334.6,283.0 335.7,290.1 336,295 C336.3,299.9 335.8,302.8 335.5,306.7 C335.2,310.6 334.7,314.7 334.2,318.3 C333.7,321.9 333.2,323.9 332.5,328.3 C331.8,332.8 330.8,340.6 330,345 C329.2,349.4 328.5,352.1 327.5,355 C326.5,357.9 325.4,358.3 323.75,362.5 C322.1,366.7 318.8,375.0 317.5,380 C316.2,385.0 315.8,386.2 316,392.5 C316.2,398.8 318.1,410.1 318.75,417.5 C319.4,424.9 319.8,433.8 320,437" fill="none" stroke="#fac2e1" stroke-width="0.9" stroke-linejoin="round" stroke-linecap="round" />
<g clip-path="url(#cityc)">
<path d="M290,224 C292.3,223.5 300.6,222.1 304,221 C307.4,219.9 308.3,218.6 310.4,217.4 C312.5,216.2 311.5,214.7 316.6,214 C321.7,213.3 332.5,213.4 341,213.4 C349.5,213.4 361.2,214.3 367.7,214 C374.2,213.7 375.3,212.4 380,211.5 C384.7,210.6 390.3,209.4 396,208.4 C401.7,207.4 406.1,206.2 414.3,205.3 C422.5,204.4 438.0,203.0 445.3,202.9 C452.6,202.8 452.8,204.0 458.4,204.6 C464.0,205.2 472.5,205.8 478.7,206.5 C484.9,207.2 489.8,208.1 495.4,208.8 C500.9,209.5 504.6,210.4 512,210.8 C519.4,211.2 531.4,211.4 540,211.2 C548.6,211.0 555.1,210.5 563.8,209.5 C572.5,208.5 587.3,205.8 592,205" fill="none" stroke="#fbdde0" stroke-width="1.1" stroke-linejoin="round" stroke-linecap="round" />
<path d="M353.8,110.0 C353.2,112.1 352.1,117.1 350.0,122.5 C347.9,127.9 343.7,136.2 341.2,142.5 C338.7,148.8 336.5,153.3 335.0,160.0 C333.5,166.7 332.4,175.0 332.0,182.5 C331.6,190.0 332.4,201.2 332.5,205.0" fill="none" stroke="#fbdde0" stroke-width="1.1" stroke-linejoin="round" stroke-linecap="round" />
<path d="M333,204.8 C332.5,206.5 331.0,211.9 330,215 C329.0,218.1 327.6,220.9 326.8,223.6 C326.0,226.3 324.9,227.4 325,231 C325.1,234.6 326.5,239.8 327.5,245 C328.5,250.2 330.0,256.6 331,262 C332.0,267.4 332.9,272.0 333.75,277.5 C334.6,283.0 335.7,290.1 336,295 C336.3,299.9 335.8,302.8 335.5,306.7 C335.2,310.6 334.7,314.7 334.2,318.3 C333.7,321.9 333.2,323.9 332.5,328.3 C331.8,332.8 330.8,340.6 330,345 C329.2,349.4 328.5,352.1 327.5,355 C326.5,357.9 325.4,358.3 323.75,362.5 C322.1,366.7 318.8,375.0 317.5,380 C316.2,385.0 315.8,386.2 316,392.5 C316.2,398.8 318.1,410.1 318.75,417.5 C319.4,424.9 319.8,433.8 320,437" fill="none" stroke="#fbdde0" stroke-width="1.1" stroke-linejoin="round" stroke-linecap="round" />
</g>
<path d="M8,415.5 C16.7,417.4 44.7,425.6 60,427 C75.3,428.4 89.3,424.8 100,424 C110.7,423.2 120.0,422.3 124,422" fill="none" stroke="#fac2e1" stroke-width="0.8" stroke-linejoin="round" stroke-linecap="round" />
<path d="M124,422 C128.3,420.8 141.3,414.3 150,415 C158.7,415.7 168.3,422.3 176,426 C183.7,429.7 192.7,435.2 196,437" fill="none" stroke="#fac2e1" stroke-width="0.8" stroke-linejoin="round" stroke-linecap="round" />
<path d="M60.0,21.2 C58.1,22.2 53.2,24.2 48.8,27.5 C44.4,30.8 37.3,37.9 33.8,41.2 C30.2,44.5 30.2,45.6 27.5,47.5 C24.8,49.4 19.9,50.5 17.5,52.5 C15.1,54.5 13.8,58.3 13.0,59.5" fill="none" stroke="#f08d6c" stroke-width="1.1" stroke-linejoin="round" stroke-linecap="round" />
<path d="M7.0,59.5 C8.0,59.5 11.0,58.4 13.0,59.5 C15.0,60.6 16.8,64.3 18.8,66.2 C20.8,68.1 22.1,69.8 25.0,70.8 C27.9,71.8 32.5,72.2 36.2,72.5 C40.0,72.8 44.6,71.9 47.5,72.5 C50.4,73.1 50.9,75.9 53.8,76.2 C56.7,76.5 60.2,74.9 65.0,74.5 C69.8,74.1 77.9,73.7 82.5,74.0 C87.1,74.3 88.8,76.4 92.5,76.2 C96.2,76.0 101.2,73.2 105.0,73.0 C108.8,72.8 112.3,75.1 115.0,75.0 C117.7,74.9 120.2,72.9 121.2,72.5" fill="none" stroke="#f08d6c" stroke-width="1.1" stroke-linejoin="round" stroke-linecap="round" />
<path d="M131,70.3 C132.3,70.1 136.8,69.0 138.7,69.2 C140.6,69.5 140.4,70.9 142.3,71.8 C144.2,72.7 147.3,73.9 150,74.8 C152.7,75.7 155.6,76.5 158.2,77.2 C160.8,77.9 162.6,77.3 165.3,78.9 C168.0,80.5 171.2,85.1 174.5,87 C177.8,88.9 181.6,89.2 184.8,90.1 C188.1,90.9 191.1,90.2 194,92.1 C196.9,94.0 198.9,97.9 202.1,101.3 C205.3,104.7 209.8,109.7 213.4,112.6 C217.0,115.5 220.5,117.4 223.6,118.7 C226.7,120.0 228.6,119.5 231.8,120.2 C235.0,120.9 239.8,121.2 243,122.8 C246.2,124.4 248.8,128.1 251.2,130 C253.6,131.9 253.9,133.6 257.5,134 C261.1,134.4 267.9,131.7 272.5,132.5 C277.1,133.3 281.2,136.2 285,139 C288.8,141.8 292.5,146.2 295,149 C297.5,151.8 297.1,153.5 300,156 C302.9,158.5 307.1,161.7 312.5,164 C317.9,166.3 326.2,168.0 332.5,170 C338.8,172.0 343.3,173.7 350,176 C356.7,178.3 367.1,181.5 372.5,184 C377.9,186.5 377.9,188.3 382.5,191 C387.1,193.7 394.7,197.6 400,200 C405.3,202.4 411.9,204.4 414.3,205.3" fill="none" stroke="#f08d6c" stroke-width="1.1" stroke-linejoin="round" stroke-linecap="round" />
<path d="M343.6,192 C343.6,194.5 342.8,203.2 343.6,206.8 C344.4,210.4 347.5,212.3 348.3,213.4" fill="none" stroke="#f08d6c" stroke-width="1.1" stroke-linejoin="round" stroke-linecap="round" />
<path d="M367.7,215.4 C369.4,217.0 374.9,221.7 378,225 C381.1,228.3 383.9,232.1 386,235.4 C388.1,238.7 389.5,240.5 390.4,245 C391.3,249.5 390.3,256.7 391.5,262.3 C392.7,267.9 396.4,273.8 397.6,278.6 C398.8,283.4 397.6,286.8 398.6,290.9 C399.6,295.0 402.5,299.1 403.7,303.2 C404.9,307.3 406.0,311.0 405.8,315.4 C405.6,319.8 402.4,326.3 402.7,329.8 C403.0,333.3 404.6,334.3 407.5,336.25 C410.4,338.2 415.8,339.4 420,341.25 C424.2,343.1 428.5,344.4 432.5,347.5 C436.5,350.6 440.8,356.1 443.75,360 C446.7,363.9 447.9,367.2 450,371 C452.1,374.8 454.2,378.7 456.25,382.5 C458.3,386.3 460.2,390.4 462.5,393.75 C464.8,397.1 467.1,399.9 470,402.5 C472.9,405.1 475.8,408.0 480,409.5 C484.2,411.0 491.7,410.7 495,411.7 C498.3,412.7 497.6,413.8 500,415.3 C502.4,416.8 506.5,419.5 509.4,420.6 C512.3,421.7 515.1,421.0 517.4,421.7 C519.7,422.4 519.8,423.7 523,424.9 C526.2,426.1 533.8,427.6 536.4,429.1 C539.0,430.6 536.2,432.9 538.5,433.8 C540.8,434.7 546.9,434.9 550,434.6 C553.1,434.3 555.1,433.4 557,432 C558.9,430.6 558.2,428.3 561.25,426.25 C564.2,424.2 569.9,420.8 575,419.5 C580.1,418.2 589.2,418.9 592,418.75" fill="none" stroke="#f08d6c" stroke-width="1.1" stroke-linejoin="round" stroke-linecap="round" />
<path d="M170,436 C170.7,434.7 172.5,429.8 174,428 C175.5,426.2 178.2,425.5 179,425" fill="none" stroke="#f08d6c" stroke-width="1.1" stroke-linejoin="round" stroke-linecap="round" />
<path d="M341.9,20 C341.5,21.7 340.4,25.1 339.4,30.3 C338.4,35.5 336.8,44.7 335.8,51.3 C334.8,57.9 333.9,61.9 333.2,70 C332.5,78.1 332.4,92.0 331.8,100 C331.2,108.0 330.5,112.5 329.5,118 C328.5,123.5 327.2,127.3 325.8,133 C324.4,138.7 322.5,145.8 321,152 C319.5,158.2 317.3,167.0 316.6,170" fill="none" stroke="#b8def7" stroke-width="2.0" stroke-linejoin="round" stroke-linecap="round" />
<path d="M316.6,170 C315.9,171.7 313.6,176.6 312.5,180 C311.4,183.4 310.4,184.2 310,190.4 C309.6,196.6 309.9,210.2 310,217 C310.1,223.8 310.2,224.1 310.4,231.3 C310.6,238.5 310.9,243.6 311,260 C311.1,276.4 311.1,310.0 311,330 C310.9,350.0 310.5,362.2 310.5,380 C310.5,397.8 310.9,427.5 311,437" fill="none" stroke="#b2dcf6" stroke-width="2.5" stroke-linejoin="round" stroke-linecap="round" />
<path d="M341.9,20 C341.5,21.7 340.4,25.1 339.4,30.3 C338.4,35.5 336.8,44.7 335.8,51.3 C334.8,57.9 333.9,61.9 333.2,70 C332.5,78.1 332.4,92.0 331.8,100 C331.2,108.0 330.5,112.5 329.5,118 C328.5,123.5 327.2,127.3 325.8,133 C324.4,138.7 322.5,145.8 321,152 C319.5,158.2 317.3,167.0 316.6,170" fill="none" stroke="#6ab6ef" stroke-width="0.85" stroke-linejoin="round" stroke-linecap="round" />
<path d="M341.9,20 C341.5,21.7 340.4,25.1 339.4,30.3 C338.4,35.5 336.8,44.7 335.8,51.3 C334.8,57.9 333.9,61.9 333.2,70 C332.5,78.1 332.4,92.0 331.8,100 C331.2,108.0 330.5,112.5 329.5,118 C328.5,123.5 327.2,127.3 325.8,133 C324.4,138.7 322.5,145.8 321,152 C319.5,158.2 317.3,167.0 316.6,170" fill="none" stroke="#c4e6fa" stroke-width="0.8" stroke-linejoin="round" stroke-linecap="butt" stroke-dasharray="2 2.5"/>
<path d="M316.6,170 C315.9,171.7 313.6,176.6 312.5,180 C311.4,183.4 310.4,184.2 310,190.4 C309.6,196.6 309.9,210.2 310,217 C310.1,223.8 310.2,224.1 310.4,231.3 C310.6,238.5 310.9,243.6 311,260 C311.1,276.4 311.1,310.0 311,330 C310.9,350.0 310.5,362.2 310.5,380 C310.5,397.8 310.9,427.5 311,437" fill="none" stroke="#56a8ec" stroke-width="0.95" stroke-linejoin="round" stroke-linecap="round" />
<circle cx="339.4" cy="30.3" r="1.45" fill="#4a48ae"/>
<path d="M338.23999999999995,29.43 A1.45,1.45 0 0 1 340.56,29.43 Z" fill="#d8484a"/>
<circle cx="335.8" cy="51.3" r="1.45" fill="#4a48ae"/>
<path d="M334.64,50.43 A1.45,1.45 0 0 1 336.96000000000004,50.43 Z" fill="#d8484a"/>
<circle cx="325.8" cy="133" r="1.45" fill="#4a48ae"/>
<path d="M324.64,132.13 A1.45,1.45 0 0 1 326.96000000000004,132.13 Z" fill="#d8484a"/>
<circle cx="310" cy="217.3" r="1.45" fill="#4a48ae"/>
<path d="M308.84,216.43 A1.45,1.45 0 0 1 311.16,216.43 Z" fill="#d8484a"/>
<circle cx="310.6" cy="305" r="1.45" fill="#4a48ae"/>
<path d="M309.44,304.13 A1.45,1.45 0 0 1 311.76000000000005,304.13 Z" fill="#d8484a"/>
<circle cx="310.7" cy="391.5" r="1.45" fill="#4a48ae"/>
<path d="M309.53999999999996,390.63 A1.45,1.45 0 0 1 311.86,390.63 Z" fill="#d8484a"/>
<circle cx="388.6" cy="38.7" r="1.5" fill="#fdf0f2" stroke="#f6a6b8" stroke-width="0.45"/>
<circle cx="352.5" cy="116" r="1.5" fill="#fdf0f2" stroke="#f6a6b8" stroke-width="0.45"/>
<circle cx="332.4" cy="205" r="1.5" fill="#fdf0f2" stroke="#f6a6b8" stroke-width="0.45"/>
<circle cx="326.8" cy="222" r="1.5" fill="#fdf0f2" stroke="#f6a6b8" stroke-width="0.45"/>
<circle cx="334.2" cy="318.3" r="1.5" fill="#fdf0f2" stroke="#f6a6b8" stroke-width="0.45"/>
<circle cx="317" cy="392.5" r="1.5" fill="#fdf0f2" stroke="#f6a6b8" stroke-width="0.45"/>
<circle cx="458.4" cy="204.6" r="1.5" fill="#fdf0f2" stroke="#f6a6b8" stroke-width="0.45"/>
<circle cx="563.8" cy="209.5" r="1.5" fill="#fdf0f2" stroke="#f6a6b8" stroke-width="0.45"/>
<circle cx="207" cy="238.5" r="1.5" fill="#fdf0f2" stroke="#f6a6b8" stroke-width="0.45"/>
<circle cx="287.5" cy="227.5" r="1.5" fill="#fdf0f2" stroke="#f6a6b8" stroke-width="0.45"/>
<circle cx="178" cy="427" r="1.5" fill="#fdf0f2" stroke="#f6a6b8" stroke-width="0.45"/>
</g>
<text x="270" y="33.8" font-size="11.1" fill="#b9b9b9" textLength="43.3" lengthAdjust="spacingAndGlyphs" >COPIAH</text>
<text x="10" y="82.6" font-size="7" fill="#b4b8b4" textLength="48" lengthAdjust="spacingAndGlyphs" >JEFFERSON</text>
<text x="541.7" y="230.1" font-size="8.4" fill="#b6b6b2" textLength="45.7" lengthAdjust="spacingAndGlyphs" >LAWRENCE</text>
<text x="322.5" y="307.5" font-size="11.6" fill="#b0b0b0" textLength="49.2" lengthAdjust="spacingAndGlyphs" >LINCOLN</text>
<text x="442.9" y="217.2" font-size="7" fill="#98dc9c" textLength="16.7" lengthAdjust="spacingAndGlyphs" >39601</text>
<text x="313" y="331.4" font-size="7" fill="#98dc9c" textLength="17" lengthAdjust="spacingAndGlyphs" >39629</text>
<text x="502.3" y="391.6" font-size="7" fill="#98dc9c" textLength="16.7" lengthAdjust="spacingAndGlyphs" >39662</text>
<text x="111.7" y="292.6" font-size="10" fill="#b4b4b0" text-anchor="end">FRANKLIN</text>
<rect x="8" y="163" width="96.5" height="35.5" fill="#fff" stroke="#8c98ac" stroke-width="0.6"/>
<rect x="8" y="163" width="96.5" height="4.6" fill="#6a96d8"/>
<text x="9.3" y="167.3" font-size="5" fill="#fff" textLength="59" lengthAdjust="spacingAndGlyphs" >ZIP Code Index/Grid Locator</text>
<text x="8.3" y="172.6" font-size="5" fill="#111" >ZIP Code</text>
<text x="36.5" y="172.6" font-size="5" fill="#111" >ZIP Name</text>
<text x="81.5" y="172.6" font-size="5" fill="#111" >LOC</text>
<text x="8.3" y="178.35" font-size="5" fill="#111" >39601</text>
<text x="36.5" y="178.35" font-size="5" fill="#111" >BROOKHAVEN</text>
<text x="81.5" y="178.35" font-size="5" fill="#111" >B6</text>
<text x="8.3" y="184.1" font-size="5" fill="#111" >39601</text>
<text x="36.5" y="184.1" font-size="5" fill="#111" >BROOKHAVEN</text>
<text x="81.5" y="184.1" font-size="5" fill="#111" >F3</text>
<text x="8.3" y="189.85" font-size="5" fill="#111" >39629</text>
<text x="36.5" y="189.85" font-size="5" fill="#111" >BOGUE CHITTO</text>
<text x="81.5" y="189.85" font-size="5" fill="#111" >F6</text>
<text x="8.3" y="195.6" font-size="5" fill="#111" >39662</text>
<text x="36.5" y="195.6" font-size="5" fill="#111" >RUTH</text>
<text x="81.5" y="195.6" font-size="5" fill="#111" >I6</text>
<path d="M26.03,222.27 L29.07,216.83 L23.63,219.87 Z" fill="#111"/>
<path d="M23.63,224.53 L29.07,227.57 L26.03,222.13 Z" fill="#111"/>
<path d="M21.37,222.13 L18.33,227.57 L23.77,224.53 Z" fill="#111"/>
<path d="M23.77,219.87 L18.33,216.83 L21.37,222.27 Z" fill="#111"/>
<path d="M24.95,220.60 L23.70,210.20 L22.45,220.60 Z" fill="#111"/>
<path d="M25.30,223.45 L35.70,222.20 L25.30,220.95 Z" fill="#111"/>
<path d="M22.45,223.80 L23.70,234.20 L24.95,223.80 Z" fill="#111"/>
<path d="M22.10,220.95 L11.70,222.20 L22.10,223.45 Z" fill="#111"/>
<circle cx="23.7" cy="222.2" r="2.1" fill="#fff"/>
<path d="M23.099999999999998,210.6 L24.3,210.6 M11.3,221.6 L11.3,222.79999999999998 M35,221.6 L35,222.79999999999998" stroke="#333" stroke-width="0.5"/>
<text x="38.5" y="218.3" font-size="2" fill="#a6d696" >Homochitto</text>
<text x="40" y="220.6" font-size="2" fill="#a6d696" >Natl Forest</text>
<rect x="8" y="234.5" width="99" height="58.8" fill="#fff" stroke="#c8c8c8" stroke-width="0.5"/>
<rect x="8" y="234.5" width="99" height="5.5" fill="#6a96d8"/>
<text x="27" y="239.2" font-size="4.9" fill="#fff" textLength="61" lengthAdjust="spacingAndGlyphs" >2016 Lincoln County, MS Map</text>
<text x="10.3" y="246.45" font-size="2.9" fill="#5a5a5a" textLength="7" lengthAdjust="spacingAndGlyphs" >County</text>
<path d="M31,245.5 L55,245.5" stroke="#c8c8c8" stroke-width="0.5"/>
<text x="10.3" y="251.45" font-size="2.9" fill="#5a5a5a" textLength="4.9" lengthAdjust="spacingAndGlyphs" >State</text>
<path d="M31,250.5 L55,250.5" stroke="#777" stroke-width="0.9"/>
<text x="10.3" y="256.25" font-size="2.9" fill="#5a5a5a" textLength="8.4" lengthAdjust="spacingAndGlyphs" >ZIP Code</text>
<path d="M31,255.3 L55,255.3" stroke="#a6ea93" stroke-width="0.6"/>
<text x="10.3" y="260.95" font-size="2.9" fill="#5a5a5a" textLength="12.3" lengthAdjust="spacingAndGlyphs" >Primary Streets</text>
<path d="M31,260 L55,260" stroke="#e8e8e8" stroke-width="0.5"/>
<text x="10.3" y="265.95" font-size="2.9" fill="#5a5a5a" textLength="14.4" lengthAdjust="spacingAndGlyphs" >Secondary Streets</text>
<path d="M31,265 L55,265" stroke="#e8e8e8" stroke-width="0.5"/>
<text x="10.3" y="270.45" font-size="2.9" fill="#5a5a5a" textLength="10.9" lengthAdjust="spacingAndGlyphs" >Minor Streets</text>
<path d="M31,269.5 L55,269.5" stroke="#eee" stroke-width="0.4"/>
<text x="10.3" y="275.25" font-size="2.9" fill="#5a5a5a" textLength="13.1" lengthAdjust="spacingAndGlyphs" >State Highways</text>
<path d="M31,274.3 L55,274.3" stroke="#f08d6c" stroke-width="0.9"/>
<text x="10.3" y="280.25" font-size="2.9" fill="#5a5a5a" textLength="11.4" lengthAdjust="spacingAndGlyphs" >US Highways</text>
<path d="M31,279.3 L55,279.3" stroke="#fac2e1" stroke-width="0.9"/>
<text x="10.3" y="284.95" font-size="2.9" fill="#5a5a5a" textLength="15.4" lengthAdjust="spacingAndGlyphs" >Interstate Highways</text>
<path d="M31,284 L55,284" stroke="#58a6e6" stroke-width="0.9"/>
<text x="10.3" y="289.75" font-size="2.9" fill="#5a5a5a" textLength="8.8" lengthAdjust="spacingAndGlyphs" >Toll Roads</text>
<path d="M31,288.8 L55,288.8" stroke="#a5e6a0" stroke-width="0.7"/>
<circle cx="37.5" cy="279.3" r="1.3" fill="#fde" stroke="#fac2e1" stroke-width="0.5"/>
<circle cx="37" cy="284" r="1.3" fill="#4b3f9e"/>
<path d="M31,284 L55,284" stroke="#a5d8f5" stroke-width="1.8" opacity="0.6"/>
<text x="58.4" y="244" font-size="3.2" fill="#222" textLength="21" lengthAdjust="spacingAndGlyphs" >Cities and Towns</text>
<text x="59.3" y="248.3" font-size="3.0" fill="#444" textLength="4.050000000000001" lengthAdjust="spacingAndGlyphs" >City</text>
<text x="59.3" y="252.4" font-size="2.8" fill="#444" textLength="3.78" lengthAdjust="spacingAndGlyphs" >City</text>
<text x="59.3" y="255.9" font-size="2.6" fill="#444" textLength="3.5100000000000002" lengthAdjust="spacingAndGlyphs" >City</text>
<text x="59.3" y="260.7" font-size="2.4" fill="#444" textLength="3.24" lengthAdjust="spacingAndGlyphs" >City</text>
<text x="59.3" y="265" font-size="2.2" fill="#444" textLength="2.9700000000000006" lengthAdjust="spacingAndGlyphs" >City</text>
<text x="84.2" y="248.39999999999998" font-size="2.8" fill="#555" textLength="21.5" lengthAdjust="spacingAndGlyphs" >Over 50,000 and more</text>
<text x="84.2" y="252.6" font-size="2.8" fill="#555" textLength="21.5" lengthAdjust="spacingAndGlyphs" >Cities 25,000 - 50,000</text>
<text x="84.2" y="256.1" font-size="2.8" fill="#555" textLength="21.5" lengthAdjust="spacingAndGlyphs" >Cities 10,000 - 25,000</text>
<text x="84.2" y="260.9" font-size="2.8" fill="#555" textLength="21.5" lengthAdjust="spacingAndGlyphs" >Cities 5,000 - 10,000</text>
<text x="84.2" y="265.3" font-size="2.8" fill="#555" textLength="14" lengthAdjust="spacingAndGlyphs" >Cities 0 - 5,000</text>
<text x="76.8" y="276.5" font-size="2.4" fill="#666" textLength="11.4" lengthAdjust="spacingAndGlyphs" >Scale in Miles</text>
<path d="M66.3,279.5 L66.3,278 L74.5,278 L74.5,277.2 L82.5,277.2 L82.5,278 L98.8,278 L98.8,279.5 M82.5,278 L82.5,279.5" fill="none" stroke="#3f72c0" stroke-width="0.75"/>
<defs><clipPath id="ic"><rect x="8" y="294" width="116.6" height="142"/></clipPath></defs>
<rect x="8" y="294" width="116.4" height="142.2" fill="#fdd478"/>
<g clip-path="url(#ic)">
<path d="M57.1,298.2 L57.1,317.0 L56.0,333.7 L57.1,346.2 L55.0,364.9" fill="none" stroke="#fbedc8" stroke-width="0.6" stroke-linejoin="round" stroke-linecap="round" />
<path d="M43.5,298.2 L43.5,329.5" fill="none" stroke="#fbedc8" stroke-width="0.6" stroke-linejoin="round" stroke-linecap="round" />
<path d="M80.0,307.6 L75.8,329.5 L67.5,348.2 L61.2,364.9" fill="none" stroke="#fbedc8" stroke-width="0.6" stroke-linejoin="round" stroke-linecap="round" />
<path d="M124.8,312.8 L109.2,327.4 L94.6,336.8 L75.8,348.2 L67.5,354.5" fill="none" stroke="#fbedc8" stroke-width="0.6" stroke-linejoin="round" stroke-linecap="round" />
<path d="M102.9,302.4 L105.0,312.8 L109.2,325.3" fill="none" stroke="#fbedc8" stroke-width="0.6" stroke-linejoin="round" stroke-linecap="round" />
<path d="M89.4,336.8 L96.7,336.8 L98.8,344.1 L88.3,348.2 L84.2,344.1" fill="none" stroke="#fbedc8" stroke-width="0.6" stroke-linejoin="round" stroke-linecap="round" />
<path d="M75.8,342.0 L88.3,354.5 L98.8,354.5" fill="none" stroke="#fbedc8" stroke-width="0.6" stroke-linejoin="round" stroke-linecap="round" />
<path d="M73.8,356.6 L94.6,360.8 L109.2,363.9" fill="none" stroke="#fbedc8" stroke-width="0.6" stroke-linejoin="round" stroke-linecap="round" />
<path d="M94.6,348.2 L95.6,364.9" fill="none" stroke="#fbedc8" stroke-width="0.6" stroke-linejoin="round" stroke-linecap="round" />
<path d="M8.1,317.0 L27.9,317.0" fill="none" stroke="#fbedc8" stroke-width="0.6" stroke-linejoin="round" stroke-linecap="round" />
<path d="M8.1,326.4 L34.2,326.4" fill="none" stroke="#fbedc8" stroke-width="0.6" stroke-linejoin="round" stroke-linecap="round" />
<path d="M8.1,332.6 L17.5,332.6" fill="none" stroke="#fbedc8" stroke-width="0.6" stroke-linejoin="round" stroke-linecap="round" />
<path d="M8.1,336.8 L16.5,336.8" fill="none" stroke="#fbedc8" stroke-width="0.6" stroke-linejoin="round" stroke-linecap="round" />
<path d="M21.7,342.0 L32.1,342.0" fill="none" stroke="#fbedc8" stroke-width="0.6" stroke-linejoin="round" stroke-linecap="round" />
<path d="M22.7,356.6 L34.2,358.7" fill="none" stroke="#fbedc8" stroke-width="0.6" stroke-linejoin="round" stroke-linecap="round" />
<path d="M11.2,298.2 L12.3,325.3" fill="none" stroke="#fbedc8" stroke-width="0.6" stroke-linejoin="round" stroke-linecap="round" />
<path d="M17.5,308.7 L27.9,329.5 L40.4,333.7 L52.9,336.8" fill="none" stroke="#fbedc8" stroke-width="0.6" stroke-linejoin="round" stroke-linecap="round" />
<path d="M34.2,329.5 L46.7,342.0" fill="none" stroke="#fbedc8" stroke-width="0.6" stroke-linejoin="round" stroke-linecap="round" />
<path d="M27.9,317.0 L29.0,342.0" fill="none" stroke="#fbedc8" stroke-width="0.6" stroke-linejoin="round" stroke-linecap="round" />
<path d="M46.7,319.1 L55.0,319.1" fill="none" stroke="#fbedc8" stroke-width="0.6" stroke-linejoin="round" stroke-linecap="round" />
<path d="M58.1,323.2 L69.6,323.2" fill="none" stroke="#fbedc8" stroke-width="0.6" stroke-linejoin="round" stroke-linecap="round" />
<path d="M59.2,327.4 L67.5,329.5" fill="none" stroke="#fbedc8" stroke-width="0.6" stroke-linejoin="round" stroke-linecap="round" />
<path d="M44.6,336.8 L54.0,338.9" fill="none" stroke="#fbedc8" stroke-width="0.6" stroke-linejoin="round" stroke-linecap="round" />
<path d="M45.6,350.3 L55.0,352.4" fill="none" stroke="#fbedc8" stroke-width="0.6" stroke-linejoin="round" stroke-linecap="round" />
<path d="M46.7,300.3 L49.8,302.4 L49.8,308.7" fill="none" stroke="#fbedc8" stroke-width="0.6" stroke-linejoin="round" stroke-linecap="round" />
<path d="M61.2,333.7 L65.4,339.9 L71.7,338.9" fill="none" stroke="#fbedc8" stroke-width="0.6" stroke-linejoin="round" stroke-linecap="round" />
<path d="M36.2,304.5 L36.2,314.9" fill="none" stroke="#fbedc8" stroke-width="0.6" stroke-linejoin="round" stroke-linecap="round" />
<path d="M15.4,342.0 L16.5,360.8" fill="none" stroke="#fbedc8" stroke-width="0.6" stroke-linejoin="round" stroke-linecap="round" />
<path d="M9.2,354.5 L21.7,360.8 L30.0,362.8" fill="none" stroke="#fbedc8" stroke-width="0.6" stroke-linejoin="round" stroke-linecap="round" />
<path d="M42.5,354.5 L50.8,356.6 L59.2,354.5" fill="none" stroke="#fbedc8" stroke-width="0.6" stroke-linejoin="round" stroke-linecap="round" />
<path d="M46.7,359.7 L54.0,361.8" fill="none" stroke="#fbedc8" stroke-width="0.6" stroke-linejoin="round" stroke-linecap="round" />
<path d="M67.5,354.5 L73.8,356.6" fill="none" stroke="#fbedc8" stroke-width="0.6" stroke-linejoin="round" stroke-linecap="round" />
<path d="M63.3,346.2 L75.8,342.0" fill="none" stroke="#fbedc8" stroke-width="0.6" stroke-linejoin="round" stroke-linecap="round" />
<path d="M32.1,365.0 L29.0,381.7" fill="none" stroke="#fbedc8" stroke-width="0.6" stroke-linejoin="round" stroke-linecap="round" />
<path d="M38.3,365.0 L34.2,385.8 L30.0,394.2" fill="none" stroke="#fbedc8" stroke-width="0.6" stroke-linejoin="round" stroke-linecap="round" />
<path d="M49.8,365.0 L45.6,385.8 L41.5,402.5 L36.2,417.1 L35.2,425.4" fill="none" stroke="#fbedc8" stroke-width="0.6" stroke-linejoin="round" stroke-linecap="round" />
<path d="M56.0,373.3 L49.8,402.5 L46.7,412.9" fill="none" stroke="#fbedc8" stroke-width="0.6" stroke-linejoin="round" stroke-linecap="round" />
<path d="M61.2,375.4 L57.1,392.1 L56.0,406.7 L54.0,419.2" fill="none" stroke="#fbedc8" stroke-width="0.6" stroke-linejoin="round" stroke-linecap="round" />
<path d="M67.5,371.2 L63.3,392.1 L62.3,417.1 L61.2,431.7" fill="none" stroke="#fbedc8" stroke-width="0.6" stroke-linejoin="round" stroke-linecap="round" />
<path d="M48.8,369.2 L52.9,385.8 L57.1,392.1" fill="none" stroke="#fbedc8" stroke-width="0.6" stroke-linejoin="round" stroke-linecap="round" />
<path d="M43.5,365.0 L40.4,383.8 L37.3,396.2" fill="none" stroke="#fbedc8" stroke-width="0.6" stroke-linejoin="round" stroke-linecap="round" />
<path d="M25.8,365.0 L23.8,377.5" fill="none" stroke="#fbedc8" stroke-width="0.6" stroke-linejoin="round" stroke-linecap="round" />
<path d="M9.2,376.5 L25.8,374.4 L46.7,375.4" fill="none" stroke="#fbedc8" stroke-width="0.6" stroke-linejoin="round" stroke-linecap="round" />
<path d="M24.8,381.7 L42.5,380.6 L59.2,385.8 L73.8,391.0 L96.7,396.2" fill="none" stroke="#fbedc8" stroke-width="0.6" stroke-linejoin="round" stroke-linecap="round" />
<path d="M23.8,386.9 L38.3,385.8 L57.1,392.1" fill="none" stroke="#fbedc8" stroke-width="0.6" stroke-linejoin="round" stroke-linecap="round" />
<path d="M15.4,398.3 L30.0,394.2 L42.5,391.0 L55.0,386.9" fill="none" stroke="#fbedc8" stroke-width="0.6" stroke-linejoin="round" stroke-linecap="round" />
<path d="M9.2,404.6 L21.7,402.5 L34.2,396.2" fill="none" stroke="#fbedc8" stroke-width="0.6" stroke-linejoin="round" stroke-linecap="round" />
<path d="M65.4,381.7 L77.9,384.8 L98.8,385.8" fill="none" stroke="#fbedc8" stroke-width="0.6" stroke-linejoin="round" stroke-linecap="round" />
<path d="M73.8,391.0 L74.8,402.5 L76.9,415.0" fill="none" stroke="#fbedc8" stroke-width="0.6" stroke-linejoin="round" stroke-linecap="round" />
<path d="M75.8,395.2 L96.7,396.2 L107.1,395.2" fill="none" stroke="#fbedc8" stroke-width="0.6" stroke-linejoin="round" stroke-linecap="round" />
<path d="M75.8,400.4 L94.6,402.5 L107.1,404.6" fill="none" stroke="#fbedc8" stroke-width="0.6" stroke-linejoin="round" stroke-linecap="round" />
<path d="M80.0,406.7 L79.0,427.5 L76.9,433.8" fill="none" stroke="#fbedc8" stroke-width="0.6" stroke-linejoin="round" stroke-linecap="round" />
<path d="M87.3,377.5 L88.3,396.2" fill="none" stroke="#fbedc8" stroke-width="0.6" stroke-linejoin="round" stroke-linecap="round" />
<path d="M96.7,383.8 L95.6,402.5 L96.2,417.1" fill="none" stroke="#fbedc8" stroke-width="0.6" stroke-linejoin="round" stroke-linecap="round" />
<path d="M100.8,371.2 L99.8,383.8" fill="none" stroke="#fbedc8" stroke-width="0.6" stroke-linejoin="round" stroke-linecap="round" />
<path d="M58.1,423.3 L57.1,429.6 L61.2,432.7" fill="none" stroke="#fbedc8" stroke-width="0.6" stroke-linejoin="round" stroke-linecap="round" />
<path d="M25.8,406.7 L27.9,417.1 L25.8,427.5 L35.2,426.5" fill="none" stroke="#fbedc8" stroke-width="0.6" stroke-linejoin="round" stroke-linecap="round" />
<path d="M22.7,412.9 L32.1,414.0" fill="none" stroke="#fbedc8" stroke-width="0.6" stroke-linejoin="round" stroke-linecap="round" />
<path d="M23.8,420.2 L31.0,421.2" fill="none" stroke="#fbedc8" stroke-width="0.6" stroke-linejoin="round" stroke-linecap="round" />
<path d="M38.3,392.1 L41.5,402.5" fill="none" stroke="#fbedc8" stroke-width="0.6" stroke-linejoin="round" stroke-linecap="round" />
<path d="M49.8,412.9 L55.0,414.0" fill="none" stroke="#fbedc8" stroke-width="0.6" stroke-linejoin="round" stroke-linecap="round" />
<path d="M57.1,408.8 L63.3,408.8" fill="none" stroke="#fbedc8" stroke-width="0.6" stroke-linejoin="round" stroke-linecap="round" />
<path d="M9.2,369.2 L23.8,370.2 L36.2,368.1" fill="none" stroke="#fbedc8" stroke-width="0.6" stroke-linejoin="round" stroke-linecap="round" />
<path d="M11.2,385.8 L23.8,386.9" fill="none" stroke="#fbedc8" stroke-width="0.6" stroke-linejoin="round" stroke-linecap="round" />
<path d="M11.2,392.1 L19.6,392.1" fill="none" stroke="#fbedc8" stroke-width="0.6" stroke-linejoin="round" stroke-linecap="round" />
<path d="M30.0,400.4 L46.7,396.2 L56.0,398.3" fill="none" stroke="#fbedc8" stroke-width="0.6" stroke-linejoin="round" stroke-linecap="round" />
<path d="M32.1,406.7 L44.6,403.5" fill="none" stroke="#fbedc8" stroke-width="0.6" stroke-linejoin="round" stroke-linecap="round" />
<path d="M67.5,377.5 L73.8,391.0" fill="none" stroke="#fbedc8" stroke-width="0.6" stroke-linejoin="round" stroke-linecap="round" />
<path d="M71.7,369.2 L69.6,380.6" fill="none" stroke="#fbedc8" stroke-width="0.6" stroke-linejoin="round" stroke-linecap="round" />
<path d="M77.9,371.2 L76.9,384.8" fill="none" stroke="#fbedc8" stroke-width="0.6" stroke-linejoin="round" stroke-linecap="round" />
<path d="M84.2,374.4 L83.1,385.8" fill="none" stroke="#fbedc8" stroke-width="0.6" stroke-linejoin="round" stroke-linecap="round" />
<path d="M36.2,371.2 L52.9,373.3 L65.4,376.5" fill="none" stroke="#fbedc8" stroke-width="0.6" stroke-linejoin="round" stroke-linecap="round" />
<path d="M50.6,355.2 L81.3,364.6 M47.2,357.9 L79.7,367.8 M47.3,361.7 L81.6,372.2 M50.0,366.3 L82.1,376.1 M49.3,369.8 L80.5,379.4 M48.2,373.2 L76.4,381.9 M44.6,375.9 L82.6,387.5 M46.1,380.1 L75.9,389.2 M41.3,382.4 L82.0,394.8 M44.4,385.7 L52.1,354.8 M47.3,389.9 L55.1,358.7 M51.2,390.1 L59.2,357.9 M56.2,385.7 L62.5,360.3 M59.5,388.0 L67.5,356.0 M63.4,388.2 L70.7,359.0 M66.1,392.8 L73.9,361.7 M69.9,393.2 L76.9,365.2 M74.5,390.6 L80.8,365.2 M76.9,396.5 L84.9,364.6" fill="none" stroke="#fbedc8" stroke-width="0.5"/>
<path d="M57.1,304.9 l0.0,2.4 M56.6,325.2 l-0.2,2.4 M56.5,339.0 l0.2,2.4 M56.4,352.7 l-0.3,2.4 M43.5,316.9 l0.0,2.4 M77.7,319.6 l-0.5,2.4 M73.1,335.5 l-1.0,2.2 M64.4,356.3 l-0.8,2.2 M117.6,319.6 l-1.8,1.6 M99.9,333.4 l-2.0,1.3 M84.0,343.2 l-2.1,1.2 M72.9,350.4 l-1.9,1.5 M104.3,309.6 l0.5,2.4 M106.1,316.0 l0.8,2.3 M92.4,336.8 l2.4,0.0 M97.9,341.0 l0.7,2.3 M95.9,345.2 l-2.2,0.9 M86.5,346.4 l-1.7,-1.7 M78.5,344.7 l1.7,1.7 M93.9,354.5 l2.4,0.0 M85.9,359.0 l2.4,0.5 M101.7,362.3 l2.3,0.5 M95.2,358.9 l0.1,2.4 M15.2,317.0 l2.4,0.0 M22.4,326.4 l2.4,0.0 M12.8,332.6 l2.4,0.0 M12.2,336.8 l2.4,0.0 M26.2,342.0 l2.4,0.0 M29.8,357.9 l2.4,0.4 M11.9,316.4 l0.1,2.4 M22.0,317.8 l1.1,2.1 M34.6,331.7 l2.3,0.8 M43.3,334.4 l2.3,0.6 M41.1,336.4 l1.7,1.7 M28.5,330.1 l0.1,2.4 M52.5,319.1 l2.4,0.0 M65.1,323.2 l2.4,0.0 M62.0,328.1 l2.3,0.6 M48.3,337.6 l2.3,0.5 M50.6,351.4 l2.3,0.5 M47.4,300.7 l2.0,1.3 M49.8,305.1 l0.0,2.4 M62.4,335.5 l1.3,2.0 M67.0,339.6 l2.4,-0.4 M36.2,306.9 l0.0,2.4 M16.0,353.0 l0.1,2.4 M12.5,356.2 l2.1,1.1 M24.4,361.4 l2.3,0.6 M45.8,355.3 l2.3,0.6 M56.1,355.3 l2.3,-0.6 M48.5,360.2 l2.3,0.7 M70.2,355.4 l2.3,0.8 M69.2,344.2 l2.3,-0.8 M30.1,375.7 l-0.4,2.4 M35.8,377.7 l-0.5,2.4 M31.5,391.1 l-1.1,2.1 M48.4,372.1 l-0.5,2.4 M43.9,392.6 l-0.6,2.3 M39.5,408.0 l-0.8,2.3 M35.6,422.4 l-0.3,2.4 M51.8,393.1 l-0.5,2.3 M48.9,405.4 l-0.7,2.3 M60.0,380.2 l-0.6,2.3 M56.8,396.7 l-0.2,2.4 M55.4,410.7 l-0.4,2.4 M65.6,380.4 l-0.5,2.4 M62.8,404.5 l-0.1,2.4 M61.9,421.9 l-0.2,2.4 M49.6,372.6 l0.6,2.3 M54.6,388.4 l1.3,2.0 M42.3,372.2 l-0.4,2.4 M38.9,389.8 l-0.6,2.3 M24.4,373.5 l-0.4,2.4 M18.3,375.4 l2.4,-0.3 M35.4,374.9 l2.4,0.1 M33.8,381.1 l2.4,-0.1 M51.5,383.4 l2.3,0.7 M62.5,387.0 l2.3,0.8 M88.7,394.4 l2.3,0.5 M32.4,386.3 l2.4,-0.2 M50.3,389.8 l2.3,0.8 M24.1,395.8 l2.3,-0.6 M35.0,392.9 l2.3,-0.6 M47.5,389.4 l2.3,-0.7 M12.3,404.1 l2.4,-0.4 M28.2,399.2 l2.1,-1.1 M68.3,382.4 l2.3,0.6 M82.8,385.0 l2.4,0.1 M74.1,394.5 l0.2,2.4 M75.4,406.0 l0.4,2.4 M83.5,395.6 l2.4,0.1 M99.1,396.0 l2.4,-0.2 M79.6,400.8 l2.4,0.3 M98.0,403.1 l2.4,0.4 M79.7,411.9 l-0.1,2.4 M78.2,429.9 l-0.8,2.3 M87.5,381.5 l0.1,2.4 M96.0,395.7 l-0.1,2.4 M95.9,409.9 l0.1,2.4 M100.5,374.7 l-0.2,2.4 M57.8,425.4 l-0.4,2.4 M58.6,430.8 l1.9,1.4 M26.6,410.7 l0.5,2.4 M27.4,419.8 l-0.5,2.4 M31.7,426.9 l2.4,-0.3 M29.2,413.7 l2.4,0.3 M26.9,420.6 l2.4,0.3 M39.7,396.7 l0.7,2.3 M51.1,413.2 l2.3,0.5 M58.7,408.8 l2.4,0.0 M14.6,369.6 l2.4,0.2 M27.9,369.5 l2.4,-0.4 M18.9,386.5 l2.4,0.2 M13.6,392.1 l2.4,0.0 M33.5,399.5 l2.3,-0.6 M53.0,397.6 l2.3,0.5 M37.9,405.2 l2.3,-0.6 M69.2,381.2 l1.0,2.2 M70.7,374.6 l-0.4,2.4 M77.7,374.1 l-0.2,2.4 M83.7,379.7 l-0.2,2.4 M47.7,372.6 l2.4,0.3 M60.8,375.3 l2.3,0.6" fill="none" stroke="#7f7458" stroke-width="0.4" opacity="0.7"/>
<rect x="33" y="344" width="11" height="8.5" fill="#d6e6cd"/>
<path d="M32,298 C31.0,300.5 27.7,308.3 25.8,313 C23.9,317.7 22.0,321.2 20.6,326.4 C19.2,331.6 18.4,337.6 17.5,344 C16.6,350.4 15.4,359.4 15.4,365 C15.4,370.6 16.8,373.0 17.5,377.5 C18.2,382.0 19.1,386.6 19.6,392 C20.1,397.4 20.2,402.5 20.6,410 C21.0,417.5 21.5,432.5 21.7,437" fill="none" stroke="#f9c2d0" stroke-width="0.9" stroke-linejoin="round" stroke-linecap="round" />
<circle cx="20.6" cy="326.4" r="1.3" fill="#fdeef4" stroke="#f4a8c4" stroke-width="0.4"/>
<circle cx="16" cy="372" r="1.3" fill="#fdeef4" stroke="#f4a8c4" stroke-width="0.4"/>
<circle cx="20.6" cy="409.5" r="1.3" fill="#fdeef4" stroke="#f4a8c4" stroke-width="0.4"/>
<path d="M8,345 C9.6,345.4 14.5,346.1 17.5,347.2 C20.5,348.3 22.7,350.3 25.8,351.4 C28.9,352.4 34.0,352.3 36.3,353.5 C38.6,354.7 37.1,356.9 39.4,358.7 C41.6,360.4 47.5,362.9 49.8,364 C52.0,365.1 49.9,364.0 52.9,365 C55.9,366.0 62.3,368.6 67.5,370.2 C72.7,371.8 79.0,372.8 84.2,374.4 C89.4,376.0 94.0,378.0 98.8,379.6 C103.6,381.2 109.0,382.9 113.3,383.8 C117.6,384.7 122.7,384.6 124.6,384.8" fill="none" stroke="#ee7a3a" stroke-width="1.2" stroke-linejoin="round" stroke-linecap="round" />
<path d="M52.5,415 C52.4,416.7 52.2,421.7 51.9,425.4 C51.5,429.1 50.6,435.1 50.4,437" fill="none" stroke="#ee7a3a" stroke-width="1.0" stroke-linejoin="round" stroke-linecap="round" />
<rect x="26" y="351.3" width="2" height="2" rx="0.6" fill="#dfe8f0" stroke="#9ab" stroke-width="0.3"/>
<rect x="83" y="373.4" width="2" height="2" rx="0.6" fill="#dfe8f0" stroke="#9ab" stroke-width="0.3"/>
<rect x="50.9" y="424.5" width="2" height="2" rx="0.6" fill="#dfe8f0" stroke="#9ab" stroke-width="0.3"/>
</g>
<rect x="8" y="294.2" width="116.4" height="3.6" fill="#5288d0"/>
<text x="9" y="296.9" font-size="2.4" fill="#fff" >Brookhaven Inset</text>
<text x="113" y="296.9" font-size="2.2" fill="#dfe8f6" >Brookhaven</text>
<rect x="8" y="294" width="116.6" height="142" fill="none" stroke="#b89a5a" stroke-width="0.4"/>
<rect x="329.5" y="153.6" width="38.2" height="44.4" fill="none" stroke="#9c9478" stroke-width="0.4"/>
<rect x="329.5" y="153.6" width="38.2" height="1.7" fill="#6a96d8"/>
<rect x="65.5" y="17.4" width="1.2" height="2.9" fill="#fff"/>
<rect x="65.5" y="436.2" width="1.2" height="2.5" fill="#fff"/>
<rect x="123.9" y="17.4" width="1.2" height="2.9" fill="#fff"/>
<rect x="123.9" y="436.2" width="1.2" height="2.5" fill="#fff"/>
<rect x="182.3" y="17.4" width="1.2" height="2.9" fill="#fff"/>
<rect x="182.3" y="436.2" width="1.2" height="2.5" fill="#fff"/>
<rect x="240.7" y="17.4" width="1.2" height="2.9" fill="#fff"/>
<rect x="240.7" y="436.2" width="1.2" height="2.5" fill="#fff"/>
<rect x="299.1" y="17.4" width="1.2" height="2.9" fill="#fff"/>
<rect x="299.1" y="436.2" width="1.2" height="2.5" fill="#fff"/>
<rect x="357.5" y="17.4" width="1.2" height="2.9" fill="#fff"/>
<rect x="357.5" y="436.2" width="1.2" height="2.5" fill="#fff"/>
<rect x="415.9" y="17.4" width="1.2" height="2.9" fill="#fff"/>
<rect x="415.9" y="436.2" width="1.2" height="2.5" fill="#fff"/>
<rect x="474.3" y="17.4" width="1.2" height="2.9" fill="#fff"/>
<rect x="474.3" y="436.2" width="1.2" height="2.5" fill="#fff"/>
<rect x="532.7" y="17.4" width="1.2" height="2.9" fill="#fff"/>
<rect x="532.7" y="436.2" width="1.2" height="2.5" fill="#fff"/>
<rect x="36.4" y="18.4" width="1" height="1.9" fill="#444"/>
<rect x="36.4" y="435.7" width="1" height="2" fill="#444"/>
<rect x="94.8" y="18.4" width="1" height="1.9" fill="#444"/>
<rect x="94.8" y="435.7" width="1" height="2" fill="#444"/>
<rect x="153.2" y="18.4" width="1" height="1.9" fill="#444"/>
<rect x="153.2" y="435.7" width="1" height="2" fill="#444"/>
<rect x="211.6" y="18.4" width="1" height="1.9" fill="#444"/>
<rect x="211.6" y="435.7" width="1" height="2" fill="#444"/>
<rect x="270.0" y="18.4" width="1" height="1.9" fill="#444"/>
<rect x="270.0" y="435.7" width="1" height="2" fill="#444"/>
<rect x="328.4" y="18.4" width="1" height="1.9" fill="#444"/>
<rect x="328.4" y="435.7" width="1" height="2" fill="#444"/>
<rect x="386.8" y="18.4" width="1" height="1.9" fill="#444"/>
<rect x="386.8" y="435.7" width="1" height="2" fill="#444"/>
<rect x="445.2" y="18.4" width="1" height="1.9" fill="#444"/>
<rect x="445.2" y="435.7" width="1" height="2" fill="#444"/>
<rect x="503.6" y="18.4" width="1" height="1.9" fill="#444"/>
<rect x="503.6" y="435.7" width="1" height="2" fill="#444"/>
<rect x="562.0" y="18.4" width="1" height="1.9" fill="#444"/>
<rect x="562.0" y="435.7" width="1" height="2" fill="#444"/>
<rect x="5.3" y="78.8" width="2.7" height="1.2" fill="#fff"/>
<rect x="591.5" y="78.8" width="3.5" height="1.2" fill="#fff"/>
<rect x="5.3" y="138.2" width="2.7" height="1.2" fill="#fff"/>
<rect x="591.5" y="138.2" width="3.5" height="1.2" fill="#fff"/>
<rect x="5.3" y="197.6" width="2.7" height="1.2" fill="#fff"/>
<rect x="591.5" y="197.6" width="3.5" height="1.2" fill="#fff"/>
<rect x="5.3" y="257.0" width="2.7" height="1.2" fill="#fff"/>
<rect x="591.5" y="257.0" width="3.5" height="1.2" fill="#fff"/>
<rect x="5.3" y="316.4" width="2.7" height="1.2" fill="#fff"/>
<rect x="591.5" y="316.4" width="3.5" height="1.2" fill="#fff"/>
<rect x="5.3" y="375.8" width="2.7" height="1.2" fill="#fff"/>
<rect x="591.5" y="375.8" width="3.5" height="1.2" fill="#fff"/>
<rect x="6.1" y="49.2" width="1.9" height="1" fill="#444"/>
<rect x="591.5" y="49.2" width="1.9" height="1" fill="#444"/>
<rect x="6.1" y="108.6" width="1.9" height="1" fill="#444"/>
<rect x="591.5" y="108.6" width="1.9" height="1" fill="#444"/>
<rect x="6.1" y="168.0" width="1.9" height="1" fill="#444"/>
<rect x="591.5" y="168.0" width="1.9" height="1" fill="#444"/>
<rect x="6.1" y="227.4" width="1.9" height="1" fill="#444"/>
<rect x="591.5" y="227.4" width="1.9" height="1" fill="#444"/>
<rect x="6.1" y="286.8" width="1.9" height="1" fill="#444"/>
<rect x="591.5" y="286.8" width="1.9" height="1" fill="#444"/>
<rect x="6.1" y="346.2" width="1.9" height="1" fill="#444"/>
<rect x="591.5" y="346.2" width="1.9" height="1" fill="#444"/>
<rect x="6.1" y="405.6" width="1.9" height="1" fill="#444"/>
<rect x="591.5" y="405.6" width="1.9" height="1" fill="#444"/>
<path d="M554.6,2.3 A1.9,1.9 0 1 0 554.6,5.4" fill="none" stroke="#222" stroke-width="0.9"/>
<path d="M553.9,6.2 L554.6,1.6 L556,1.3 L556.9,3.6 L558.3,1.2 L559.6,1.5 L560,6 L558.6,6.1 L558.4,3.4 L557.2,5.6 L556.4,5.6 L555.5,3.5 L555.2,6.2 Z" fill="#f0562a"/>
<text class="s" x="560" y="5.9" font-size="5" fill="#444" textLength="11.3" lengthAdjust="spacingAndGlyphs" style="font-family:'Liberation Serif',serif">arket</text>
<path d="M555,7 L557,6 L560,6.5 L563,6 L566,7 L565.5,8.3 L563.5,9.5 L561,8.8 L559.5,9.6 L557,9 L555.5,8.3 Z" fill="#5d6cc4"/>
<text x="568.4" y="8.8" font-size="3.5" font-weight="bold" fill="#f0562a" textLength="11.3" lengthAdjust="spacingAndGlyphs">MAPS</text>
<text x="563.8" y="10.9" font-size="1.6" fill="#555" textLength="15" lengthAdjust="spacingAndGlyphs">wall maps · map books</text>
<text x="552" y="13.2" font-size="1.6" fill="#444" textLength="27.7" lengthAdjust="spacingAndGlyphs">Custom mapping solutions for business today</text>
<rect x="580" y="2.5" width="13.4" height="8.8" fill="#d9d9d9"/>
<text x="581.3" y="6.6" font-size="3.6" font-weight="bold" fill="#333" textLength="10.5" lengthAdjust="spacingAndGlyphs">MAP</text>
<text x="580.6" y="10.6" font-size="3.6" font-weight="bold" fill="#333" textLength="12.4" lengthAdjust="spacingAndGlyphs">Widens</text>
</svg>
</body></html>
